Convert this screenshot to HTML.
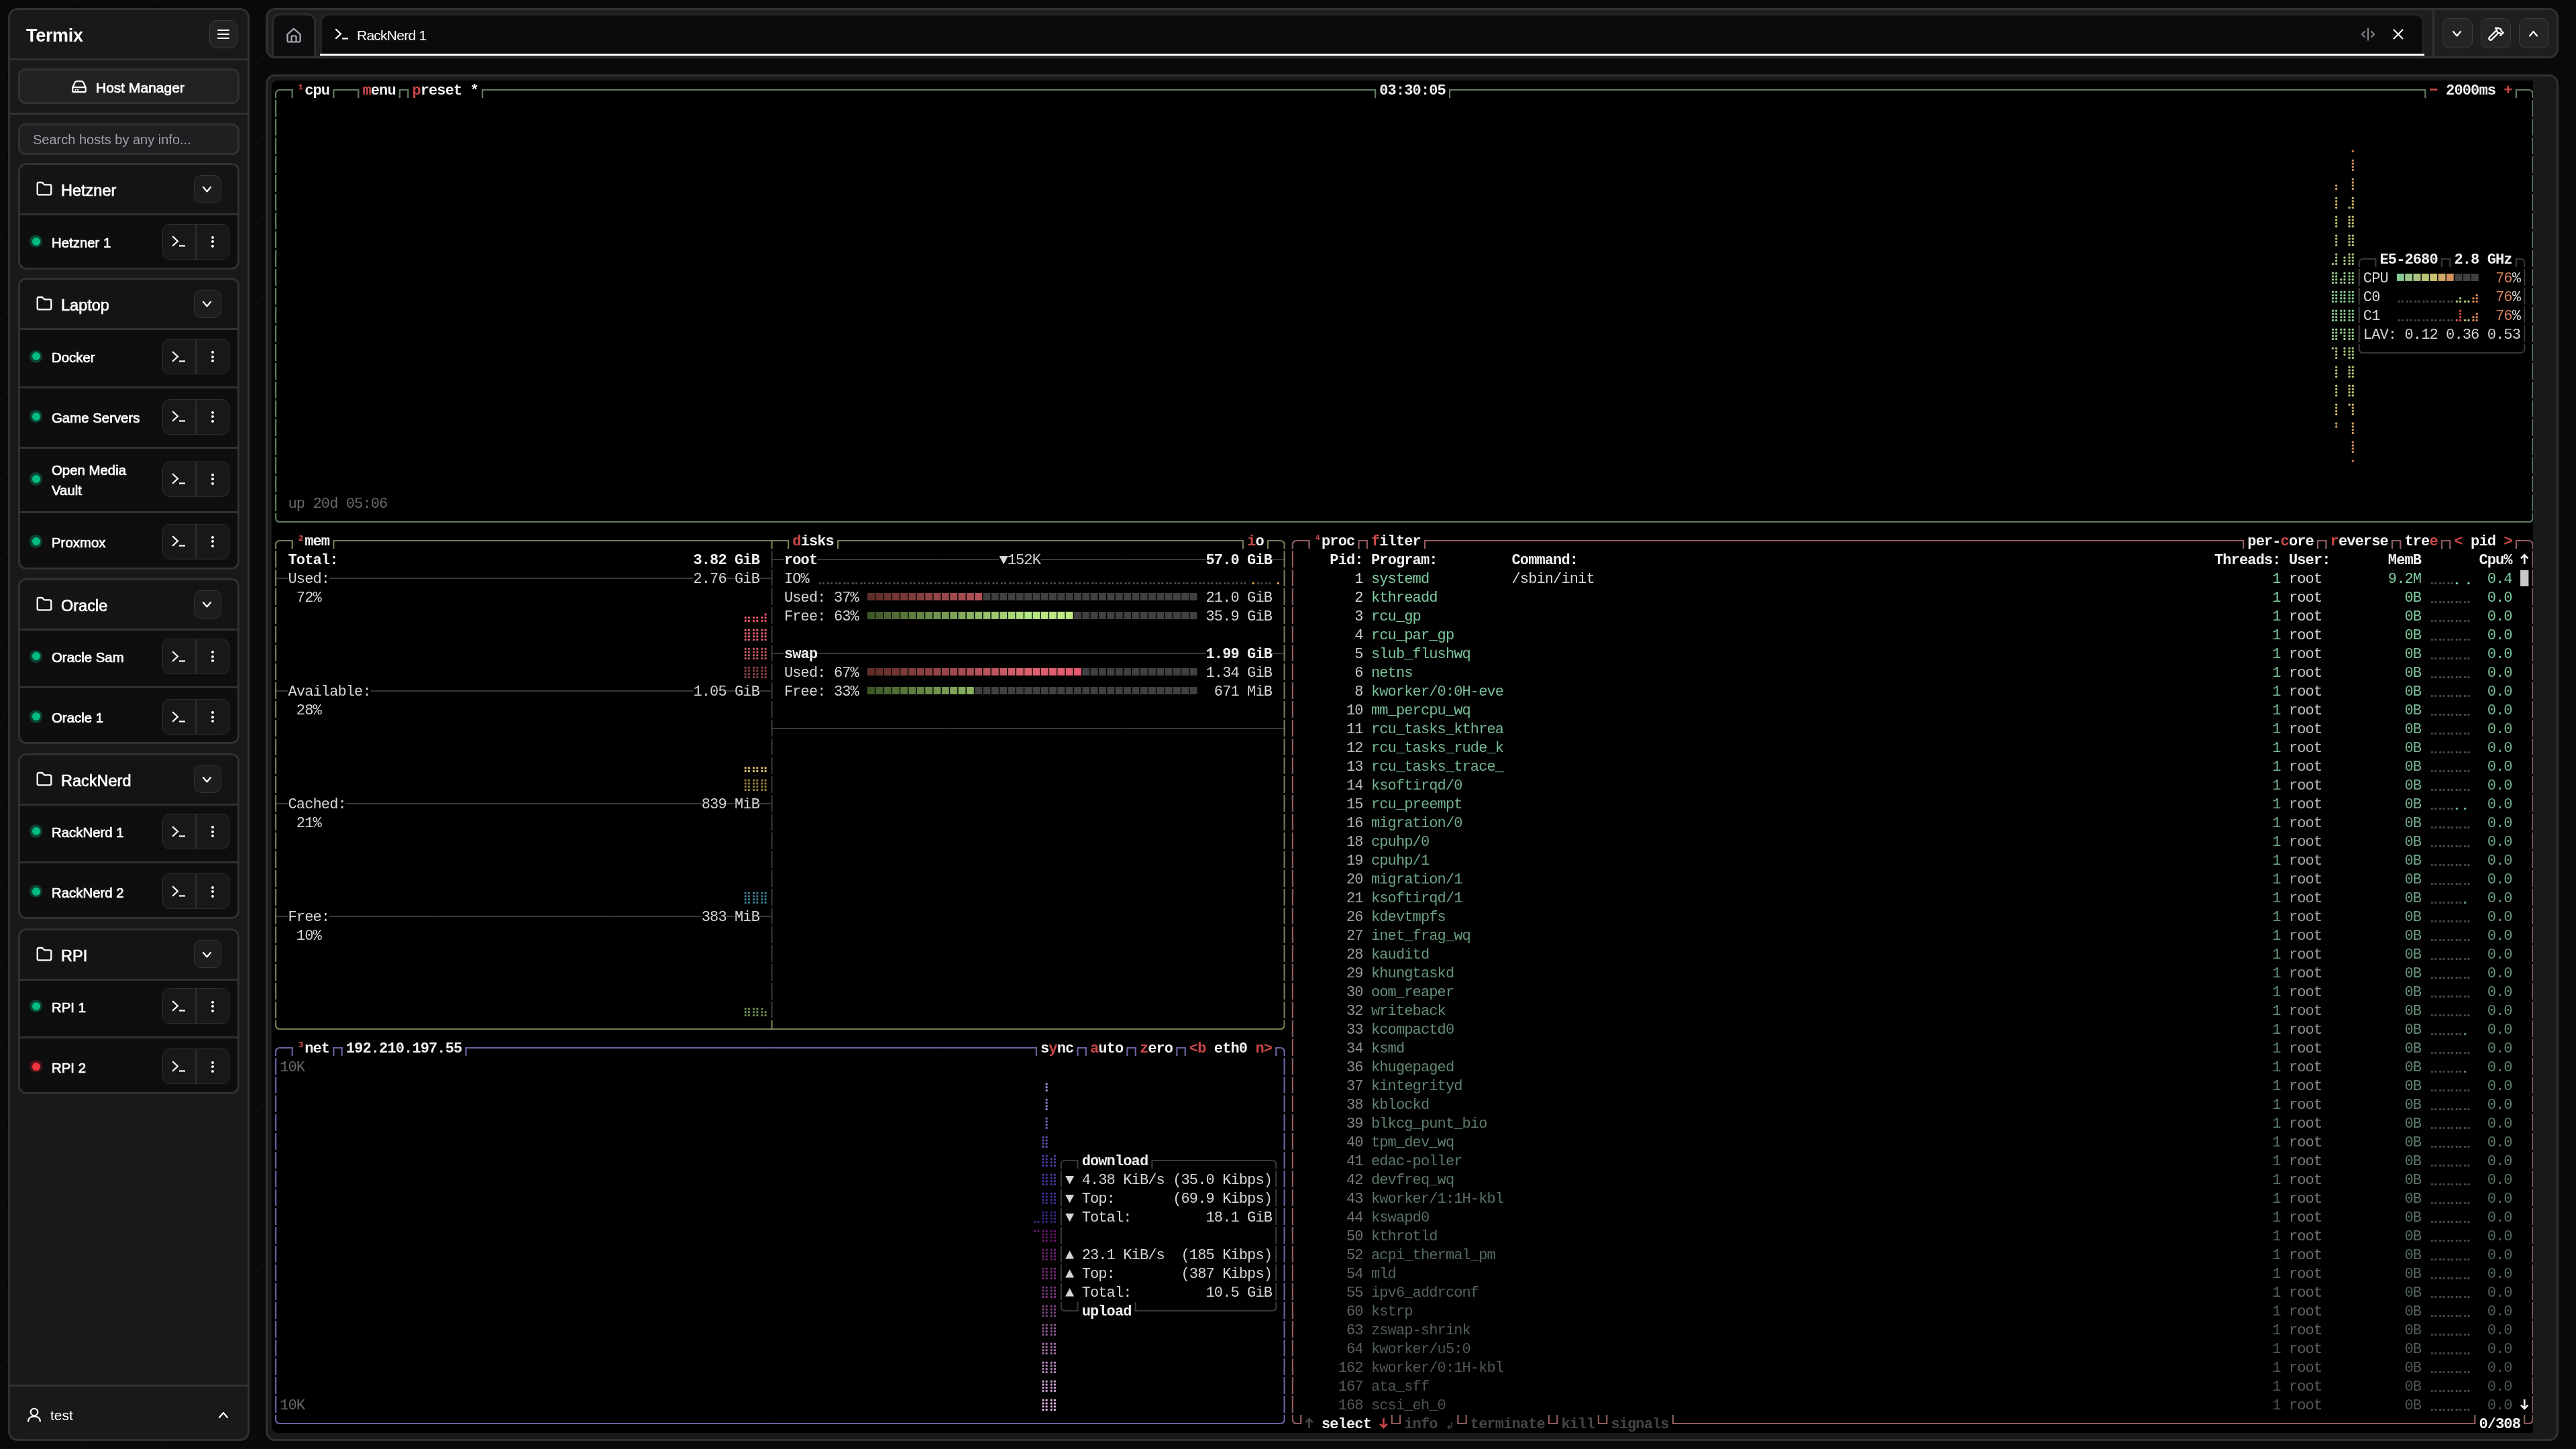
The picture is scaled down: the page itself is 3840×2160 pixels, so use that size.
<!DOCTYPE html><html><head><meta charset="utf-8"><style>
*{margin:0;padding:0}
html,body{width:3840px;height:2160px;overflow:hidden;background:#09090b}
body{position:relative}
#pat{position:absolute;left:0;top:0;width:477.5px;height:2160px;clip-path:inset(0 81.5px 0 0);background:repeating-linear-gradient(-45deg, rgba(0,0,0,0) 0px, rgba(0,0,0,0) 83px, #0e0e11 83px, #0e0e11 85px)}
.abs{position:absolute}
.ui{font-family:"Liberation Sans",sans-serif;white-space:nowrap}
.b{font-weight:bold}
.sb{-webkit-text-stroke:0.7px #fff}
.ui{will-change:transform}
.tg{position:absolute;left:0;top:0}
#term{position:absolute;left:0;top:0;width:3840px;height:2160px;overflow:hidden;clip-path:inset(120.3px 64px 24.1px 405.2px round 9px 0 0 9px);will-change:transform}
#term i{position:absolute;font-style:normal;font-family:"Liberation Mono",monospace;font-size:22px;line-height:28px;letter-spacing:-0.878px;white-space:pre;margin-top:1.3px}
#term i.b{font-weight:bold}
#term i.sup{font-size:19px;font-weight:bold;margin-top:-0.2px;margin-left:0.8px;letter-spacing:0}
.sb{-webkit-text-stroke:0.7px #fff}
.ui{will-change:transform}
</style></head><body>
<div id="pat"></div>
<div class="abs" style="left:12.0px;top:12.0px;width:360.3px;height:2136.0px;background:#19191b;border:3px solid #313134;border-radius:14px;box-sizing:border-box"></div>
<div class="abs ui b" style="left:39px;top:33px;font-size:27px;line-height:40px;color:#fff;letter-spacing:-0.3px">Termix</div>
<div class="abs" style="left:312.0px;top:30.4px;width:42.0px;height:41.4px;border:1.5px solid #3c3c40;border-radius:11px;box-sizing:border-box;background:#222225"></div>
<div class="abs" style="left:324.0px;top:43.7px;width:18.3px;height:2.2px;background:#fff;border-radius:1px"></div>
<div class="abs" style="left:324.0px;top:49.8px;width:18.3px;height:2.2px;background:#fff;border-radius:1px"></div>
<div class="abs" style="left:324.0px;top:55.9px;width:18.3px;height:2.2px;background:#fff;border-radius:1px"></div>
<div class="abs" style="left:15.0px;top:87.0px;width:354.3px;height:3.0px;background:#313134"></div>
<div class="abs" style="left:27.3px;top:102.2px;width:329.5px;height:53.1px;border:3px solid #313134;border-radius:11px;box-sizing:border-box;background:#212124"></div>
<svg class="abs" style="left:103.5px;top:117px" width="28" height="24" viewBox="0 0 28 24"><path d="M4.3 13.2 L8 5.3 Q8.8 4.2 10.3 4.2 H17.7 Q19.2 4.2 20 5.3 L23.7 13.2 M4.3 13.2 V18.4 Q4.3 20.2 6.1 20.2 H21.9 Q23.7 20.2 23.7 18.4 V13.2 Z" fill="none" stroke="#fff" stroke-width="2.2" stroke-linejoin="round"/><circle cx="8.8" cy="16.9" r="1.2" fill="#fff"/><circle cx="12.3" cy="16.9" r="1.2" fill="#fff"/></svg>
<div class="abs ui sb" style="left:143px;top:115.7px;font-size:21px;line-height:30px;color:#fff">Host Manager</div>
<div class="abs" style="left:15.0px;top:167.7px;width:354.3px;height:3.1px;background:#313134"></div>
<div class="abs" style="left:27.3px;top:183.5px;width:329.5px;height:47.5px;border:3px solid #313134;border-radius:11px;box-sizing:border-box;background:#1f1f22"></div>
<div class="abs ui" style="left:48.5px;top:193px;font-size:20px;line-height:30px;color:#a0a0a8">Search hosts by any info...</div>
<div class="abs" style="left:27.0px;top:243.0px;width:330.0px;height:159.0px;background:#0e0e10;border:3px solid #313134;border-radius:12px;box-sizing:border-box;overflow:hidden"></div>
<div class="abs" style="left:30.0px;top:246.0px;width:324.0px;height:72.0px;background:#141416;border-radius:9px 9px 0 0"></div>
<div class="abs" style="left:30.0px;top:318.0px;width:324.0px;height:3.0px;background:#313134"></div>
<svg class="abs" style="left:52.5px;top:270.0px" width="26" height="23" viewBox="0 0 26 23"><path d="M2.7 4 Q2.7 2 4.7 2 H10 L13 5.3 H21.3 Q23.3 5.3 23.3 7.3 V18.3 Q23.3 20.3 21.3 20.3 H4.7 Q2.7 20.3 2.7 18.3 Z" fill="none" stroke="#fff" stroke-width="2.3" stroke-linejoin="round"/></svg>
<div class="abs ui sb" style="left:90.5px;top:269.2px;font-size:23.5px;line-height:30px;color:#fff;-webkit-text-stroke:0.65px #fff">Hetzner</div>
<div class="abs" style="left:288.5px;top:260.9px;width:41.5px;height:41.9px;border:1.5px solid #353538;border-radius:11px;box-sizing:border-box;background:#1d1d20"></div>
<svg class="abs" style="left:301.0px;top:277.0px" width="15" height="10" viewBox="0 0 15 10"><path d="M2 2 L7.5 8.5 L13.0 2" fill="none" stroke="#fff" stroke-width="2.2" stroke-linecap="round" stroke-linejoin="round"/></svg>
<div class="abs" style="left:44.1px;top:350.1px;width:19.4px;height:19.4px;border-radius:50%;background:#0b4430"></div>
<div class="abs" style="left:47.6px;top:353.6px;width:12.4px;height:12.4px;border-radius:50%;background:#03bb83"></div>
<div class="abs ui sb" style="left:77px;top:346.7px;font-size:20.4px;line-height:30px;color:#fff">Hetzner 1</div>
<div class="abs" style="left:242.4px;top:333.5px;width:99.4px;height:53.0px;border:1.5px solid #2e2e31;border-radius:11px;box-sizing:border-box;background:#18181b"></div>
<div class="abs" style="left:291.0px;top:333.5px;width:1.5px;height:53.0px;background:#2e2e31"></div>
<svg class="abs" style="left:256.0px;top:351.3px" width="22" height="18" viewBox="0 0 22 18"><path d="M2 2 L9 8.5 L2 15" fill="none" stroke="#fff" stroke-width="2.2" stroke-linecap="square"/><path d="M11 15.5 H20" stroke="#fff" stroke-width="2.2"/></svg>
<div class="abs" style="left:315.0px;top:351.8px;width:4px;height:4px;border-radius:50%;background:#fff"></div>
<div class="abs" style="left:315.0px;top:358.3px;width:4px;height:4px;border-radius:50%;background:#fff"></div>
<div class="abs" style="left:315.0px;top:364.8px;width:4px;height:4px;border-radius:50%;background:#fff"></div>
<div class="abs" style="left:27.0px;top:414.0px;width:330.0px;height:435.0px;background:#0e0e10;border:3px solid #313134;border-radius:12px;box-sizing:border-box;overflow:hidden"></div>
<div class="abs" style="left:30.0px;top:417.0px;width:324.0px;height:72.0px;background:#141416;border-radius:9px 9px 0 0"></div>
<div class="abs" style="left:30.0px;top:489.0px;width:324.0px;height:3.0px;background:#313134"></div>
<div class="abs" style="left:30.0px;top:576.0px;width:324.0px;height:3.0px;background:#313134"></div>
<div class="abs" style="left:30.0px;top:666.0px;width:324.0px;height:3.0px;background:#313134"></div>
<div class="abs" style="left:30.0px;top:762.0px;width:324.0px;height:3.0px;background:#313134"></div>
<svg class="abs" style="left:52.5px;top:441.0px" width="26" height="23" viewBox="0 0 26 23"><path d="M2.7 4 Q2.7 2 4.7 2 H10 L13 5.3 H21.3 Q23.3 5.3 23.3 7.3 V18.3 Q23.3 20.3 21.3 20.3 H4.7 Q2.7 20.3 2.7 18.3 Z" fill="none" stroke="#fff" stroke-width="2.3" stroke-linejoin="round"/></svg>
<div class="abs ui sb" style="left:90.5px;top:440.2px;font-size:23.5px;line-height:30px;color:#fff;-webkit-text-stroke:0.65px #fff">Laptop</div>
<div class="abs" style="left:288.5px;top:431.9px;width:41.5px;height:41.9px;border:1.5px solid #353538;border-radius:11px;box-sizing:border-box;background:#1d1d20"></div>
<svg class="abs" style="left:301.0px;top:448.0px" width="15" height="10" viewBox="0 0 15 10"><path d="M2 2 L7.5 8.5 L13.0 2" fill="none" stroke="#fff" stroke-width="2.2" stroke-linecap="round" stroke-linejoin="round"/></svg>
<div class="abs" style="left:44.1px;top:521.5px;width:19.4px;height:19.4px;border-radius:50%;background:#0b4430"></div>
<div class="abs" style="left:47.6px;top:525.0px;width:12.4px;height:12.4px;border-radius:50%;background:#03bb83"></div>
<div class="abs ui sb" style="left:77px;top:518.1px;font-size:20.4px;line-height:30px;color:#fff">Docker</div>
<div class="abs" style="left:242.4px;top:504.9px;width:99.4px;height:53.0px;border:1.5px solid #2e2e31;border-radius:11px;box-sizing:border-box;background:#18181b"></div>
<div class="abs" style="left:291.0px;top:504.9px;width:1.5px;height:53.0px;background:#2e2e31"></div>
<svg class="abs" style="left:256.0px;top:522.7px" width="22" height="18" viewBox="0 0 22 18"><path d="M2 2 L9 8.5 L2 15" fill="none" stroke="#fff" stroke-width="2.2" stroke-linecap="square"/><path d="M11 15.5 H20" stroke="#fff" stroke-width="2.2"/></svg>
<div class="abs" style="left:315.0px;top:523.2px;width:4px;height:4px;border-radius:50%;background:#fff"></div>
<div class="abs" style="left:315.0px;top:529.7px;width:4px;height:4px;border-radius:50%;background:#fff"></div>
<div class="abs" style="left:315.0px;top:536.2px;width:4px;height:4px;border-radius:50%;background:#fff"></div>
<div class="abs" style="left:44.1px;top:611.1px;width:19.4px;height:19.4px;border-radius:50%;background:#0b4430"></div>
<div class="abs" style="left:47.6px;top:614.6px;width:12.4px;height:12.4px;border-radius:50%;background:#03bb83"></div>
<div class="abs ui sb" style="left:77px;top:607.7px;font-size:20.4px;line-height:30px;color:#fff">Game Servers</div>
<div class="abs" style="left:242.4px;top:594.5px;width:99.4px;height:53.0px;border:1.5px solid #2e2e31;border-radius:11px;box-sizing:border-box;background:#18181b"></div>
<div class="abs" style="left:291.0px;top:594.5px;width:1.5px;height:53.0px;background:#2e2e31"></div>
<svg class="abs" style="left:256.0px;top:612.3px" width="22" height="18" viewBox="0 0 22 18"><path d="M2 2 L9 8.5 L2 15" fill="none" stroke="#fff" stroke-width="2.2" stroke-linecap="square"/><path d="M11 15.5 H20" stroke="#fff" stroke-width="2.2"/></svg>
<div class="abs" style="left:315.0px;top:612.8px;width:4px;height:4px;border-radius:50%;background:#fff"></div>
<div class="abs" style="left:315.0px;top:619.3px;width:4px;height:4px;border-radius:50%;background:#fff"></div>
<div class="abs" style="left:315.0px;top:625.8px;width:4px;height:4px;border-radius:50%;background:#fff"></div>
<div class="abs" style="left:44.1px;top:704.2px;width:19.4px;height:19.4px;border-radius:50%;background:#0b4430"></div>
<div class="abs" style="left:47.6px;top:707.7px;width:12.4px;height:12.4px;border-radius:50%;background:#03bb83"></div>
<div class="abs ui sb" style="left:77px;top:686.8px;font-size:20.4px;line-height:29.5px;color:#fff">Open Media<br>Vault</div>
<div class="abs" style="left:242.4px;top:687.6px;width:99.4px;height:53.0px;border:1.5px solid #2e2e31;border-radius:11px;box-sizing:border-box;background:#18181b"></div>
<div class="abs" style="left:291.0px;top:687.6px;width:1.5px;height:53.0px;background:#2e2e31"></div>
<svg class="abs" style="left:256.0px;top:705.4px" width="22" height="18" viewBox="0 0 22 18"><path d="M2 2 L9 8.5 L2 15" fill="none" stroke="#fff" stroke-width="2.2" stroke-linecap="square"/><path d="M11 15.5 H20" stroke="#fff" stroke-width="2.2"/></svg>
<div class="abs" style="left:315.0px;top:705.9px;width:4px;height:4px;border-radius:50%;background:#fff"></div>
<div class="abs" style="left:315.0px;top:712.4px;width:4px;height:4px;border-radius:50%;background:#fff"></div>
<div class="abs" style="left:315.0px;top:718.9px;width:4px;height:4px;border-radius:50%;background:#fff"></div>
<div class="abs" style="left:44.1px;top:797.2px;width:19.4px;height:19.4px;border-radius:50%;background:#0b4430"></div>
<div class="abs" style="left:47.6px;top:800.7px;width:12.4px;height:12.4px;border-radius:50%;background:#03bb83"></div>
<div class="abs ui sb" style="left:77px;top:793.8px;font-size:20.4px;line-height:30px;color:#fff">Proxmox</div>
<div class="abs" style="left:242.4px;top:780.6px;width:99.4px;height:53.0px;border:1.5px solid #2e2e31;border-radius:11px;box-sizing:border-box;background:#18181b"></div>
<div class="abs" style="left:291.0px;top:780.6px;width:1.5px;height:53.0px;background:#2e2e31"></div>
<svg class="abs" style="left:256.0px;top:798.4px" width="22" height="18" viewBox="0 0 22 18"><path d="M2 2 L9 8.5 L2 15" fill="none" stroke="#fff" stroke-width="2.2" stroke-linecap="square"/><path d="M11 15.5 H20" stroke="#fff" stroke-width="2.2"/></svg>
<div class="abs" style="left:315.0px;top:798.9px;width:4px;height:4px;border-radius:50%;background:#fff"></div>
<div class="abs" style="left:315.0px;top:805.4px;width:4px;height:4px;border-radius:50%;background:#fff"></div>
<div class="abs" style="left:315.0px;top:811.9px;width:4px;height:4px;border-radius:50%;background:#fff"></div>
<div class="abs" style="left:27.0px;top:862.0px;width:330.0px;height:247.0px;background:#0e0e10;border:3px solid #313134;border-radius:12px;box-sizing:border-box;overflow:hidden"></div>
<div class="abs" style="left:30.0px;top:865.0px;width:324.0px;height:72.0px;background:#141416;border-radius:9px 9px 0 0"></div>
<div class="abs" style="left:30.0px;top:937.0px;width:324.0px;height:3.0px;background:#313134"></div>
<div class="abs" style="left:30.0px;top:1023.0px;width:324.0px;height:3.0px;background:#313134"></div>
<svg class="abs" style="left:52.5px;top:889.0px" width="26" height="23" viewBox="0 0 26 23"><path d="M2.7 4 Q2.7 2 4.7 2 H10 L13 5.3 H21.3 Q23.3 5.3 23.3 7.3 V18.3 Q23.3 20.3 21.3 20.3 H4.7 Q2.7 20.3 2.7 18.3 Z" fill="none" stroke="#fff" stroke-width="2.3" stroke-linejoin="round"/></svg>
<div class="abs ui sb" style="left:90.5px;top:888.2px;font-size:23.5px;line-height:30px;color:#fff;-webkit-text-stroke:0.65px #fff">Oracle</div>
<div class="abs" style="left:288.5px;top:879.9px;width:41.5px;height:41.9px;border:1.5px solid #353538;border-radius:11px;box-sizing:border-box;background:#1d1d20"></div>
<svg class="abs" style="left:301.0px;top:896.0px" width="15" height="10" viewBox="0 0 15 10"><path d="M2 2 L7.5 8.5 L13.0 2" fill="none" stroke="#fff" stroke-width="2.2" stroke-linecap="round" stroke-linejoin="round"/></svg>
<div class="abs" style="left:44.1px;top:968.6px;width:19.4px;height:19.4px;border-radius:50%;background:#0b4430"></div>
<div class="abs" style="left:47.6px;top:972.1px;width:12.4px;height:12.4px;border-radius:50%;background:#03bb83"></div>
<div class="abs ui sb" style="left:77px;top:965.2px;font-size:20.4px;line-height:30px;color:#fff">Oracle Sam</div>
<div class="abs" style="left:242.4px;top:952.0px;width:99.4px;height:53.0px;border:1.5px solid #2e2e31;border-radius:11px;box-sizing:border-box;background:#18181b"></div>
<div class="abs" style="left:291.0px;top:952.0px;width:1.5px;height:53.0px;background:#2e2e31"></div>
<svg class="abs" style="left:256.0px;top:969.8px" width="22" height="18" viewBox="0 0 22 18"><path d="M2 2 L9 8.5 L2 15" fill="none" stroke="#fff" stroke-width="2.2" stroke-linecap="square"/><path d="M11 15.5 H20" stroke="#fff" stroke-width="2.2"/></svg>
<div class="abs" style="left:315.0px;top:970.3px;width:4px;height:4px;border-radius:50%;background:#fff"></div>
<div class="abs" style="left:315.0px;top:976.8px;width:4px;height:4px;border-radius:50%;background:#fff"></div>
<div class="abs" style="left:315.0px;top:983.3px;width:4px;height:4px;border-radius:50%;background:#fff"></div>
<div class="abs" style="left:44.1px;top:1058.3px;width:19.4px;height:19.4px;border-radius:50%;background:#0b4430"></div>
<div class="abs" style="left:47.6px;top:1061.8px;width:12.4px;height:12.4px;border-radius:50%;background:#03bb83"></div>
<div class="abs ui sb" style="left:77px;top:1054.9px;font-size:20.4px;line-height:30px;color:#fff">Oracle 1</div>
<div class="abs" style="left:242.4px;top:1041.7px;width:99.4px;height:53.0px;border:1.5px solid #2e2e31;border-radius:11px;box-sizing:border-box;background:#18181b"></div>
<div class="abs" style="left:291.0px;top:1041.7px;width:1.5px;height:53.0px;background:#2e2e31"></div>
<svg class="abs" style="left:256.0px;top:1059.5px" width="22" height="18" viewBox="0 0 22 18"><path d="M2 2 L9 8.5 L2 15" fill="none" stroke="#fff" stroke-width="2.2" stroke-linecap="square"/><path d="M11 15.5 H20" stroke="#fff" stroke-width="2.2"/></svg>
<div class="abs" style="left:315.0px;top:1060.0px;width:4px;height:4px;border-radius:50%;background:#fff"></div>
<div class="abs" style="left:315.0px;top:1066.5px;width:4px;height:4px;border-radius:50%;background:#fff"></div>
<div class="abs" style="left:315.0px;top:1073.0px;width:4px;height:4px;border-radius:50%;background:#fff"></div>
<div class="abs" style="left:27.0px;top:1122.5px;width:330.0px;height:247.8px;background:#0e0e10;border:3px solid #313134;border-radius:12px;box-sizing:border-box;overflow:hidden"></div>
<div class="abs" style="left:30.0px;top:1125.5px;width:324.0px;height:72.0px;background:#141416;border-radius:9px 9px 0 0"></div>
<div class="abs" style="left:30.0px;top:1197.5px;width:324.0px;height:3.0px;background:#313134"></div>
<div class="abs" style="left:30.0px;top:1283.8px;width:324.0px;height:3.0px;background:#313134"></div>
<svg class="abs" style="left:52.5px;top:1149.5px" width="26" height="23" viewBox="0 0 26 23"><path d="M2.7 4 Q2.7 2 4.7 2 H10 L13 5.3 H21.3 Q23.3 5.3 23.3 7.3 V18.3 Q23.3 20.3 21.3 20.3 H4.7 Q2.7 20.3 2.7 18.3 Z" fill="none" stroke="#fff" stroke-width="2.3" stroke-linejoin="round"/></svg>
<div class="abs ui sb" style="left:90.5px;top:1148.7px;font-size:23.5px;line-height:30px;color:#fff;-webkit-text-stroke:0.65px #fff">RackNerd</div>
<div class="abs" style="left:288.5px;top:1140.4px;width:41.5px;height:41.9px;border:1.5px solid #353538;border-radius:11px;box-sizing:border-box;background:#1d1d20"></div>
<svg class="abs" style="left:301.0px;top:1156.5px" width="15" height="10" viewBox="0 0 15 10"><path d="M2 2 L7.5 8.5 L13.0 2" fill="none" stroke="#fff" stroke-width="2.2" stroke-linecap="round" stroke-linejoin="round"/></svg>
<div class="abs" style="left:44.1px;top:1229.3px;width:19.4px;height:19.4px;border-radius:50%;background:#0b4430"></div>
<div class="abs" style="left:47.6px;top:1232.8px;width:12.4px;height:12.4px;border-radius:50%;background:#03bb83"></div>
<div class="abs ui sb" style="left:77px;top:1225.9px;font-size:20.4px;line-height:30px;color:#fff">RackNerd 1</div>
<div class="abs" style="left:242.4px;top:1212.7px;width:99.4px;height:53.0px;border:1.5px solid #2e2e31;border-radius:11px;box-sizing:border-box;background:#18181b"></div>
<div class="abs" style="left:291.0px;top:1212.7px;width:1.5px;height:53.0px;background:#2e2e31"></div>
<svg class="abs" style="left:256.0px;top:1230.5px" width="22" height="18" viewBox="0 0 22 18"><path d="M2 2 L9 8.5 L2 15" fill="none" stroke="#fff" stroke-width="2.2" stroke-linecap="square"/><path d="M11 15.5 H20" stroke="#fff" stroke-width="2.2"/></svg>
<div class="abs" style="left:315.0px;top:1231.0px;width:4px;height:4px;border-radius:50%;background:#fff"></div>
<div class="abs" style="left:315.0px;top:1237.5px;width:4px;height:4px;border-radius:50%;background:#fff"></div>
<div class="abs" style="left:315.0px;top:1244.0px;width:4px;height:4px;border-radius:50%;background:#fff"></div>
<div class="abs" style="left:44.1px;top:1319.0px;width:19.4px;height:19.4px;border-radius:50%;background:#0b4430"></div>
<div class="abs" style="left:47.6px;top:1322.5px;width:12.4px;height:12.4px;border-radius:50%;background:#03bb83"></div>
<div class="abs ui sb" style="left:77px;top:1315.6px;font-size:20.4px;line-height:30px;color:#fff">RackNerd 2</div>
<div class="abs" style="left:242.4px;top:1302.4px;width:99.4px;height:53.0px;border:1.5px solid #2e2e31;border-radius:11px;box-sizing:border-box;background:#18181b"></div>
<div class="abs" style="left:291.0px;top:1302.4px;width:1.5px;height:53.0px;background:#2e2e31"></div>
<svg class="abs" style="left:256.0px;top:1320.2px" width="22" height="18" viewBox="0 0 22 18"><path d="M2 2 L9 8.5 L2 15" fill="none" stroke="#fff" stroke-width="2.2" stroke-linecap="square"/><path d="M11 15.5 H20" stroke="#fff" stroke-width="2.2"/></svg>
<div class="abs" style="left:315.0px;top:1320.7px;width:4px;height:4px;border-radius:50%;background:#fff"></div>
<div class="abs" style="left:315.0px;top:1327.2px;width:4px;height:4px;border-radius:50%;background:#fff"></div>
<div class="abs" style="left:315.0px;top:1333.7px;width:4px;height:4px;border-radius:50%;background:#fff"></div>
<div class="abs" style="left:27.0px;top:1383.5px;width:330.0px;height:247.5px;background:#0e0e10;border:3px solid #313134;border-radius:12px;box-sizing:border-box;overflow:hidden"></div>
<div class="abs" style="left:30.0px;top:1386.5px;width:324.0px;height:72.0px;background:#141416;border-radius:9px 9px 0 0"></div>
<div class="abs" style="left:30.0px;top:1458.5px;width:324.0px;height:3.0px;background:#313134"></div>
<div class="abs" style="left:30.0px;top:1544.8px;width:324.0px;height:3.0px;background:#313134"></div>
<svg class="abs" style="left:52.5px;top:1410.5px" width="26" height="23" viewBox="0 0 26 23"><path d="M2.7 4 Q2.7 2 4.7 2 H10 L13 5.3 H21.3 Q23.3 5.3 23.3 7.3 V18.3 Q23.3 20.3 21.3 20.3 H4.7 Q2.7 20.3 2.7 18.3 Z" fill="none" stroke="#fff" stroke-width="2.3" stroke-linejoin="round"/></svg>
<div class="abs ui sb" style="left:90.5px;top:1409.7px;font-size:23.5px;line-height:30px;color:#fff;-webkit-text-stroke:0.65px #fff">RPI</div>
<div class="abs" style="left:288.5px;top:1401.4px;width:41.5px;height:41.9px;border:1.5px solid #353538;border-radius:11px;box-sizing:border-box;background:#1d1d20"></div>
<svg class="abs" style="left:301.0px;top:1417.5px" width="15" height="10" viewBox="0 0 15 10"><path d="M2 2 L7.5 8.5 L13.0 2" fill="none" stroke="#fff" stroke-width="2.2" stroke-linecap="round" stroke-linejoin="round"/></svg>
<div class="abs" style="left:44.1px;top:1490.0px;width:19.4px;height:19.4px;border-radius:50%;background:#0b4430"></div>
<div class="abs" style="left:47.6px;top:1493.5px;width:12.4px;height:12.4px;border-radius:50%;background:#03bb83"></div>
<div class="abs ui sb" style="left:77px;top:1486.6px;font-size:20.4px;line-height:30px;color:#fff">RPI 1</div>
<div class="abs" style="left:242.4px;top:1473.4px;width:99.4px;height:53.0px;border:1.5px solid #2e2e31;border-radius:11px;box-sizing:border-box;background:#18181b"></div>
<div class="abs" style="left:291.0px;top:1473.4px;width:1.5px;height:53.0px;background:#2e2e31"></div>
<svg class="abs" style="left:256.0px;top:1491.2px" width="22" height="18" viewBox="0 0 22 18"><path d="M2 2 L9 8.5 L2 15" fill="none" stroke="#fff" stroke-width="2.2" stroke-linecap="square"/><path d="M11 15.5 H20" stroke="#fff" stroke-width="2.2"/></svg>
<div class="abs" style="left:315.0px;top:1491.7px;width:4px;height:4px;border-radius:50%;background:#fff"></div>
<div class="abs" style="left:315.0px;top:1498.2px;width:4px;height:4px;border-radius:50%;background:#fff"></div>
<div class="abs" style="left:315.0px;top:1504.7px;width:4px;height:4px;border-radius:50%;background:#fff"></div>
<div class="abs" style="left:44.1px;top:1580.0px;width:19.4px;height:19.4px;border-radius:50%;background:#4a1419"></div>
<div class="abs" style="left:47.6px;top:1583.5px;width:12.4px;height:12.4px;border-radius:50%;background:#f5333f"></div>
<div class="abs ui sb" style="left:77px;top:1576.6px;font-size:20.4px;line-height:30px;color:#fff">RPI 2</div>
<div class="abs" style="left:242.4px;top:1563.4px;width:99.4px;height:53.0px;border:1.5px solid #2e2e31;border-radius:11px;box-sizing:border-box;background:#18181b"></div>
<div class="abs" style="left:291.0px;top:1563.4px;width:1.5px;height:53.0px;background:#2e2e31"></div>
<svg class="abs" style="left:256.0px;top:1581.2px" width="22" height="18" viewBox="0 0 22 18"><path d="M2 2 L9 8.5 L2 15" fill="none" stroke="#fff" stroke-width="2.2" stroke-linecap="square"/><path d="M11 15.5 H20" stroke="#fff" stroke-width="2.2"/></svg>
<div class="abs" style="left:315.0px;top:1581.7px;width:4px;height:4px;border-radius:50%;background:#fff"></div>
<div class="abs" style="left:315.0px;top:1588.2px;width:4px;height:4px;border-radius:50%;background:#fff"></div>
<div class="abs" style="left:315.0px;top:1594.7px;width:4px;height:4px;border-radius:50%;background:#fff"></div>
<div class="abs" style="left:15.0px;top:2063.6px;width:354.3px;height:3.2px;background:#313134"></div>
<svg class="abs" style="left:40px;top:2097px" width="22" height="24" viewBox="0 0 22 24"><circle cx="11" cy="8" r="5.3" fill="none" stroke="#fff" stroke-width="2.1"/><path d="M2 22.5 Q2 14.5 11 14.5 Q20 14.5 20 22.5" fill="none" stroke="#fff" stroke-width="2.1"/></svg>
<div class="abs ui" style="left:75px;top:2095.4px;font-size:21px;line-height:30px;color:#fff">test</div>
<svg class="abs" style="left:325.0px;top:2104.0px" width="16" height="11" viewBox="0 0 16 11"><path d="M2 9.0 L8.0 2 L14.0 9.0" fill="none" stroke="#fff" stroke-width="2.2" stroke-linecap="round" stroke-linejoin="round"/></svg>
<div class="abs" style="left:396.0px;top:12.0px;width:3418.2px;height:74.7px;background:#1e1e21;border:3px solid #313134;border-radius:14px;box-sizing:border-box"></div>
<div class="abs" style="left:405.0px;top:20.0px;width:65.5px;height:63.7px;background:#0d0d0f;border:3px solid #2a2a2d;border-bottom:none;border-radius:12px 12px 0 0;box-sizing:border-box"></div>
<svg class="abs" style="left:425px;top:40px" width="26" height="26" viewBox="0 0 26 26"><path d="M3.5 11 L13 2.8 L22.5 11 V20.5 Q22.5 22.5 20.5 22.5 H5.5 Q3.5 22.5 3.5 20.5 Z" fill="none" stroke="#aeaeb6" stroke-width="2.2" stroke-linejoin="round"/><path d="M9.5 22.5 V15 Q9.5 13.5 11 13.5 H15 Q16.5 13.5 16.5 15 V22.5" fill="none" stroke="#aeaeb6" stroke-width="2.2"/></svg>
<div class="abs" style="left:477.3px;top:20.0px;width:3136.7px;height:63.7px;background:#0b0b0d;border:3px solid #242427;border-bottom:none;border-radius:14px 14px 0 0;box-sizing:border-box"></div>
<div class="abs" style="left:477.3px;top:79.6px;width:3136.7px;height:3.7px;background:#fff"></div>
<svg class="abs" style="left:499.0px;top:42.0px" width="22" height="18" viewBox="0 0 22 18"><path d="M2 2 L9 8.5 L2 15" fill="none" stroke="#fff" stroke-width="2.2" stroke-linecap="square"/><path d="M11 15.5 H20" stroke="#fff" stroke-width="2.2"/></svg>
<div class="abs ui" style="left:532px;top:37.7px;font-size:21px;line-height:30px;color:#fff;letter-spacing:-0.75px">RackNerd 1</div>
<svg class="abs" style="left:3519px;top:40px" width="22" height="22" viewBox="0 0 22 22"><path d="M11 1.5 V20.5" stroke="#8a8a8e" stroke-width="2"/><path d="M6 7 L2 11 L6 15 M16 7 L20 11 L16 15" fill="none" stroke="#8a8a8e" stroke-width="2" stroke-linecap="round" stroke-linejoin="round"/></svg>
<svg class="abs" style="left:3567px;top:43.3px" width="16" height="16" viewBox="0 0 16 16"><path d="M1.5 1.5 L14.5 14.5 M14.5 1.5 L1.5 14.5" stroke="#fff" stroke-width="2" stroke-linecap="round"/></svg>
<div class="abs" style="left:3626.3px;top:14.8px;width:2.6px;height:69.2px;background:#313134"></div>
<div class="abs" style="left:3641.0px;top:27.2px;width:44.6px;height:44.5px;border:1.5px solid #3c3c40;border-radius:11px;box-sizing:border-box;background:#252528"></div>
<div class="abs" style="left:3698.0px;top:27.2px;width:44.6px;height:44.5px;border:1.5px solid #3c3c40;border-radius:11px;box-sizing:border-box;background:#252528"></div>
<div class="abs" style="left:3755.2px;top:27.2px;width:44.6px;height:44.5px;border:1.5px solid #3c3c40;border-radius:11px;box-sizing:border-box;background:#252528"></div>
<svg class="abs" style="left:3655.0px;top:45.0px" width="15" height="10" viewBox="0 0 15 10"><path d="M2 2 L7.5 8.5 L13.0 2" fill="none" stroke="#fff" stroke-width="2.2" stroke-linecap="round" stroke-linejoin="round"/></svg>
<svg class="abs" style="left:3769.0px;top:45.0px" width="15" height="10" viewBox="0 0 15 10"><path d="M2 8.5 L7.5 2 L13.0 8.5" fill="none" stroke="#fff" stroke-width="2.2" stroke-linecap="round" stroke-linejoin="round"/></svg>
<svg class="abs" style="left:3707px;top:36px" width="27" height="27" viewBox="0 0 24 24"><g fill="none" stroke="#fff" stroke-width="2" stroke-linecap="round" stroke-linejoin="round"><path d="m15 12-8.373 8.373a1 1 0 1 1-3-3L12 9"/><path d="m18 15 4-4"/><path d="m21.5 11.5-1.914-1.914A2 2 0 0 1 19 8.172V7l-2.26-1.13a6 6 0 0 0-2.476-.63H11.5l.5.5c.888.888 1.5 2.5 1.5 3.5v.5l2 2h1.172a2 2 0 0 1 1.414.586L19.5 13.5"/></g></svg>
<div class="abs" style="left:396.0px;top:110.9px;width:3418.2px;height:2037.1px;background:#19191b;border:3px solid #313134;border-radius:14px;box-sizing:border-box"></div>
<div class="abs" style="left:405.2px;top:120.3px;width:3370.8px;height:2015.6px;background:#000;border-radius:9px 0 0 9px"></div>
<div id="term">
<svg class="tg" width="3840" height="2160" viewBox="0 0 3840 2160">
<path fill="none" stroke="#617c62" stroke-width="2.2" d="M417.21 134H416.55A5.5 5.5 0 0 0 411.05 139.5V145.9M3769.34 134H3770A5.5 5.5 0 0 1 3775.5 139.5V145.9M411.05 765.1V772.5A5.5 5.5 0 0 0 416.55 778H417.21M3775.5 765.1V772.5A5.5 5.5 0 0 1 3770 778H3769.34M417.21 134H429.54M429.54 134H436.8M435.7 134V145.9M496.22 134H503.48M497.32 134V145.9M503.48 134H515.81M515.81 134H528.13M528.13 134H535.39M534.29 134V145.9M594.81 134H602.07M595.91 134V145.9M602.07 134H609.34M608.24 134V145.9M718.05 134H725.31M719.15 134V145.9M725.31 134H737.64M737.64 134H749.96M749.96 134H762.29M762.29 134H774.61M774.61 134H786.93M786.93 134H799.26M799.26 134H811.58M811.58 134H823.91M823.91 134H836.23M836.23 134H848.55M848.55 134H860.88M860.88 134H873.2M873.2 134H885.53M885.53 134H897.85M897.85 134H910.17M910.17 134H922.5M922.5 134H934.82M934.82 134H947.15M947.15 134H959.47M959.47 134H971.79M971.79 134H984.12M984.12 134H996.44M996.44 134H1008.77M1008.77 134H1021.09M1021.09 134H1033.41M1033.41 134H1045.74M1045.74 134H1058.06M1058.06 134H1070.39M1070.39 134H1082.71M1082.71 134H1095.03M1095.03 134H1107.36M1107.36 134H1119.68M1119.68 134H1132.01M1132.01 134H1144.33M1144.33 134H1156.65M1156.65 134H1168.98M1168.98 134H1181.3M1181.3 134H1193.63M1193.63 134H1205.95M1205.95 134H1218.27M1218.27 134H1230.6M1230.6 134H1242.92M1242.92 134H1255.25M1255.25 134H1267.57M1267.57 134H1279.89M1279.89 134H1292.22M1292.22 134H1304.54M1304.54 134H1316.87M1316.87 134H1329.19M1329.19 134H1341.51M1341.51 134H1353.84M1353.84 134H1366.16M1366.16 134H1378.49M1378.49 134H1390.81M1390.81 134H1403.13M1403.13 134H1415.46M1415.46 134H1427.78M1427.78 134H1440.11M1440.11 134H1452.43M1452.43 134H1464.75M1464.75 134H1477.08M1477.08 134H1489.4M1489.4 134H1501.73M1501.73 134H1514.05M1514.05 134H1526.37M1526.37 134H1538.7M1538.7 134H1551.02M1551.02 134H1563.35M1563.35 134H1575.67M1575.67 134H1587.99M1587.99 134H1600.32M1600.32 134H1612.64M1612.64 134H1624.97M1624.97 134H1637.29M1637.29 134H1649.61M1649.61 134H1661.94M1661.94 134H1674.26M1674.26 134H1686.59M1686.59 134H1698.91M1698.91 134H1711.23M1711.23 134H1723.56M1723.56 134H1735.88M1735.88 134H1748.21M1748.21 134H1760.53M1760.53 134H1772.85M1772.85 134H1785.18M1785.18 134H1797.5M1797.5 134H1809.83M1809.83 134H1822.15M1822.15 134H1834.47M1834.47 134H1846.8M1846.8 134H1859.12M1859.12 134H1871.45M1871.45 134H1883.77M1883.77 134H1896.09M1896.09 134H1908.42M1908.42 134H1920.74M1920.74 134H1933.07M1933.07 134H1945.39M1945.39 134H1957.71M1957.71 134H1970.04M1970.04 134H1982.36M1982.36 134H1994.69M1994.69 134H2007.01M2007.01 134H2019.33M2019.33 134H2031.66M2031.66 134H2043.98M2043.98 134H2051.24M2050.14 134V145.9M2159.96 134H2167.22M2161.06 134V145.9M2167.22 134H2179.55M2179.55 134H2191.87M2191.87 134H2204.19M2204.19 134H2216.52M2216.52 134H2228.84M2228.84 134H2241.17M2241.17 134H2253.49M2253.49 134H2265.81M2265.81 134H2278.14M2278.14 134H2290.46M2290.46 134H2302.79M2302.79 134H2315.11M2315.11 134H2327.43M2327.43 134H2339.76M2339.76 134H2352.08M2352.08 134H2364.41M2364.41 134H2376.73M2376.73 134H2389.05M2389.05 134H2401.38M2401.38 134H2413.7M2413.7 134H2426.03M2426.03 134H2438.35M2438.35 134H2450.67M2450.67 134H2463M2463 134H2475.32M2475.32 134H2487.65M2487.65 134H2499.97M2499.97 134H2512.29M2512.29 134H2524.62M2524.62 134H2536.94M2536.94 134H2549.27M2549.27 134H2561.59M2561.59 134H2573.91M2573.91 134H2586.24M2586.24 134H2598.56M2598.56 134H2610.89M2610.89 134H2623.21M2623.21 134H2635.53M2635.53 134H2647.86M2647.86 134H2660.18M2660.18 134H2672.51M2672.51 134H2684.83M2684.83 134H2697.15M2697.15 134H2709.48M2709.48 134H2721.8M2721.8 134H2734.13M2734.13 134H2746.45M2746.45 134H2758.77M2758.77 134H2771.1M2771.1 134H2783.42M2783.42 134H2795.75M2795.75 134H2808.07M2808.07 134H2820.39M2820.39 134H2832.72M2832.72 134H2845.04M2845.04 134H2857.37M2857.37 134H2869.69M2869.69 134H2882.01M2882.01 134H2894.34M2894.34 134H2906.66M2906.66 134H2918.99M2918.99 134H2931.31M2931.31 134H2943.63M2943.63 134H2955.96M2955.96 134H2968.28M2968.28 134H2980.61M2980.61 134H2992.93M2992.93 134H3005.25M3005.25 134H3017.58M3017.58 134H3029.9M3029.9 134H3042.23M3042.23 134H3054.55M3054.55 134H3066.87M3066.87 134H3079.2M3079.2 134H3091.52M3091.52 134H3103.85M3103.85 134H3116.17M3116.17 134H3128.49M3128.49 134H3140.82M3140.82 134H3153.14M3153.14 134H3165.47M3165.47 134H3177.79M3177.79 134H3190.11M3190.11 134H3202.44M3202.44 134H3214.76M3214.76 134H3227.09M3227.09 134H3239.41M3239.41 134H3251.73M3251.73 134H3264.06M3264.06 134H3276.38M3276.38 134H3288.71M3288.71 134H3301.03M3301.03 134H3313.35M3313.35 134H3325.68M3325.68 134H3338M3338 134H3350.33M3350.33 134H3362.65M3362.65 134H3374.97M3374.97 134H3387.3M3387.3 134H3399.62M3399.62 134H3411.95M3411.95 134H3424.27M3424.27 134H3436.59M3436.59 134H3448.92M3448.92 134H3461.24M3461.24 134H3473.57M3473.57 134H3485.89M3485.89 134H3498.21M3498.21 134H3510.54M3510.54 134H3522.86M3522.86 134H3535.19M3535.19 134H3547.51M3547.51 134H3559.83M3559.83 134H3572.16M3572.16 134H3584.48M3584.48 134H3596.81M3596.81 134H3609.13M3609.13 134H3616.39M3615.29 134V145.9M3749.76 134H3757.02M3750.86 134V145.9M3757.02 134H3769.34M417.21 778H429.54M429.54 778H441.86M441.86 778H454.19M454.19 778H466.51M466.51 778H478.83M478.83 778H491.16M491.16 778H503.48M503.48 778H515.81M515.81 778H528.13M528.13 778H540.45M540.45 778H552.78M552.78 778H565.1M565.1 778H577.43M577.43 778H589.75M589.75 778H602.07M602.07 778H614.4M614.4 778H626.72M626.72 778H639.05M639.05 778H651.37M651.37 778H663.69M663.69 778H676.02M676.02 778H688.34M688.34 778H700.67M700.67 778H712.99M712.99 778H725.31M725.31 778H737.64M737.64 778H749.96M749.96 778H762.29M762.29 778H774.61M774.61 778H786.93M786.93 778H799.26M799.26 778H811.58M811.58 778H823.91M823.91 778H836.23M836.23 778H848.55M848.55 778H860.88M860.88 778H873.2M873.2 778H885.53M885.53 778H897.85M897.85 778H910.17M910.17 778H922.5M922.5 778H934.82M934.82 778H947.15M947.15 778H959.47M959.47 778H971.79M971.79 778H984.12M984.12 778H996.44M996.44 778H1008.77M1008.77 778H1021.09M1021.09 778H1033.41M1033.41 778H1045.74M1045.74 778H1058.06M1058.06 778H1070.39M1070.39 778H1082.71M1082.71 778H1095.03M1095.03 778H1107.36M1107.36 778H1119.68M1119.68 778H1132.01M1132.01 778H1144.33M1144.33 778H1156.65M1156.65 778H1168.98M1168.98 778H1181.3M1181.3 778H1193.63M1193.63 778H1205.95M1205.95 778H1218.27M1218.27 778H1230.6M1230.6 778H1242.92M1242.92 778H1255.25M1255.25 778H1267.57M1267.57 778H1279.89M1279.89 778H1292.22M1292.22 778H1304.54M1304.54 778H1316.87M1316.87 778H1329.19M1329.19 778H1341.51M1341.51 778H1353.84M1353.84 778H1366.16M1366.16 778H1378.49M1378.49 778H1390.81M1390.81 778H1403.13M1403.13 778H1415.46M1415.46 778H1427.78M1427.78 778H1440.11M1440.11 778H1452.43M1452.43 778H1464.75M1464.75 778H1477.08M1477.08 778H1489.4M1489.4 778H1501.73M1501.73 778H1514.05M1514.05 778H1526.37M1526.37 778H1538.7M1538.7 778H1551.02M1551.02 778H1563.35M1563.35 778H1575.67M1575.67 778H1587.99M1587.99 778H1600.32M1600.32 778H1612.64M1612.64 778H1624.97M1624.97 778H1637.29M1637.29 778H1649.61M1649.61 778H1661.94M1661.94 778H1674.26M1674.26 778H1686.59M1686.59 778H1698.91M1698.91 778H1711.23M1711.23 778H1723.56M1723.56 778H1735.88M1735.88 778H1748.21M1748.21 778H1760.53M1760.53 778H1772.85M1772.85 778H1785.18M1785.18 778H1797.5M1797.5 778H1809.83M1809.83 778H1822.15M1822.15 778H1834.47M1834.47 778H1846.8M1846.8 778H1859.12M1859.12 778H1871.45M1871.45 778H1883.77M1883.77 778H1896.09M1896.09 778H1908.42M1908.42 778H1920.74M1920.74 778H1933.07M1933.07 778H1945.39M1945.39 778H1957.71M1957.71 778H1970.04M1970.04 778H1982.36M1982.36 778H1994.69M1994.69 778H2007.01M2007.01 778H2019.33M2019.33 778H2031.66M2031.66 778H2043.98M2043.98 778H2056.31M2056.31 778H2068.63M2068.63 778H2080.95M2080.95 778H2093.28M2093.28 778H2105.6M2105.6 778H2117.93M2117.93 778H2130.25M2130.25 778H2142.57M2142.57 778H2154.9M2154.9 778H2167.22M2167.22 778H2179.55M2179.55 778H2191.87M2191.87 778H2204.19M2204.19 778H2216.52M2216.52 778H2228.84M2228.84 778H2241.17M2241.17 778H2253.49M2253.49 778H2265.81M2265.81 778H2278.14M2278.14 778H2290.46M2290.46 778H2302.79M2302.79 778H2315.11M2315.11 778H2327.43M2327.43 778H2339.76M2339.76 778H2352.08M2352.08 778H2364.41M2364.41 778H2376.73M2376.73 778H2389.05M2389.05 778H2401.38M2401.38 778H2413.7M2413.7 778H2426.03M2426.03 778H2438.35M2438.35 778H2450.67M2450.67 778H2463M2463 778H2475.32M2475.32 778H2487.65M2487.65 778H2499.97M2499.97 778H2512.29M2512.29 778H2524.62M2524.62 778H2536.94M2536.94 778H2549.27M2549.27 778H2561.59M2561.59 778H2573.91M2573.91 778H2586.24M2586.24 778H2598.56M2598.56 778H2610.89M2610.89 778H2623.21M2623.21 778H2635.53M2635.53 778H2647.86M2647.86 778H2660.18M2660.18 778H2672.51M2672.51 778H2684.83M2684.83 778H2697.15M2697.15 778H2709.48M2709.48 778H2721.8M2721.8 778H2734.13M2734.13 778H2746.45M2746.45 778H2758.77M2758.77 778H2771.1M2771.1 778H2783.42M2783.42 778H2795.75M2795.75 778H2808.07M2808.07 778H2820.39M2820.39 778H2832.72M2832.72 778H2845.04M2845.04 778H2857.37M2857.37 778H2869.69M2869.69 778H2882.01M2882.01 778H2894.34M2894.34 778H2906.66M2906.66 778H2918.99M2918.99 778H2931.31M2931.31 778H2943.63M2943.63 778H2955.96M2955.96 778H2968.28M2968.28 778H2980.61M2980.61 778H2992.93M2992.93 778H3005.25M3005.25 778H3017.58M3017.58 778H3029.9M3029.9 778H3042.23M3042.23 778H3054.55M3054.55 778H3066.87M3066.87 778H3079.2M3079.2 778H3091.52M3091.52 778H3103.85M3103.85 778H3116.17M3116.17 778H3128.49M3128.49 778H3140.82M3140.82 778H3153.14M3153.14 778H3165.47M3165.47 778H3177.79M3177.79 778H3190.11M3190.11 778H3202.44M3202.44 778H3214.76M3214.76 778H3227.09M3227.09 778H3239.41M3239.41 778H3251.73M3251.73 778H3264.06M3264.06 778H3276.38M3276.38 778H3288.71M3288.71 778H3301.03M3301.03 778H3313.35M3313.35 778H3325.68M3325.68 778H3338M3338 778H3350.33M3350.33 778H3362.65M3362.65 778H3374.97M3374.97 778H3387.3M3387.3 778H3399.62M3399.62 778H3411.95M3411.95 778H3424.27M3424.27 778H3436.59M3436.59 778H3448.92M3448.92 778H3461.24M3461.24 778H3473.57M3473.57 778H3485.89M3485.89 778H3498.21M3498.21 778H3510.54M3510.54 778H3522.86M3522.86 778H3535.19M3535.19 778H3547.51M3547.51 778H3559.83M3559.83 778H3572.16M3572.16 778H3584.48M3584.48 778H3596.81M3596.81 778H3609.13M3609.13 778H3621.45M3621.45 778H3633.78M3633.78 778H3646.1M3646.1 778H3658.43M3658.43 778H3670.75M3670.75 778H3683.07M3683.07 778H3695.4M3695.4 778H3707.72M3707.72 778H3720.05M3720.05 778H3732.37M3732.37 778H3744.69M3744.69 778H3757.02M3757.02 778H3769.34M411.05 149.1V173.9M411.05 177.1V201.9M411.05 205.1V229.9M411.05 233.1V257.9M411.05 261.1V285.9M411.05 289.1V313.9M411.05 317.1V341.9M411.05 345.1V369.9M411.05 373.1V397.9M411.05 401.1V425.9M411.05 429.1V453.9M411.05 457.1V481.9M411.05 485.1V509.9M411.05 513.1V537.9M411.05 541.1V565.9M411.05 569.1V593.9M411.05 597.1V621.9M411.05 625.1V649.9M411.05 653.1V677.9M411.05 681.1V705.9M411.05 709.1V733.9M411.05 737.1V761.9M3775.5 149.1V173.9M3775.5 177.1V201.9M3775.5 205.1V229.9M3775.5 233.1V257.9M3775.5 261.1V285.9M3775.5 289.1V313.9M3775.5 317.1V341.9M3775.5 345.1V369.9M3775.5 373.1V397.9M3775.5 401.1V425.9M3775.5 429.1V453.9M3775.5 457.1V481.9M3775.5 485.1V509.9M3775.5 513.1V537.9M3775.5 541.1V565.9M3775.5 569.1V593.9M3775.5 597.1V621.9M3775.5 625.1V649.9M3775.5 653.1V677.9M3775.5 681.1V705.9M3775.5 709.1V733.9M3775.5 737.1V761.9"/>
<path fill="none" stroke="#373737" stroke-width="2.2" d="M3522.86 386H3522.2A5.5 5.5 0 0 0 3516.7 391.5V397.9M3757.02 386H3757.68A5.5 5.5 0 0 1 3763.18 391.5V397.9M3516.7 513.1V520.5A5.5 5.5 0 0 0 3522.2 526H3522.86M3763.18 513.1V520.5A5.5 5.5 0 0 1 3757.68 526H3757.02M3522.86 386H3535.19M3535.19 386H3542.45M3541.35 386V397.9M3638.84 386H3646.1M3639.94 386V397.9M3646.1 386H3653.36M3652.26 386V397.9M3749.76 386H3757.02M3750.86 386V397.9M3522.86 526H3535.19M3535.19 526H3547.51M3547.51 526H3559.83M3559.83 526H3572.16M3572.16 526H3584.48M3584.48 526H3596.81M3596.81 526H3609.13M3609.13 526H3621.45M3621.45 526H3633.78M3633.78 526H3646.1M3646.1 526H3658.43M3658.43 526H3670.75M3670.75 526H3683.07M3683.07 526H3695.4M3695.4 526H3707.72M3707.72 526H3720.05M3720.05 526H3732.37M3732.37 526H3744.69M3744.69 526H3757.02M3516.7 401.1V425.9M3516.7 429.1V453.9M3516.7 457.1V481.9M3516.7 485.1V509.9M3763.18 401.1V425.9M3763.18 429.1V453.9M3763.18 457.1V481.9M3763.18 485.1V509.9M1150.49 821.1V845.9M1150.49 834H1156.65M1150.49 849.1V873.9M1144.33 862H1150.49M1150.49 877.1V901.9M1150.49 905.1V929.9M1150.49 933.1V957.9M1150.49 961.1V985.9M1150.49 974H1156.65M1150.49 989.1V1013.9M1150.49 1017.1V1041.9M1144.33 1030H1150.49M1150.49 1045.1V1069.9M1150.49 1073.1V1097.9M1150.49 1086H1156.65M1150.49 1101.1V1125.9M1150.49 1129.1V1153.9M1150.49 1157.1V1181.9M1150.49 1185.1V1209.9M1144.33 1198H1150.49M1150.49 1213.1V1237.9M1150.49 1241.1V1265.9M1150.49 1269.1V1293.9M1150.49 1297.1V1321.9M1150.49 1325.1V1349.9M1150.49 1353.1V1377.9M1144.33 1366H1150.49M1150.49 1381.1V1405.9M1150.49 1409.1V1433.9M1150.49 1437.1V1461.9M1150.49 1465.1V1489.9M1150.49 1493.1V1517.9M417.21 862H429.54M491.16 862H503.48M503.48 862H515.81M515.81 862H528.13M528.13 862H540.45M540.45 862H552.78M552.78 862H565.1M565.1 862H577.43M577.43 862H589.75M589.75 862H602.07M602.07 862H614.4M614.4 862H626.72M626.72 862H639.05M639.05 862H651.37M651.37 862H663.69M663.69 862H676.02M676.02 862H688.34M688.34 862H700.67M700.67 862H712.99M712.99 862H725.31M725.31 862H737.64M737.64 862H749.96M749.96 862H762.29M762.29 862H774.61M774.61 862H786.93M786.93 862H799.26M799.26 862H811.58M811.58 862H823.91M823.91 862H836.23M836.23 862H848.55M848.55 862H860.88M860.88 862H873.2M873.2 862H885.53M885.53 862H897.85M897.85 862H910.17M910.17 862H922.5M922.5 862H934.82M934.82 862H947.15M947.15 862H959.47M959.47 862H971.79M971.79 862H984.12M984.12 862H996.44M996.44 862H1008.77M1008.77 862H1021.09M1021.09 862H1033.41M1082.71 862H1095.03M1132.01 862H1144.33M417.21 1030H429.54M552.78 1030H565.1M565.1 1030H577.43M577.43 1030H589.75M589.75 1030H602.07M602.07 1030H614.4M614.4 1030H626.72M626.72 1030H639.05M639.05 1030H651.37M651.37 1030H663.69M663.69 1030H676.02M676.02 1030H688.34M688.34 1030H700.67M700.67 1030H712.99M712.99 1030H725.31M725.31 1030H737.64M737.64 1030H749.96M749.96 1030H762.29M762.29 1030H774.61M774.61 1030H786.93M786.93 1030H799.26M799.26 1030H811.58M811.58 1030H823.91M823.91 1030H836.23M836.23 1030H848.55M848.55 1030H860.88M860.88 1030H873.2M873.2 1030H885.53M885.53 1030H897.85M897.85 1030H910.17M910.17 1030H922.5M922.5 1030H934.82M934.82 1030H947.15M947.15 1030H959.47M959.47 1030H971.79M971.79 1030H984.12M984.12 1030H996.44M996.44 1030H1008.77M1008.77 1030H1021.09M1021.09 1030H1033.41M1082.71 1030H1095.03M1132.01 1030H1144.33M417.21 1198H429.54M515.81 1198H528.13M528.13 1198H540.45M540.45 1198H552.78M552.78 1198H565.1M565.1 1198H577.43M577.43 1198H589.75M589.75 1198H602.07M602.07 1198H614.4M614.4 1198H626.72M626.72 1198H639.05M639.05 1198H651.37M651.37 1198H663.69M663.69 1198H676.02M676.02 1198H688.34M688.34 1198H700.67M700.67 1198H712.99M712.99 1198H725.31M725.31 1198H737.64M737.64 1198H749.96M749.96 1198H762.29M762.29 1198H774.61M774.61 1198H786.93M786.93 1198H799.26M799.26 1198H811.58M811.58 1198H823.91M823.91 1198H836.23M836.23 1198H848.55M848.55 1198H860.88M860.88 1198H873.2M873.2 1198H885.53M885.53 1198H897.85M897.85 1198H910.17M910.17 1198H922.5M922.5 1198H934.82M934.82 1198H947.15M947.15 1198H959.47M959.47 1198H971.79M971.79 1198H984.12M984.12 1198H996.44M996.44 1198H1008.77M1008.77 1198H1021.09M1021.09 1198H1033.41M1033.41 1198H1045.74M1082.71 1198H1095.03M1132.01 1198H1144.33M417.21 1366H429.54M491.16 1366H503.48M503.48 1366H515.81M515.81 1366H528.13M528.13 1366H540.45M540.45 1366H552.78M552.78 1366H565.1M565.1 1366H577.43M577.43 1366H589.75M589.75 1366H602.07M602.07 1366H614.4M614.4 1366H626.72M626.72 1366H639.05M639.05 1366H651.37M651.37 1366H663.69M663.69 1366H676.02M676.02 1366H688.34M688.34 1366H700.67M700.67 1366H712.99M712.99 1366H725.31M725.31 1366H737.64M737.64 1366H749.96M749.96 1366H762.29M762.29 1366H774.61M774.61 1366H786.93M786.93 1366H799.26M799.26 1366H811.58M811.58 1366H823.91M823.91 1366H836.23M836.23 1366H848.55M848.55 1366H860.88M860.88 1366H873.2M873.2 1366H885.53M885.53 1366H897.85M897.85 1366H910.17M910.17 1366H922.5M922.5 1366H934.82M934.82 1366H947.15M947.15 1366H959.47M959.47 1366H971.79M971.79 1366H984.12M984.12 1366H996.44M996.44 1366H1008.77M1008.77 1366H1021.09M1021.09 1366H1033.41M1033.41 1366H1045.74M1082.71 1366H1095.03M1132.01 1366H1144.33M1156.65 834H1168.98M1218.27 834H1230.6M1230.6 834H1242.92M1242.92 834H1255.25M1255.25 834H1267.57M1267.57 834H1279.89M1279.89 834H1292.22M1292.22 834H1304.54M1304.54 834H1316.87M1316.87 834H1329.19M1329.19 834H1341.51M1341.51 834H1353.84M1353.84 834H1366.16M1366.16 834H1378.49M1378.49 834H1390.81M1390.81 834H1403.13M1403.13 834H1415.46M1415.46 834H1427.78M1427.78 834H1440.11M1440.11 834H1452.43M1452.43 834H1464.75M1464.75 834H1477.08M1477.08 834H1489.4M1551.02 834H1563.35M1563.35 834H1575.67M1575.67 834H1587.99M1587.99 834H1600.32M1600.32 834H1612.64M1612.64 834H1624.97M1624.97 834H1637.29M1637.29 834H1649.61M1649.61 834H1661.94M1661.94 834H1674.26M1674.26 834H1686.59M1686.59 834H1698.91M1698.91 834H1711.23M1711.23 834H1723.56M1723.56 834H1735.88M1735.88 834H1748.21M1748.21 834H1760.53M1760.53 834H1772.85M1772.85 834H1785.18M1785.18 834H1797.5M1896.09 834H1908.42M1156.65 974H1168.98M1218.27 974H1230.6M1230.6 974H1242.92M1242.92 974H1255.25M1255.25 974H1267.57M1267.57 974H1279.89M1279.89 974H1292.22M1292.22 974H1304.54M1304.54 974H1316.87M1316.87 974H1329.19M1329.19 974H1341.51M1341.51 974H1353.84M1353.84 974H1366.16M1366.16 974H1378.49M1378.49 974H1390.81M1390.81 974H1403.13M1403.13 974H1415.46M1415.46 974H1427.78M1427.78 974H1440.11M1440.11 974H1452.43M1452.43 974H1464.75M1464.75 974H1477.08M1477.08 974H1489.4M1489.4 974H1501.73M1501.73 974H1514.05M1514.05 974H1526.37M1526.37 974H1538.7M1538.7 974H1551.02M1551.02 974H1563.35M1563.35 974H1575.67M1575.67 974H1587.99M1587.99 974H1600.32M1600.32 974H1612.64M1612.64 974H1624.97M1624.97 974H1637.29M1637.29 974H1649.61M1649.61 974H1661.94M1661.94 974H1674.26M1674.26 974H1686.59M1686.59 974H1698.91M1698.91 974H1711.23M1711.23 974H1723.56M1723.56 974H1735.88M1735.88 974H1748.21M1748.21 974H1760.53M1760.53 974H1772.85M1772.85 974H1785.18M1785.18 974H1797.5M1896.09 974H1908.42M1156.65 1086H1168.98M1168.98 1086H1181.3M1181.3 1086H1193.63M1193.63 1086H1205.95M1205.95 1086H1218.27M1218.27 1086H1230.6M1230.6 1086H1242.92M1242.92 1086H1255.25M1255.25 1086H1267.57M1267.57 1086H1279.89M1279.89 1086H1292.22M1292.22 1086H1304.54M1304.54 1086H1316.87M1316.87 1086H1329.19M1329.19 1086H1341.51M1341.51 1086H1353.84M1353.84 1086H1366.16M1366.16 1086H1378.49M1378.49 1086H1390.81M1390.81 1086H1403.13M1403.13 1086H1415.46M1415.46 1086H1427.78M1427.78 1086H1440.11M1440.11 1086H1452.43M1452.43 1086H1464.75M1464.75 1086H1477.08M1477.08 1086H1489.4M1489.4 1086H1501.73M1501.73 1086H1514.05M1514.05 1086H1526.37M1526.37 1086H1538.7M1538.7 1086H1551.02M1551.02 1086H1563.35M1563.35 1086H1575.67M1575.67 1086H1587.99M1587.99 1086H1600.32M1600.32 1086H1612.64M1612.64 1086H1624.97M1624.97 1086H1637.29M1637.29 1086H1649.61M1649.61 1086H1661.94M1661.94 1086H1674.26M1674.26 1086H1686.59M1686.59 1086H1698.91M1698.91 1086H1711.23M1711.23 1086H1723.56M1723.56 1086H1735.88M1735.88 1086H1748.21M1748.21 1086H1760.53M1760.53 1086H1772.85M1772.85 1086H1785.18M1785.18 1086H1797.5M1797.5 1086H1809.83M1809.83 1086H1822.15M1822.15 1086H1834.47M1834.47 1086H1846.8M1846.8 1086H1859.12M1859.12 1086H1871.45M1871.45 1086H1883.77M1883.77 1086H1896.09M1896.09 1086H1908.42M1587.99 1730H1587.33A5.5 5.5 0 0 0 1581.83 1735.5V1741.9M1896.09 1730H1896.76A5.5 5.5 0 0 1 1902.26 1735.5V1741.9M1581.83 1941.1V1948.5A5.5 5.5 0 0 0 1587.33 1954H1587.99M1902.26 1941.1V1948.5A5.5 5.5 0 0 1 1896.76 1954H1896.09M1587.99 1730H1600.32M1600.32 1730H1607.58M1606.48 1730V1741.9M1716.3 1730H1723.56M1717.4 1730V1741.9M1723.56 1730H1735.88M1735.88 1730H1748.21M1748.21 1730H1760.53M1760.53 1730H1772.85M1772.85 1730H1785.18M1785.18 1730H1797.5M1797.5 1730H1809.83M1809.83 1730H1822.15M1822.15 1730H1834.47M1834.47 1730H1846.8M1846.8 1730H1859.12M1859.12 1730H1871.45M1871.45 1730H1883.77M1883.77 1730H1896.09M1587.99 1954H1600.32M1606.48 1941.1V1954M1600.32 1954H1607.58M1692.75 1941.1V1954M1691.65 1954H1698.91M1698.91 1954H1711.23M1711.23 1954H1723.56M1723.56 1954H1735.88M1735.88 1954H1748.21M1748.21 1954H1760.53M1760.53 1954H1772.85M1772.85 1954H1785.18M1785.18 1954H1797.5M1797.5 1954H1809.83M1809.83 1954H1822.15M1822.15 1954H1834.47M1834.47 1954H1846.8M1846.8 1954H1859.12M1859.12 1954H1871.45M1871.45 1954H1883.77M1883.77 1954H1896.09M1581.83 1745.1V1769.9M1581.83 1773.1V1797.9M1581.83 1801.1V1825.9M1581.83 1829.1V1853.9M1581.83 1857.1V1881.9M1581.83 1885.1V1909.9M1581.83 1913.1V1937.9M1902.26 1745.1V1769.9M1902.26 1773.1V1797.9M1902.26 1801.1V1825.9M1902.26 1829.1V1853.9M1902.26 1857.1V1881.9M1902.26 1885.1V1909.9M1902.26 1913.1V1937.9M411.05 862H417.21M411.05 1030H417.21M411.05 1198H417.21M411.05 1366H417.21M1908.42 834H1914.58M1908.42 974H1914.58M1908.42 1086H1914.58"/>
<path fill="none" stroke="#7a7a55" stroke-width="2.2" d="M417.21 806H416.55A5.5 5.5 0 0 0 411.05 811.5V817.9M1908.42 806H1909.08A5.5 5.5 0 0 1 1914.58 811.5V817.9M411.05 1521.1V1528.5A5.5 5.5 0 0 0 416.55 1534H417.21M1914.58 1521.1V1528.5A5.5 5.5 0 0 1 1909.08 1534H1908.42M417.21 806H429.54M429.54 806H436.8M435.7 806V817.9M496.22 806H503.48M497.32 806V817.9M503.48 806H515.81M515.81 806H528.13M528.13 806H540.45M540.45 806H552.78M552.78 806H565.1M565.1 806H577.43M577.43 806H589.75M589.75 806H602.07M602.07 806H614.4M614.4 806H626.72M626.72 806H639.05M639.05 806H651.37M651.37 806H663.69M663.69 806H676.02M676.02 806H688.34M688.34 806H700.67M700.67 806H712.99M712.99 806H725.31M725.31 806H737.64M737.64 806H749.96M749.96 806H762.29M762.29 806H774.61M774.61 806H786.93M786.93 806H799.26M799.26 806H811.58M811.58 806H823.91M823.91 806H836.23M836.23 806H848.55M848.55 806H860.88M860.88 806H873.2M873.2 806H885.53M885.53 806H897.85M897.85 806H910.17M910.17 806H922.5M922.5 806H934.82M934.82 806H947.15M947.15 806H959.47M959.47 806H971.79M971.79 806H984.12M984.12 806H996.44M996.44 806H1008.77M1008.77 806H1021.09M1021.09 806H1033.41M1033.41 806H1045.74M1045.74 806H1058.06M1058.06 806H1070.39M1070.39 806H1082.71M1082.71 806H1095.03M1095.03 806H1107.36M1107.36 806H1119.68M1119.68 806H1132.01M1132.01 806H1144.33M1144.33 806H1156.65M1150.49 806V817.9M1156.65 806H1168.98M1168.98 806H1176.24M1175.14 806V817.9M1247.98 806H1255.25M1249.08 806V817.9M1255.25 806H1267.57M1267.57 806H1279.89M1279.89 806H1292.22M1292.22 806H1304.54M1304.54 806H1316.87M1316.87 806H1329.19M1329.19 806H1341.51M1341.51 806H1353.84M1353.84 806H1366.16M1366.16 806H1378.49M1378.49 806H1390.81M1390.81 806H1403.13M1403.13 806H1415.46M1415.46 806H1427.78M1427.78 806H1440.11M1440.11 806H1452.43M1452.43 806H1464.75M1464.75 806H1477.08M1477.08 806H1489.4M1489.4 806H1501.73M1501.73 806H1514.05M1514.05 806H1526.37M1526.37 806H1538.7M1538.7 806H1551.02M1551.02 806H1563.35M1563.35 806H1575.67M1575.67 806H1587.99M1587.99 806H1600.32M1600.32 806H1612.64M1612.64 806H1624.97M1624.97 806H1637.29M1637.29 806H1649.61M1649.61 806H1661.94M1661.94 806H1674.26M1674.26 806H1686.59M1686.59 806H1698.91M1698.91 806H1711.23M1711.23 806H1723.56M1723.56 806H1735.88M1735.88 806H1748.21M1748.21 806H1760.53M1760.53 806H1772.85M1772.85 806H1785.18M1785.18 806H1797.5M1797.5 806H1809.83M1809.83 806H1822.15M1822.15 806H1834.47M1834.47 806H1846.8M1846.8 806H1854.06M1852.96 806V817.9M1888.83 806H1896.09M1889.93 806V817.9M1896.09 806H1908.42M417.21 1534H429.54M429.54 1534H441.86M441.86 1534H454.19M454.19 1534H466.51M466.51 1534H478.83M478.83 1534H491.16M491.16 1534H503.48M503.48 1534H515.81M515.81 1534H528.13M528.13 1534H540.45M540.45 1534H552.78M552.78 1534H565.1M565.1 1534H577.43M577.43 1534H589.75M589.75 1534H602.07M602.07 1534H614.4M614.4 1534H626.72M626.72 1534H639.05M639.05 1534H651.37M651.37 1534H663.69M663.69 1534H676.02M676.02 1534H688.34M688.34 1534H700.67M700.67 1534H712.99M712.99 1534H725.31M725.31 1534H737.64M737.64 1534H749.96M749.96 1534H762.29M762.29 1534H774.61M774.61 1534H786.93M786.93 1534H799.26M799.26 1534H811.58M811.58 1534H823.91M823.91 1534H836.23M836.23 1534H848.55M848.55 1534H860.88M860.88 1534H873.2M873.2 1534H885.53M885.53 1534H897.85M897.85 1534H910.17M910.17 1534H922.5M922.5 1534H934.82M934.82 1534H947.15M947.15 1534H959.47M959.47 1534H971.79M971.79 1534H984.12M984.12 1534H996.44M996.44 1534H1008.77M1008.77 1534H1021.09M1021.09 1534H1033.41M1033.41 1534H1045.74M1045.74 1534H1058.06M1058.06 1534H1070.39M1070.39 1534H1082.71M1082.71 1534H1095.03M1095.03 1534H1107.36M1107.36 1534H1119.68M1119.68 1534H1132.01M1132.01 1534H1144.33M1144.33 1534H1156.65M1150.49 1521.1V1534M1156.65 1534H1168.98M1168.98 1534H1181.3M1181.3 1534H1193.63M1193.63 1534H1205.95M1205.95 1534H1218.27M1218.27 1534H1230.6M1230.6 1534H1242.92M1242.92 1534H1255.25M1255.25 1534H1267.57M1267.57 1534H1279.89M1279.89 1534H1292.22M1292.22 1534H1304.54M1304.54 1534H1316.87M1316.87 1534H1329.19M1329.19 1534H1341.51M1341.51 1534H1353.84M1353.84 1534H1366.16M1366.16 1534H1378.49M1378.49 1534H1390.81M1390.81 1534H1403.13M1403.13 1534H1415.46M1415.46 1534H1427.78M1427.78 1534H1440.11M1440.11 1534H1452.43M1452.43 1534H1464.75M1464.75 1534H1477.08M1477.08 1534H1489.4M1489.4 1534H1501.73M1501.73 1534H1514.05M1514.05 1534H1526.37M1526.37 1534H1538.7M1538.7 1534H1551.02M1551.02 1534H1563.35M1563.35 1534H1575.67M1575.67 1534H1587.99M1587.99 1534H1600.32M1600.32 1534H1612.64M1612.64 1534H1624.97M1624.97 1534H1637.29M1637.29 1534H1649.61M1649.61 1534H1661.94M1661.94 1534H1674.26M1674.26 1534H1686.59M1686.59 1534H1698.91M1698.91 1534H1711.23M1711.23 1534H1723.56M1723.56 1534H1735.88M1735.88 1534H1748.21M1748.21 1534H1760.53M1760.53 1534H1772.85M1772.85 1534H1785.18M1785.18 1534H1797.5M1797.5 1534H1809.83M1809.83 1534H1822.15M1822.15 1534H1834.47M1834.47 1534H1846.8M1846.8 1534H1859.12M1859.12 1534H1871.45M1871.45 1534H1883.77M1883.77 1534H1896.09M1896.09 1534H1908.42M411.05 821.1V845.9M411.05 849.1V873.9M411.05 877.1V901.9M411.05 905.1V929.9M411.05 933.1V957.9M411.05 961.1V985.9M411.05 989.1V1013.9M411.05 1017.1V1041.9M411.05 1045.1V1069.9M411.05 1073.1V1097.9M411.05 1101.1V1125.9M411.05 1129.1V1153.9M411.05 1157.1V1181.9M411.05 1185.1V1209.9M411.05 1213.1V1237.9M411.05 1241.1V1265.9M411.05 1269.1V1293.9M411.05 1297.1V1321.9M411.05 1325.1V1349.9M411.05 1353.1V1377.9M411.05 1381.1V1405.9M411.05 1409.1V1433.9M411.05 1437.1V1461.9M411.05 1465.1V1489.9M411.05 1493.1V1517.9M1914.58 821.1V845.9M1914.58 849.1V873.9M1914.58 877.1V901.9M1914.58 905.1V929.9M1914.58 933.1V957.9M1914.58 961.1V985.9M1914.58 989.1V1013.9M1914.58 1017.1V1041.9M1914.58 1045.1V1069.9M1914.58 1073.1V1097.9M1914.58 1101.1V1125.9M1914.58 1129.1V1153.9M1914.58 1157.1V1181.9M1914.58 1185.1V1209.9M1914.58 1213.1V1237.9M1914.58 1241.1V1265.9M1914.58 1269.1V1293.9M1914.58 1297.1V1321.9M1914.58 1325.1V1349.9M1914.58 1353.1V1377.9M1914.58 1381.1V1405.9M1914.58 1409.1V1433.9M1914.58 1437.1V1461.9M1914.58 1465.1V1489.9M1914.58 1493.1V1517.9"/>
<path fill="none" stroke="#68639f" stroke-width="2.2" d="M417.21 1562H416.55A5.5 5.5 0 0 0 411.05 1567.5V1573.9M1908.42 1562H1909.08A5.5 5.5 0 0 1 1914.58 1567.5V1573.9M411.05 2109.1V2116.5A5.5 5.5 0 0 0 416.55 2122H417.21M1914.58 2109.1V2116.5A5.5 5.5 0 0 1 1909.08 2122H1908.42M417.21 1562H429.54M429.54 1562H436.8M435.7 1562V1573.9M496.22 1562H503.48M497.32 1562V1573.9M503.48 1562H510.74M509.64 1562V1573.9M693.4 1562H700.67M694.5 1562V1573.9M700.67 1562H712.99M712.99 1562H725.31M725.31 1562H737.64M737.64 1562H749.96M749.96 1562H762.29M762.29 1562H774.61M774.61 1562H786.93M786.93 1562H799.26M799.26 1562H811.58M811.58 1562H823.91M823.91 1562H836.23M836.23 1562H848.55M848.55 1562H860.88M860.88 1562H873.2M873.2 1562H885.53M885.53 1562H897.85M897.85 1562H910.17M910.17 1562H922.5M922.5 1562H934.82M934.82 1562H947.15M947.15 1562H959.47M959.47 1562H971.79M971.79 1562H984.12M984.12 1562H996.44M996.44 1562H1008.77M1008.77 1562H1021.09M1021.09 1562H1033.41M1033.41 1562H1045.74M1045.74 1562H1058.06M1058.06 1562H1070.39M1070.39 1562H1082.71M1082.71 1562H1095.03M1095.03 1562H1107.36M1107.36 1562H1119.68M1119.68 1562H1132.01M1132.01 1562H1144.33M1144.33 1562H1156.65M1156.65 1562H1168.98M1168.98 1562H1181.3M1181.3 1562H1193.63M1193.63 1562H1205.95M1205.95 1562H1218.27M1218.27 1562H1230.6M1230.6 1562H1242.92M1242.92 1562H1255.25M1255.25 1562H1267.57M1267.57 1562H1279.89M1279.89 1562H1292.22M1292.22 1562H1304.54M1304.54 1562H1316.87M1316.87 1562H1329.19M1329.19 1562H1341.51M1341.51 1562H1353.84M1353.84 1562H1366.16M1366.16 1562H1378.49M1378.49 1562H1390.81M1390.81 1562H1403.13M1403.13 1562H1415.46M1415.46 1562H1427.78M1427.78 1562H1440.11M1440.11 1562H1452.43M1452.43 1562H1464.75M1464.75 1562H1477.08M1477.08 1562H1489.4M1489.4 1562H1501.73M1501.73 1562H1514.05M1514.05 1562H1526.37M1526.37 1562H1538.7M1538.7 1562H1545.96M1544.86 1562V1573.9M1605.38 1562H1612.64M1606.48 1562V1573.9M1612.64 1562H1619.9M1618.8 1562V1573.9M1679.32 1562H1686.59M1680.42 1562V1573.9M1686.59 1562H1693.85M1692.75 1562V1573.9M1753.27 1562H1760.53M1754.37 1562V1573.9M1760.53 1562H1767.79M1766.69 1562V1573.9M1901.16 1562H1908.42M1902.26 1562V1573.9M417.21 2122H429.54M429.54 2122H441.86M441.86 2122H454.19M454.19 2122H466.51M466.51 2122H478.83M478.83 2122H491.16M491.16 2122H503.48M503.48 2122H515.81M515.81 2122H528.13M528.13 2122H540.45M540.45 2122H552.78M552.78 2122H565.1M565.1 2122H577.43M577.43 2122H589.75M589.75 2122H602.07M602.07 2122H614.4M614.4 2122H626.72M626.72 2122H639.05M639.05 2122H651.37M651.37 2122H663.69M663.69 2122H676.02M676.02 2122H688.34M688.34 2122H700.67M700.67 2122H712.99M712.99 2122H725.31M725.31 2122H737.64M737.64 2122H749.96M749.96 2122H762.29M762.29 2122H774.61M774.61 2122H786.93M786.93 2122H799.26M799.26 2122H811.58M811.58 2122H823.91M823.91 2122H836.23M836.23 2122H848.55M848.55 2122H860.88M860.88 2122H873.2M873.2 2122H885.53M885.53 2122H897.85M897.85 2122H910.17M910.17 2122H922.5M922.5 2122H934.82M934.82 2122H947.15M947.15 2122H959.47M959.47 2122H971.79M971.79 2122H984.12M984.12 2122H996.44M996.44 2122H1008.77M1008.77 2122H1021.09M1021.09 2122H1033.41M1033.41 2122H1045.74M1045.74 2122H1058.06M1058.06 2122H1070.39M1070.39 2122H1082.71M1082.71 2122H1095.03M1095.03 2122H1107.36M1107.36 2122H1119.68M1119.68 2122H1132.01M1132.01 2122H1144.33M1144.33 2122H1156.65M1156.65 2122H1168.98M1168.98 2122H1181.3M1181.3 2122H1193.63M1193.63 2122H1205.95M1205.95 2122H1218.27M1218.27 2122H1230.6M1230.6 2122H1242.92M1242.92 2122H1255.25M1255.25 2122H1267.57M1267.57 2122H1279.89M1279.89 2122H1292.22M1292.22 2122H1304.54M1304.54 2122H1316.87M1316.87 2122H1329.19M1329.19 2122H1341.51M1341.51 2122H1353.84M1353.84 2122H1366.16M1366.16 2122H1378.49M1378.49 2122H1390.81M1390.81 2122H1403.13M1403.13 2122H1415.46M1415.46 2122H1427.78M1427.78 2122H1440.11M1440.11 2122H1452.43M1452.43 2122H1464.75M1464.75 2122H1477.08M1477.08 2122H1489.4M1489.4 2122H1501.73M1501.73 2122H1514.05M1514.05 2122H1526.37M1526.37 2122H1538.7M1538.7 2122H1551.02M1551.02 2122H1563.35M1563.35 2122H1575.67M1575.67 2122H1587.99M1587.99 2122H1600.32M1600.32 2122H1612.64M1612.64 2122H1624.97M1624.97 2122H1637.29M1637.29 2122H1649.61M1649.61 2122H1661.94M1661.94 2122H1674.26M1674.26 2122H1686.59M1686.59 2122H1698.91M1698.91 2122H1711.23M1711.23 2122H1723.56M1723.56 2122H1735.88M1735.88 2122H1748.21M1748.21 2122H1760.53M1760.53 2122H1772.85M1772.85 2122H1785.18M1785.18 2122H1797.5M1797.5 2122H1809.83M1809.83 2122H1822.15M1822.15 2122H1834.47M1834.47 2122H1846.8M1846.8 2122H1859.12M1859.12 2122H1871.45M1871.45 2122H1883.77M1883.77 2122H1896.09M1896.09 2122H1908.42M411.05 1577.1V1601.9M411.05 1605.1V1629.9M411.05 1633.1V1657.9M411.05 1661.1V1685.9M411.05 1689.1V1713.9M411.05 1717.1V1741.9M411.05 1745.1V1769.9M411.05 1773.1V1797.9M411.05 1801.1V1825.9M411.05 1829.1V1853.9M411.05 1857.1V1881.9M411.05 1885.1V1909.9M411.05 1913.1V1937.9M411.05 1941.1V1965.9M411.05 1969.1V1993.9M411.05 1997.1V2021.9M411.05 2025.1V2049.9M411.05 2053.1V2077.9M411.05 2081.1V2105.9M1914.58 1577.1V1601.9M1914.58 1605.1V1629.9M1914.58 1633.1V1657.9M1914.58 1661.1V1685.9M1914.58 1689.1V1713.9M1914.58 1717.1V1741.9M1914.58 1745.1V1769.9M1914.58 1773.1V1797.9M1914.58 1801.1V1825.9M1914.58 1829.1V1853.9M1914.58 1857.1V1881.9M1914.58 1885.1V1909.9M1914.58 1913.1V1937.9M1914.58 1941.1V1965.9M1914.58 1969.1V1993.9M1914.58 1997.1V2021.9M1914.58 2025.1V2049.9M1914.58 2053.1V2077.9M1914.58 2081.1V2105.9"/>
<path fill="none" stroke="#915d5d" stroke-width="2.2" d="M1933.07 806H1932.4A5.5 5.5 0 0 0 1926.9 811.5V817.9M3769.34 806H3770A5.5 5.5 0 0 1 3775.5 811.5V817.9M1926.9 2109.1V2116.5A5.5 5.5 0 0 0 1932.4 2122H1933.07M3775.5 2109.1V2116.5A5.5 5.5 0 0 1 3770 2122H3769.34M1933.07 806H1945.39M1945.39 806H1952.65M1951.55 806V817.9M2024.4 806H2031.66M2025.5 806V817.9M2031.66 806H2038.92M2037.82 806V817.9M2122.99 806H2130.25M2124.09 806V817.9M2130.25 806H2142.57M2142.57 806H2154.9M2154.9 806H2167.22M2167.22 806H2179.55M2179.55 806H2191.87M2191.87 806H2204.19M2204.19 806H2216.52M2216.52 806H2228.84M2228.84 806H2241.17M2241.17 806H2253.49M2253.49 806H2265.81M2265.81 806H2278.14M2278.14 806H2290.46M2290.46 806H2302.79M2302.79 806H2315.11M2315.11 806H2327.43M2327.43 806H2339.76M2339.76 806H2352.08M2352.08 806H2364.41M2364.41 806H2376.73M2376.73 806H2389.05M2389.05 806H2401.38M2401.38 806H2413.7M2413.7 806H2426.03M2426.03 806H2438.35M2438.35 806H2450.67M2450.67 806H2463M2463 806H2475.32M2475.32 806H2487.65M2487.65 806H2499.97M2499.97 806H2512.29M2512.29 806H2524.62M2524.62 806H2536.94M2536.94 806H2549.27M2549.27 806H2561.59M2561.59 806H2573.91M2573.91 806H2586.24M2586.24 806H2598.56M2598.56 806H2610.89M2610.89 806H2623.21M2623.21 806H2635.53M2635.53 806H2647.86M2647.86 806H2660.18M2660.18 806H2672.51M2672.51 806H2684.83M2684.83 806H2697.15M2697.15 806H2709.48M2709.48 806H2721.8M2721.8 806H2734.13M2734.13 806H2746.45M2746.45 806H2758.77M2758.77 806H2771.1M2771.1 806H2783.42M2783.42 806H2795.75M2795.75 806H2808.07M2808.07 806H2820.39M2820.39 806H2832.72M2832.72 806H2845.04M2845.04 806H2857.37M2857.37 806H2869.69M2869.69 806H2882.01M2882.01 806H2894.34M2894.34 806H2906.66M2906.66 806H2918.99M2918.99 806H2931.31M2931.31 806H2943.63M2943.63 806H2955.96M2955.96 806H2968.28M2968.28 806H2980.61M2980.61 806H2992.93M2992.93 806H3005.25M3005.25 806H3017.58M3017.58 806H3029.9M3029.9 806H3042.23M3042.23 806H3054.55M3054.55 806H3066.87M3066.87 806H3079.2M3079.2 806H3091.52M3091.52 806H3103.85M3103.85 806H3116.17M3116.17 806H3128.49M3128.49 806H3140.82M3140.82 806H3153.14M3153.14 806H3165.47M3165.47 806H3177.79M3177.79 806H3190.11M3190.11 806H3202.44M3202.44 806H3214.76M3214.76 806H3227.09M3227.09 806H3239.41M3239.41 806H3251.73M3251.73 806H3264.06M3264.06 806H3276.38M3276.38 806H3288.71M3288.71 806H3301.03M3301.03 806H3313.35M3313.35 806H3325.68M3325.68 806H3338M3338 806H3345.26M3344.16 806V817.9M3453.98 806H3461.24M3455.08 806V817.9M3461.24 806H3468.5M3467.4 806V817.9M3564.9 806H3572.16M3566 806V817.9M3572.16 806H3579.42M3578.32 806V817.9M3638.84 806H3646.1M3639.94 806V817.9M3646.1 806H3653.36M3652.26 806V817.9M3749.76 806H3757.02M3750.86 806V817.9M3757.02 806H3769.34M1939.23 2109.1V2122M1933.07 2122H1940.33M2074.79 2109.1V2122M2073.69 2122H2080.95M2087.12 2109.1V2122M2080.95 2122H2088.22M2173.38 2109.1V2122M2172.28 2122H2179.55M2185.71 2109.1V2122M2179.55 2122H2186.81M2308.95 2109.1V2122M2307.85 2122H2315.11M2321.27 2109.1V2122M2315.11 2122H2322.37M2382.89 2109.1V2122M2381.79 2122H2389.05M2395.22 2109.1V2122M2389.05 2122H2396.32M2493.81 2109.1V2122M2492.71 2122H2499.97M2499.97 2122H2512.29M2512.29 2122H2524.62M2524.62 2122H2536.94M2536.94 2122H2549.27M2549.27 2122H2561.59M2561.59 2122H2573.91M2573.91 2122H2586.24M2586.24 2122H2598.56M2598.56 2122H2610.89M2610.89 2122H2623.21M2623.21 2122H2635.53M2635.53 2122H2647.86M2647.86 2122H2660.18M2660.18 2122H2672.51M2672.51 2122H2684.83M2684.83 2122H2697.15M2697.15 2122H2709.48M2709.48 2122H2721.8M2721.8 2122H2734.13M2734.13 2122H2746.45M2746.45 2122H2758.77M2758.77 2122H2771.1M2771.1 2122H2783.42M2783.42 2122H2795.75M2795.75 2122H2808.07M2808.07 2122H2820.39M2820.39 2122H2832.72M2832.72 2122H2845.04M2845.04 2122H2857.37M2857.37 2122H2869.69M2869.69 2122H2882.01M2882.01 2122H2894.34M2894.34 2122H2906.66M2906.66 2122H2918.99M2918.99 2122H2931.31M2931.31 2122H2943.63M2943.63 2122H2955.96M2955.96 2122H2968.28M2968.28 2122H2980.61M2980.61 2122H2992.93M2992.93 2122H3005.25M3005.25 2122H3017.58M3017.58 2122H3029.9M3029.9 2122H3042.23M3042.23 2122H3054.55M3054.55 2122H3066.87M3066.87 2122H3079.2M3079.2 2122H3091.52M3091.52 2122H3103.85M3103.85 2122H3116.17M3116.17 2122H3128.49M3128.49 2122H3140.82M3140.82 2122H3153.14M3153.14 2122H3165.47M3165.47 2122H3177.79M3177.79 2122H3190.11M3190.11 2122H3202.44M3202.44 2122H3214.76M3214.76 2122H3227.09M3227.09 2122H3239.41M3239.41 2122H3251.73M3251.73 2122H3264.06M3264.06 2122H3276.38M3276.38 2122H3288.71M3288.71 2122H3301.03M3301.03 2122H3313.35M3313.35 2122H3325.68M3325.68 2122H3338M3338 2122H3350.33M3350.33 2122H3362.65M3362.65 2122H3374.97M3374.97 2122H3387.3M3387.3 2122H3399.62M3399.62 2122H3411.95M3411.95 2122H3424.27M3424.27 2122H3436.59M3436.59 2122H3448.92M3448.92 2122H3461.24M3461.24 2122H3473.57M3473.57 2122H3485.89M3485.89 2122H3498.21M3498.21 2122H3510.54M3510.54 2122H3522.86M3522.86 2122H3535.19M3535.19 2122H3547.51M3547.51 2122H3559.83M3559.83 2122H3572.16M3572.16 2122H3584.48M3584.48 2122H3596.81M3596.81 2122H3609.13M3609.13 2122H3621.45M3621.45 2122H3633.78M3633.78 2122H3646.1M3646.1 2122H3658.43M3658.43 2122H3670.75M3670.75 2122H3683.07M3689.24 2109.1V2122M3683.07 2122H3690.34M3763.18 2109.1V2122M3762.08 2122H3769.34M1926.9 821.1V845.9M1926.9 849.1V873.9M1926.9 877.1V901.9M1926.9 905.1V929.9M1926.9 933.1V957.9M1926.9 961.1V985.9M1926.9 989.1V1013.9M1926.9 1017.1V1041.9M1926.9 1045.1V1069.9M1926.9 1073.1V1097.9M1926.9 1101.1V1125.9M1926.9 1129.1V1153.9M1926.9 1157.1V1181.9M1926.9 1185.1V1209.9M1926.9 1213.1V1237.9M1926.9 1241.1V1265.9M1926.9 1269.1V1293.9M1926.9 1297.1V1321.9M1926.9 1325.1V1349.9M1926.9 1353.1V1377.9M1926.9 1381.1V1405.9M1926.9 1409.1V1433.9M1926.9 1437.1V1461.9M1926.9 1465.1V1489.9M1926.9 1493.1V1517.9M1926.9 1521.1V1545.9M1926.9 1549.1V1573.9M1926.9 1577.1V1601.9M1926.9 1605.1V1629.9M1926.9 1633.1V1657.9M1926.9 1661.1V1685.9M1926.9 1689.1V1713.9M1926.9 1717.1V1741.9M1926.9 1745.1V1769.9M1926.9 1773.1V1797.9M1926.9 1801.1V1825.9M1926.9 1829.1V1853.9M1926.9 1857.1V1881.9M1926.9 1885.1V1909.9M1926.9 1913.1V1937.9M1926.9 1941.1V1965.9M1926.9 1969.1V1993.9M1926.9 1997.1V2021.9M1926.9 2025.1V2049.9M1926.9 2053.1V2077.9M1926.9 2081.1V2105.9M3775.5 821.1V845.9M3775.5 849.1V873.9M3775.5 877.1V901.9M3775.5 905.1V929.9M3775.5 933.1V957.9M3775.5 961.1V985.9M3775.5 989.1V1013.9M3775.5 1017.1V1041.9M3775.5 1045.1V1069.9M3775.5 1073.1V1097.9M3775.5 1101.1V1125.9M3775.5 1129.1V1153.9M3775.5 1157.1V1181.9M3775.5 1185.1V1209.9M3775.5 1213.1V1237.9M3775.5 1241.1V1265.9M3775.5 1269.1V1293.9M3775.5 1297.1V1321.9M3775.5 1325.1V1349.9M3775.5 1353.1V1377.9M3775.5 1381.1V1405.9M3775.5 1409.1V1433.9M3775.5 1437.1V1461.9M3775.5 1465.1V1489.9M3775.5 1493.1V1517.9M3775.5 1521.1V1545.9M3775.5 1549.1V1573.9M3775.5 1577.1V1601.9M3775.5 1605.1V1629.9M3775.5 1633.1V1657.9M3775.5 1661.1V1685.9M3775.5 1689.1V1713.9M3775.5 1717.1V1741.9M3775.5 1745.1V1769.9M3775.5 1773.1V1797.9M3775.5 1801.1V1825.9M3775.5 1829.1V1853.9M3775.5 1857.1V1881.9M3775.5 1885.1V1909.9M3775.5 1913.1V1937.9M3775.5 1941.1V1965.9M3775.5 1969.1V1993.9M3775.5 1997.1V2021.9M3775.5 2025.1V2049.9M3775.5 2053.1V2077.9M3775.5 2081.1V2105.9"/>
<path fill="none" stroke="#464646" stroke-width="1.6" d="M2163.9 2120.3V2127.3H2157.9 M2157.9 2127.3l3 -3 M2157.9 2127.3l3 3"/>
<path fill="none" stroke="#f0f0f0" stroke-width="2.7" stroke-linejoin="miter" d="M3763.18 841.1V827.4 M3757.98 832.4L3763.18 827.2L3768.38 832.4"/>
<path fill="none" stroke="#f0f0f0" stroke-width="2.7" stroke-linejoin="miter" d="M3763.18 2085.9V2099.6 M3757.98 2094.6L3763.18 2099.8L3768.38 2094.6"/>
<path fill="none" stroke="#464646" stroke-width="2.7" stroke-linejoin="miter" d="M1951.55 2129.1V2115.4 M1946.35 2120.4L1951.55 2115.2L1956.75 2120.4"/>
<path fill="none" stroke="#cb4848" stroke-width="2.7" stroke-linejoin="miter" d="M2062.47 2113.9V2127.6 M2057.27 2122.6L2062.47 2127.8L2067.67 2122.6"/>
<path fill="#cb4848" d="M3622.15 132.1h11.2v2.8h-11.2z"/>
<path fill="#88c892" d="M3572.91 407.9h10.9v11h-10.9z"/>
<path fill="#99c688" d="M3585.23 407.9h10.9v11h-10.9z"/>
<path fill="#a9c47f" d="M3597.56 407.9h10.9v11h-10.9z"/>
<path fill="#bac275" d="M3609.88 407.9h10.9v11h-10.9z"/>
<path fill="#cbc06c" d="M3622.2 407.9h10.9v11h-10.9z"/>
<path fill="#cea966" d="M3634.53 407.9h10.9v11h-10.9z"/>
<path fill="#d2925f" d="M3646.85 407.9h10.9v11h-10.9z"/>
<path fill="#404040" d="M3659.18 407.9h10.9v11h-10.9zM3671.5 407.9h10.9v11h-10.9zM3683.82 407.9h10.9v11h-10.9zM1465.5 883.9h10.9v11h-10.9zM1477.83 883.9h10.9v11h-10.9zM1490.15 883.9h10.9v11h-10.9zM1502.48 883.9h10.9v11h-10.9zM1514.8 883.9h10.9v11h-10.9zM1527.12 883.9h10.9v11h-10.9zM1539.45 883.9h10.9v11h-10.9zM1551.77 883.9h10.9v11h-10.9zM1564.1 883.9h10.9v11h-10.9zM1576.42 883.9h10.9v11h-10.9zM1588.74 883.9h10.9v11h-10.9zM1601.07 883.9h10.9v11h-10.9zM1613.39 883.9h10.9v11h-10.9zM1625.72 883.9h10.9v11h-10.9zM1638.04 883.9h10.9v11h-10.9zM1650.36 883.9h10.9v11h-10.9zM1662.69 883.9h10.9v11h-10.9zM1675.01 883.9h10.9v11h-10.9zM1687.34 883.9h10.9v11h-10.9zM1699.66 883.9h10.9v11h-10.9zM1711.98 883.9h10.9v11h-10.9zM1724.31 883.9h10.9v11h-10.9zM1736.63 883.9h10.9v11h-10.9zM1748.96 883.9h10.9v11h-10.9zM1761.28 883.9h10.9v11h-10.9zM1773.6 883.9h10.9v11h-10.9zM1601.07 911.9h10.9v11h-10.9zM1613.39 911.9h10.9v11h-10.9zM1625.72 911.9h10.9v11h-10.9zM1638.04 911.9h10.9v11h-10.9zM1650.36 911.9h10.9v11h-10.9zM1662.69 911.9h10.9v11h-10.9zM1675.01 911.9h10.9v11h-10.9zM1687.34 911.9h10.9v11h-10.9zM1699.66 911.9h10.9v11h-10.9zM1711.98 911.9h10.9v11h-10.9zM1724.31 911.9h10.9v11h-10.9zM1736.63 911.9h10.9v11h-10.9zM1748.96 911.9h10.9v11h-10.9zM1761.28 911.9h10.9v11h-10.9zM1773.6 911.9h10.9v11h-10.9zM1613.39 995.9h10.9v11h-10.9zM1625.72 995.9h10.9v11h-10.9zM1638.04 995.9h10.9v11h-10.9zM1650.36 995.9h10.9v11h-10.9zM1662.69 995.9h10.9v11h-10.9zM1675.01 995.9h10.9v11h-10.9zM1687.34 995.9h10.9v11h-10.9zM1699.66 995.9h10.9v11h-10.9zM1711.98 995.9h10.9v11h-10.9zM1724.31 995.9h10.9v11h-10.9zM1736.63 995.9h10.9v11h-10.9zM1748.96 995.9h10.9v11h-10.9zM1761.28 995.9h10.9v11h-10.9zM1773.6 995.9h10.9v11h-10.9zM1453.18 1023.9h10.9v11h-10.9zM1465.5 1023.9h10.9v11h-10.9zM1477.83 1023.9h10.9v11h-10.9zM1490.15 1023.9h10.9v11h-10.9zM1502.48 1023.9h10.9v11h-10.9zM1514.8 1023.9h10.9v11h-10.9zM1527.12 1023.9h10.9v11h-10.9zM1539.45 1023.9h10.9v11h-10.9zM1551.77 1023.9h10.9v11h-10.9zM1564.1 1023.9h10.9v11h-10.9zM1576.42 1023.9h10.9v11h-10.9zM1588.74 1023.9h10.9v11h-10.9zM1601.07 1023.9h10.9v11h-10.9zM1613.39 1023.9h10.9v11h-10.9zM1625.72 1023.9h10.9v11h-10.9zM1638.04 1023.9h10.9v11h-10.9zM1650.36 1023.9h10.9v11h-10.9zM1662.69 1023.9h10.9v11h-10.9zM1675.01 1023.9h10.9v11h-10.9zM1687.34 1023.9h10.9v11h-10.9zM1699.66 1023.9h10.9v11h-10.9zM1711.98 1023.9h10.9v11h-10.9zM1724.31 1023.9h10.9v11h-10.9zM1736.63 1023.9h10.9v11h-10.9zM1748.96 1023.9h10.9v11h-10.9zM1761.28 1023.9h10.9v11h-10.9zM1773.6 1023.9h10.9v11h-10.9z"/>
<path fill="#5f2e2a" d="M1292.97 883.9h10.9v11h-10.9zM1292.97 995.9h10.9v11h-10.9z"/>
<path fill="#66302d" d="M1305.29 883.9h10.9v11h-10.9zM1305.29 995.9h10.9v11h-10.9z"/>
<path fill="#6c3331" d="M1317.62 883.9h10.9v11h-10.9zM1317.62 995.9h10.9v11h-10.9z"/>
<path fill="#733634" d="M1329.94 883.9h10.9v11h-10.9zM1329.94 995.9h10.9v11h-10.9z"/>
<path fill="#793938" d="M1342.26 883.9h10.9v11h-10.9zM1342.26 995.9h10.9v11h-10.9z"/>
<path fill="#7f3c3b" d="M1354.59 883.9h10.9v11h-10.9zM1354.59 995.9h10.9v11h-10.9z"/>
<path fill="#863e3f" d="M1366.91 883.9h10.9v11h-10.9zM1366.91 995.9h10.9v11h-10.9z"/>
<path fill="#8c4142" d="M1379.24 883.9h10.9v11h-10.9zM1379.24 995.9h10.9v11h-10.9z"/>
<path fill="#934446" d="M1391.56 883.9h10.9v11h-10.9zM1391.56 995.9h10.9v11h-10.9z"/>
<path fill="#99464a" d="M1403.88 883.9h10.9v11h-10.9zM1403.88 995.9h10.9v11h-10.9z"/>
<path fill="#9f494d" d="M1416.21 883.9h10.9v11h-10.9zM1416.21 995.9h10.9v11h-10.9z"/>
<path fill="#a64c51" d="M1428.53 883.9h10.9v11h-10.9zM1428.53 995.9h10.9v11h-10.9z"/>
<path fill="#ac4f54" d="M1440.86 883.9h10.9v11h-10.9zM1440.86 995.9h10.9v11h-10.9z"/>
<path fill="#b35258" d="M1453.18 883.9h10.9v11h-10.9zM1453.18 995.9h10.9v11h-10.9z"/>
<path fill="#3e5726" d="M1292.97 911.9h10.9v11h-10.9zM1292.97 1023.9h10.9v11h-10.9z"/>
<path fill="#445e2b" d="M1305.29 911.9h10.9v11h-10.9zM1305.29 1023.9h10.9v11h-10.9z"/>
<path fill="#4b6630" d="M1317.62 911.9h10.9v11h-10.9zM1317.62 1023.9h10.9v11h-10.9z"/>
<path fill="#516d35" d="M1329.94 911.9h10.9v11h-10.9zM1329.94 1023.9h10.9v11h-10.9z"/>
<path fill="#57753a" d="M1342.26 911.9h10.9v11h-10.9zM1342.26 1023.9h10.9v11h-10.9z"/>
<path fill="#5e7c3f" d="M1354.59 911.9h10.9v11h-10.9zM1354.59 1023.9h10.9v11h-10.9z"/>
<path fill="#648444" d="M1366.91 911.9h10.9v11h-10.9zM1366.91 1023.9h10.9v11h-10.9z"/>
<path fill="#6a8b49" d="M1379.24 911.9h10.9v11h-10.9zM1379.24 1023.9h10.9v11h-10.9z"/>
<path fill="#70934e" d="M1391.56 911.9h10.9v11h-10.9zM1391.56 1023.9h10.9v11h-10.9z"/>
<path fill="#769a53" d="M1403.88 911.9h10.9v11h-10.9zM1403.88 1023.9h10.9v11h-10.9z"/>
<path fill="#7da258" d="M1416.21 911.9h10.9v11h-10.9zM1416.21 1023.9h10.9v11h-10.9z"/>
<path fill="#83aa5d" d="M1428.53 911.9h10.9v11h-10.9zM1428.53 1023.9h10.9v11h-10.9z"/>
<path fill="#89b162" d="M1440.86 911.9h10.9v11h-10.9zM1440.86 1023.9h10.9v11h-10.9z"/>
<path fill="#90b967" d="M1453.18 911.9h10.9v11h-10.9z"/>
<path fill="#96c06c" d="M1465.5 911.9h10.9v11h-10.9z"/>
<path fill="#9cc871" d="M1477.83 911.9h10.9v11h-10.9z"/>
<path fill="#a2cf76" d="M1490.15 911.9h10.9v11h-10.9z"/>
<path fill="#a8d77b" d="M1502.48 911.9h10.9v11h-10.9z"/>
<path fill="#afde80" d="M1514.8 911.9h10.9v11h-10.9z"/>
<path fill="#b5e685" d="M1527.12 911.9h10.9v11h-10.9z"/>
<path fill="#b7e785" d="M1539.45 911.9h10.9v11h-10.9z"/>
<path fill="#b9e885" d="M1551.77 911.9h10.9v11h-10.9z"/>
<path fill="#bbea85" d="M1564.1 911.9h10.9v11h-10.9z"/>
<path fill="#bdeb85" d="M1576.42 911.9h10.9v11h-10.9z"/>
<path fill="#bfec85" d="M1588.74 911.9h10.9v11h-10.9z"/>
<path fill="#b9545b" d="M1465.5 995.9h10.9v11h-10.9z"/>
<path fill="#bf575f" d="M1477.83 995.9h10.9v11h-10.9z"/>
<path fill="#c65a62" d="M1490.15 995.9h10.9v11h-10.9z"/>
<path fill="#cc5c66" d="M1502.48 995.9h10.9v11h-10.9z"/>
<path fill="#d35f69" d="M1514.8 995.9h10.9v11h-10.9z"/>
<path fill="#d9626d" d="M1527.12 995.9h10.9v11h-10.9z"/>
<path fill="#db616d" d="M1539.45 995.9h10.9v11h-10.9z"/>
<path fill="#dd5f6d" d="M1551.77 995.9h10.9v11h-10.9z"/>
<path fill="#df5e6c" d="M1564.1 995.9h10.9v11h-10.9z"/>
<path fill="#e15d6c" d="M1576.42 995.9h10.9v11h-10.9z"/>
<path fill="#e25b6c" d="M1588.74 995.9h10.9v11h-10.9z"/>
<path fill="#e45a6c" d="M1601.07 995.9h10.9v11h-10.9z"/>
<path fill="#c8c8c8" d="M3757.02 850h12.32v24h-12.32z"/>
<path fill="#86c892" d="M3475.72 435.2a1.75 1.75 0 1 0 3.5 0a1.75 1.75 0 1 0 -3.5 0zM3475.72 439.9a1.75 1.75 0 1 0 3.5 0a1.75 1.75 0 1 0 -3.5 0zM3475.72 444.7a1.75 1.75 0 1 0 3.5 0a1.75 1.75 0 1 0 -3.5 0zM3475.72 449.4a1.75 1.75 0 1 0 3.5 0a1.75 1.75 0 1 0 -3.5 0zM3480.92 435.2a1.75 1.75 0 1 0 3.5 0a1.75 1.75 0 1 0 -3.5 0zM3480.92 439.9a1.75 1.75 0 1 0 3.5 0a1.75 1.75 0 1 0 -3.5 0zM3480.92 444.7a1.75 1.75 0 1 0 3.5 0a1.75 1.75 0 1 0 -3.5 0zM3480.92 449.4a1.75 1.75 0 1 0 3.5 0a1.75 1.75 0 1 0 -3.5 0zM3488.04 435.2a1.75 1.75 0 1 0 3.5 0a1.75 1.75 0 1 0 -3.5 0zM3488.04 439.9a1.75 1.75 0 1 0 3.5 0a1.75 1.75 0 1 0 -3.5 0zM3488.04 444.7a1.75 1.75 0 1 0 3.5 0a1.75 1.75 0 1 0 -3.5 0zM3488.04 449.4a1.75 1.75 0 1 0 3.5 0a1.75 1.75 0 1 0 -3.5 0zM3493.24 435.2a1.75 1.75 0 1 0 3.5 0a1.75 1.75 0 1 0 -3.5 0zM3493.24 439.9a1.75 1.75 0 1 0 3.5 0a1.75 1.75 0 1 0 -3.5 0zM3493.24 444.7a1.75 1.75 0 1 0 3.5 0a1.75 1.75 0 1 0 -3.5 0zM3493.24 449.4a1.75 1.75 0 1 0 3.5 0a1.75 1.75 0 1 0 -3.5 0zM3500.36 435.2a1.75 1.75 0 1 0 3.5 0a1.75 1.75 0 1 0 -3.5 0zM3500.36 439.9a1.75 1.75 0 1 0 3.5 0a1.75 1.75 0 1 0 -3.5 0zM3500.36 444.7a1.75 1.75 0 1 0 3.5 0a1.75 1.75 0 1 0 -3.5 0zM3500.36 449.4a1.75 1.75 0 1 0 3.5 0a1.75 1.75 0 1 0 -3.5 0zM3505.56 435.2a1.75 1.75 0 1 0 3.5 0a1.75 1.75 0 1 0 -3.5 0zM3505.56 439.9a1.75 1.75 0 1 0 3.5 0a1.75 1.75 0 1 0 -3.5 0zM3505.56 444.7a1.75 1.75 0 1 0 3.5 0a1.75 1.75 0 1 0 -3.5 0zM3505.56 449.4a1.75 1.75 0 1 0 3.5 0a1.75 1.75 0 1 0 -3.5 0zM3475.72 463.2a1.75 1.75 0 1 0 3.5 0a1.75 1.75 0 1 0 -3.5 0zM3475.72 467.9a1.75 1.75 0 1 0 3.5 0a1.75 1.75 0 1 0 -3.5 0zM3475.72 472.7a1.75 1.75 0 1 0 3.5 0a1.75 1.75 0 1 0 -3.5 0zM3475.72 477.4a1.75 1.75 0 1 0 3.5 0a1.75 1.75 0 1 0 -3.5 0zM3480.92 463.2a1.75 1.75 0 1 0 3.5 0a1.75 1.75 0 1 0 -3.5 0zM3480.92 467.9a1.75 1.75 0 1 0 3.5 0a1.75 1.75 0 1 0 -3.5 0zM3480.92 472.7a1.75 1.75 0 1 0 3.5 0a1.75 1.75 0 1 0 -3.5 0zM3480.92 477.4a1.75 1.75 0 1 0 3.5 0a1.75 1.75 0 1 0 -3.5 0zM3488.04 463.2a1.75 1.75 0 1 0 3.5 0a1.75 1.75 0 1 0 -3.5 0zM3488.04 467.9a1.75 1.75 0 1 0 3.5 0a1.75 1.75 0 1 0 -3.5 0zM3488.04 472.7a1.75 1.75 0 1 0 3.5 0a1.75 1.75 0 1 0 -3.5 0zM3488.04 477.4a1.75 1.75 0 1 0 3.5 0a1.75 1.75 0 1 0 -3.5 0zM3493.24 463.2a1.75 1.75 0 1 0 3.5 0a1.75 1.75 0 1 0 -3.5 0zM3493.24 467.9a1.75 1.75 0 1 0 3.5 0a1.75 1.75 0 1 0 -3.5 0zM3493.24 472.7a1.75 1.75 0 1 0 3.5 0a1.75 1.75 0 1 0 -3.5 0zM3493.24 477.4a1.75 1.75 0 1 0 3.5 0a1.75 1.75 0 1 0 -3.5 0zM3500.36 463.2a1.75 1.75 0 1 0 3.5 0a1.75 1.75 0 1 0 -3.5 0zM3500.36 467.9a1.75 1.75 0 1 0 3.5 0a1.75 1.75 0 1 0 -3.5 0zM3500.36 472.7a1.75 1.75 0 1 0 3.5 0a1.75 1.75 0 1 0 -3.5 0zM3500.36 477.4a1.75 1.75 0 1 0 3.5 0a1.75 1.75 0 1 0 -3.5 0zM3505.56 463.2a1.75 1.75 0 1 0 3.5 0a1.75 1.75 0 1 0 -3.5 0zM3505.56 467.9a1.75 1.75 0 1 0 3.5 0a1.75 1.75 0 1 0 -3.5 0zM3505.56 472.7a1.75 1.75 0 1 0 3.5 0a1.75 1.75 0 1 0 -3.5 0zM3505.56 477.4a1.75 1.75 0 1 0 3.5 0a1.75 1.75 0 1 0 -3.5 0z"/>
<path fill="#96c68a" d="M3475.72 407.2a1.75 1.75 0 1 0 3.5 0a1.75 1.75 0 1 0 -3.5 0zM3475.72 411.9a1.75 1.75 0 1 0 3.5 0a1.75 1.75 0 1 0 -3.5 0zM3475.72 416.7a1.75 1.75 0 1 0 3.5 0a1.75 1.75 0 1 0 -3.5 0zM3475.72 421.4a1.75 1.75 0 1 0 3.5 0a1.75 1.75 0 1 0 -3.5 0zM3480.92 407.2a1.75 1.75 0 1 0 3.5 0a1.75 1.75 0 1 0 -3.5 0zM3480.92 411.9a1.75 1.75 0 1 0 3.5 0a1.75 1.75 0 1 0 -3.5 0zM3480.92 416.7a1.75 1.75 0 1 0 3.5 0a1.75 1.75 0 1 0 -3.5 0zM3480.92 421.4a1.75 1.75 0 1 0 3.5 0a1.75 1.75 0 1 0 -3.5 0zM3488.04 416.7a1.75 1.75 0 1 0 3.5 0a1.75 1.75 0 1 0 -3.5 0zM3488.04 421.4a1.75 1.75 0 1 0 3.5 0a1.75 1.75 0 1 0 -3.5 0zM3493.24 407.2a1.75 1.75 0 1 0 3.5 0a1.75 1.75 0 1 0 -3.5 0zM3493.24 411.9a1.75 1.75 0 1 0 3.5 0a1.75 1.75 0 1 0 -3.5 0zM3493.24 416.7a1.75 1.75 0 1 0 3.5 0a1.75 1.75 0 1 0 -3.5 0zM3493.24 421.4a1.75 1.75 0 1 0 3.5 0a1.75 1.75 0 1 0 -3.5 0zM3500.36 407.2a1.75 1.75 0 1 0 3.5 0a1.75 1.75 0 1 0 -3.5 0zM3500.36 411.9a1.75 1.75 0 1 0 3.5 0a1.75 1.75 0 1 0 -3.5 0zM3500.36 416.7a1.75 1.75 0 1 0 3.5 0a1.75 1.75 0 1 0 -3.5 0zM3500.36 421.4a1.75 1.75 0 1 0 3.5 0a1.75 1.75 0 1 0 -3.5 0zM3505.56 407.2a1.75 1.75 0 1 0 3.5 0a1.75 1.75 0 1 0 -3.5 0zM3505.56 411.9a1.75 1.75 0 1 0 3.5 0a1.75 1.75 0 1 0 -3.5 0zM3505.56 416.7a1.75 1.75 0 1 0 3.5 0a1.75 1.75 0 1 0 -3.5 0zM3505.56 421.4a1.75 1.75 0 1 0 3.5 0a1.75 1.75 0 1 0 -3.5 0zM3475.72 491.2a1.75 1.75 0 1 0 3.5 0a1.75 1.75 0 1 0 -3.5 0zM3475.72 495.9a1.75 1.75 0 1 0 3.5 0a1.75 1.75 0 1 0 -3.5 0zM3475.72 500.7a1.75 1.75 0 1 0 3.5 0a1.75 1.75 0 1 0 -3.5 0zM3475.72 505.4a1.75 1.75 0 1 0 3.5 0a1.75 1.75 0 1 0 -3.5 0zM3480.92 491.2a1.75 1.75 0 1 0 3.5 0a1.75 1.75 0 1 0 -3.5 0zM3480.92 495.9a1.75 1.75 0 1 0 3.5 0a1.75 1.75 0 1 0 -3.5 0zM3480.92 500.7a1.75 1.75 0 1 0 3.5 0a1.75 1.75 0 1 0 -3.5 0zM3480.92 505.4a1.75 1.75 0 1 0 3.5 0a1.75 1.75 0 1 0 -3.5 0zM3488.04 491.2a1.75 1.75 0 1 0 3.5 0a1.75 1.75 0 1 0 -3.5 0zM3488.04 495.9a1.75 1.75 0 1 0 3.5 0a1.75 1.75 0 1 0 -3.5 0zM3493.24 491.2a1.75 1.75 0 1 0 3.5 0a1.75 1.75 0 1 0 -3.5 0zM3493.24 495.9a1.75 1.75 0 1 0 3.5 0a1.75 1.75 0 1 0 -3.5 0zM3493.24 500.7a1.75 1.75 0 1 0 3.5 0a1.75 1.75 0 1 0 -3.5 0zM3493.24 505.4a1.75 1.75 0 1 0 3.5 0a1.75 1.75 0 1 0 -3.5 0zM3500.36 491.2a1.75 1.75 0 1 0 3.5 0a1.75 1.75 0 1 0 -3.5 0zM3500.36 495.9a1.75 1.75 0 1 0 3.5 0a1.75 1.75 0 1 0 -3.5 0zM3500.36 500.7a1.75 1.75 0 1 0 3.5 0a1.75 1.75 0 1 0 -3.5 0zM3500.36 505.4a1.75 1.75 0 1 0 3.5 0a1.75 1.75 0 1 0 -3.5 0zM3505.56 491.2a1.75 1.75 0 1 0 3.5 0a1.75 1.75 0 1 0 -3.5 0zM3505.56 495.9a1.75 1.75 0 1 0 3.5 0a1.75 1.75 0 1 0 -3.5 0zM3505.56 500.7a1.75 1.75 0 1 0 3.5 0a1.75 1.75 0 1 0 -3.5 0zM3505.56 505.4a1.75 1.75 0 1 0 3.5 0a1.75 1.75 0 1 0 -3.5 0z"/>
<path fill="#a5c581" d="M3475.72 393.4a1.75 1.75 0 1 0 3.5 0a1.75 1.75 0 1 0 -3.5 0zM3480.92 379.2a1.75 1.75 0 1 0 3.5 0a1.75 1.75 0 1 0 -3.5 0zM3480.92 383.9a1.75 1.75 0 1 0 3.5 0a1.75 1.75 0 1 0 -3.5 0zM3480.92 388.7a1.75 1.75 0 1 0 3.5 0a1.75 1.75 0 1 0 -3.5 0zM3480.92 393.4a1.75 1.75 0 1 0 3.5 0a1.75 1.75 0 1 0 -3.5 0zM3493.24 383.9a1.75 1.75 0 1 0 3.5 0a1.75 1.75 0 1 0 -3.5 0zM3493.24 388.7a1.75 1.75 0 1 0 3.5 0a1.75 1.75 0 1 0 -3.5 0zM3493.24 393.4a1.75 1.75 0 1 0 3.5 0a1.75 1.75 0 1 0 -3.5 0zM3500.36 379.2a1.75 1.75 0 1 0 3.5 0a1.75 1.75 0 1 0 -3.5 0zM3500.36 383.9a1.75 1.75 0 1 0 3.5 0a1.75 1.75 0 1 0 -3.5 0zM3500.36 388.7a1.75 1.75 0 1 0 3.5 0a1.75 1.75 0 1 0 -3.5 0zM3500.36 393.4a1.75 1.75 0 1 0 3.5 0a1.75 1.75 0 1 0 -3.5 0zM3505.56 379.2a1.75 1.75 0 1 0 3.5 0a1.75 1.75 0 1 0 -3.5 0zM3505.56 383.9a1.75 1.75 0 1 0 3.5 0a1.75 1.75 0 1 0 -3.5 0zM3505.56 388.7a1.75 1.75 0 1 0 3.5 0a1.75 1.75 0 1 0 -3.5 0zM3505.56 393.4a1.75 1.75 0 1 0 3.5 0a1.75 1.75 0 1 0 -3.5 0zM3475.72 519.2a1.75 1.75 0 1 0 3.5 0a1.75 1.75 0 1 0 -3.5 0zM3480.92 519.2a1.75 1.75 0 1 0 3.5 0a1.75 1.75 0 1 0 -3.5 0zM3480.92 523.9a1.75 1.75 0 1 0 3.5 0a1.75 1.75 0 1 0 -3.5 0zM3480.92 528.7a1.75 1.75 0 1 0 3.5 0a1.75 1.75 0 1 0 -3.5 0zM3480.92 533.4a1.75 1.75 0 1 0 3.5 0a1.75 1.75 0 1 0 -3.5 0zM3493.24 519.2a1.75 1.75 0 1 0 3.5 0a1.75 1.75 0 1 0 -3.5 0zM3493.24 523.9a1.75 1.75 0 1 0 3.5 0a1.75 1.75 0 1 0 -3.5 0zM3493.24 528.7a1.75 1.75 0 1 0 3.5 0a1.75 1.75 0 1 0 -3.5 0zM3500.36 519.2a1.75 1.75 0 1 0 3.5 0a1.75 1.75 0 1 0 -3.5 0zM3500.36 523.9a1.75 1.75 0 1 0 3.5 0a1.75 1.75 0 1 0 -3.5 0zM3500.36 528.7a1.75 1.75 0 1 0 3.5 0a1.75 1.75 0 1 0 -3.5 0zM3500.36 533.4a1.75 1.75 0 1 0 3.5 0a1.75 1.75 0 1 0 -3.5 0zM3505.56 519.2a1.75 1.75 0 1 0 3.5 0a1.75 1.75 0 1 0 -3.5 0zM3505.56 523.9a1.75 1.75 0 1 0 3.5 0a1.75 1.75 0 1 0 -3.5 0zM3505.56 528.7a1.75 1.75 0 1 0 3.5 0a1.75 1.75 0 1 0 -3.5 0zM3505.56 533.4a1.75 1.75 0 1 0 3.5 0a1.75 1.75 0 1 0 -3.5 0z"/>
<path fill="#b4c379" d="M3480.92 351.2a1.75 1.75 0 1 0 3.5 0a1.75 1.75 0 1 0 -3.5 0zM3480.92 355.9a1.75 1.75 0 1 0 3.5 0a1.75 1.75 0 1 0 -3.5 0zM3480.92 360.7a1.75 1.75 0 1 0 3.5 0a1.75 1.75 0 1 0 -3.5 0zM3480.92 365.4a1.75 1.75 0 1 0 3.5 0a1.75 1.75 0 1 0 -3.5 0zM3500.36 351.2a1.75 1.75 0 1 0 3.5 0a1.75 1.75 0 1 0 -3.5 0zM3500.36 355.9a1.75 1.75 0 1 0 3.5 0a1.75 1.75 0 1 0 -3.5 0zM3500.36 360.7a1.75 1.75 0 1 0 3.5 0a1.75 1.75 0 1 0 -3.5 0zM3500.36 365.4a1.75 1.75 0 1 0 3.5 0a1.75 1.75 0 1 0 -3.5 0zM3505.56 351.2a1.75 1.75 0 1 0 3.5 0a1.75 1.75 0 1 0 -3.5 0zM3505.56 355.9a1.75 1.75 0 1 0 3.5 0a1.75 1.75 0 1 0 -3.5 0zM3505.56 360.7a1.75 1.75 0 1 0 3.5 0a1.75 1.75 0 1 0 -3.5 0zM3505.56 365.4a1.75 1.75 0 1 0 3.5 0a1.75 1.75 0 1 0 -3.5 0zM3480.92 547.2a1.75 1.75 0 1 0 3.5 0a1.75 1.75 0 1 0 -3.5 0zM3480.92 551.9a1.75 1.75 0 1 0 3.5 0a1.75 1.75 0 1 0 -3.5 0zM3480.92 556.7a1.75 1.75 0 1 0 3.5 0a1.75 1.75 0 1 0 -3.5 0zM3480.92 561.4a1.75 1.75 0 1 0 3.5 0a1.75 1.75 0 1 0 -3.5 0zM3500.36 547.2a1.75 1.75 0 1 0 3.5 0a1.75 1.75 0 1 0 -3.5 0zM3500.36 551.9a1.75 1.75 0 1 0 3.5 0a1.75 1.75 0 1 0 -3.5 0zM3500.36 556.7a1.75 1.75 0 1 0 3.5 0a1.75 1.75 0 1 0 -3.5 0zM3500.36 561.4a1.75 1.75 0 1 0 3.5 0a1.75 1.75 0 1 0 -3.5 0zM3505.56 547.2a1.75 1.75 0 1 0 3.5 0a1.75 1.75 0 1 0 -3.5 0zM3505.56 551.9a1.75 1.75 0 1 0 3.5 0a1.75 1.75 0 1 0 -3.5 0zM3505.56 556.7a1.75 1.75 0 1 0 3.5 0a1.75 1.75 0 1 0 -3.5 0zM3505.56 561.4a1.75 1.75 0 1 0 3.5 0a1.75 1.75 0 1 0 -3.5 0z"/>
<path fill="#c3c170" d="M3480.92 323.2a1.75 1.75 0 1 0 3.5 0a1.75 1.75 0 1 0 -3.5 0zM3480.92 327.9a1.75 1.75 0 1 0 3.5 0a1.75 1.75 0 1 0 -3.5 0zM3480.92 332.7a1.75 1.75 0 1 0 3.5 0a1.75 1.75 0 1 0 -3.5 0zM3480.92 337.4a1.75 1.75 0 1 0 3.5 0a1.75 1.75 0 1 0 -3.5 0zM3500.36 323.2a1.75 1.75 0 1 0 3.5 0a1.75 1.75 0 1 0 -3.5 0zM3500.36 327.9a1.75 1.75 0 1 0 3.5 0a1.75 1.75 0 1 0 -3.5 0zM3500.36 332.7a1.75 1.75 0 1 0 3.5 0a1.75 1.75 0 1 0 -3.5 0zM3500.36 337.4a1.75 1.75 0 1 0 3.5 0a1.75 1.75 0 1 0 -3.5 0zM3505.56 323.2a1.75 1.75 0 1 0 3.5 0a1.75 1.75 0 1 0 -3.5 0zM3505.56 327.9a1.75 1.75 0 1 0 3.5 0a1.75 1.75 0 1 0 -3.5 0zM3505.56 332.7a1.75 1.75 0 1 0 3.5 0a1.75 1.75 0 1 0 -3.5 0zM3505.56 337.4a1.75 1.75 0 1 0 3.5 0a1.75 1.75 0 1 0 -3.5 0zM3480.92 575.2a1.75 1.75 0 1 0 3.5 0a1.75 1.75 0 1 0 -3.5 0zM3480.92 579.9a1.75 1.75 0 1 0 3.5 0a1.75 1.75 0 1 0 -3.5 0zM3480.92 584.7a1.75 1.75 0 1 0 3.5 0a1.75 1.75 0 1 0 -3.5 0zM3480.92 589.4a1.75 1.75 0 1 0 3.5 0a1.75 1.75 0 1 0 -3.5 0zM3500.36 575.2a1.75 1.75 0 1 0 3.5 0a1.75 1.75 0 1 0 -3.5 0zM3500.36 579.9a1.75 1.75 0 1 0 3.5 0a1.75 1.75 0 1 0 -3.5 0zM3500.36 584.7a1.75 1.75 0 1 0 3.5 0a1.75 1.75 0 1 0 -3.5 0zM3500.36 589.4a1.75 1.75 0 1 0 3.5 0a1.75 1.75 0 1 0 -3.5 0zM3505.56 575.2a1.75 1.75 0 1 0 3.5 0a1.75 1.75 0 1 0 -3.5 0zM3505.56 579.9a1.75 1.75 0 1 0 3.5 0a1.75 1.75 0 1 0 -3.5 0zM3505.56 584.7a1.75 1.75 0 1 0 3.5 0a1.75 1.75 0 1 0 -3.5 0zM3505.56 589.4a1.75 1.75 0 1 0 3.5 0a1.75 1.75 0 1 0 -3.5 0z"/>
<path fill="#cdb569" d="M3480.92 295.2a1.75 1.75 0 1 0 3.5 0a1.75 1.75 0 1 0 -3.5 0zM3480.92 299.9a1.75 1.75 0 1 0 3.5 0a1.75 1.75 0 1 0 -3.5 0zM3480.92 304.7a1.75 1.75 0 1 0 3.5 0a1.75 1.75 0 1 0 -3.5 0zM3480.92 309.4a1.75 1.75 0 1 0 3.5 0a1.75 1.75 0 1 0 -3.5 0zM3500.36 309.4a1.75 1.75 0 1 0 3.5 0a1.75 1.75 0 1 0 -3.5 0zM3505.56 295.2a1.75 1.75 0 1 0 3.5 0a1.75 1.75 0 1 0 -3.5 0zM3505.56 299.9a1.75 1.75 0 1 0 3.5 0a1.75 1.75 0 1 0 -3.5 0zM3505.56 304.7a1.75 1.75 0 1 0 3.5 0a1.75 1.75 0 1 0 -3.5 0zM3505.56 309.4a1.75 1.75 0 1 0 3.5 0a1.75 1.75 0 1 0 -3.5 0zM3480.92 603.2a1.75 1.75 0 1 0 3.5 0a1.75 1.75 0 1 0 -3.5 0zM3480.92 607.9a1.75 1.75 0 1 0 3.5 0a1.75 1.75 0 1 0 -3.5 0zM3480.92 612.7a1.75 1.75 0 1 0 3.5 0a1.75 1.75 0 1 0 -3.5 0zM3480.92 617.4a1.75 1.75 0 1 0 3.5 0a1.75 1.75 0 1 0 -3.5 0zM3500.36 603.2a1.75 1.75 0 1 0 3.5 0a1.75 1.75 0 1 0 -3.5 0zM3505.56 603.2a1.75 1.75 0 1 0 3.5 0a1.75 1.75 0 1 0 -3.5 0zM3505.56 607.9a1.75 1.75 0 1 0 3.5 0a1.75 1.75 0 1 0 -3.5 0zM3505.56 612.7a1.75 1.75 0 1 0 3.5 0a1.75 1.75 0 1 0 -3.5 0zM3505.56 617.4a1.75 1.75 0 1 0 3.5 0a1.75 1.75 0 1 0 -3.5 0z"/>
<path fill="#d0a063" d="M3480.92 276.7a1.75 1.75 0 1 0 3.5 0a1.75 1.75 0 1 0 -3.5 0zM3480.92 281.4a1.75 1.75 0 1 0 3.5 0a1.75 1.75 0 1 0 -3.5 0zM3505.56 267.2a1.75 1.75 0 1 0 3.5 0a1.75 1.75 0 1 0 -3.5 0zM3505.56 271.9a1.75 1.75 0 1 0 3.5 0a1.75 1.75 0 1 0 -3.5 0zM3505.56 276.7a1.75 1.75 0 1 0 3.5 0a1.75 1.75 0 1 0 -3.5 0zM3505.56 281.4a1.75 1.75 0 1 0 3.5 0a1.75 1.75 0 1 0 -3.5 0zM3480.92 631.2a1.75 1.75 0 1 0 3.5 0a1.75 1.75 0 1 0 -3.5 0zM3480.92 635.9a1.75 1.75 0 1 0 3.5 0a1.75 1.75 0 1 0 -3.5 0zM3505.56 631.2a1.75 1.75 0 1 0 3.5 0a1.75 1.75 0 1 0 -3.5 0zM3505.56 635.9a1.75 1.75 0 1 0 3.5 0a1.75 1.75 0 1 0 -3.5 0zM3505.56 640.7a1.75 1.75 0 1 0 3.5 0a1.75 1.75 0 1 0 -3.5 0zM3505.56 645.4a1.75 1.75 0 1 0 3.5 0a1.75 1.75 0 1 0 -3.5 0z"/>
<path fill="#d38b5d" d="M3505.56 239.2a1.75 1.75 0 1 0 3.5 0a1.75 1.75 0 1 0 -3.5 0zM3505.56 243.9a1.75 1.75 0 1 0 3.5 0a1.75 1.75 0 1 0 -3.5 0zM3505.56 248.7a1.75 1.75 0 1 0 3.5 0a1.75 1.75 0 1 0 -3.5 0zM3505.56 253.4a1.75 1.75 0 1 0 3.5 0a1.75 1.75 0 1 0 -3.5 0zM3505.56 659.2a1.75 1.75 0 1 0 3.5 0a1.75 1.75 0 1 0 -3.5 0zM3505.56 663.9a1.75 1.75 0 1 0 3.5 0a1.75 1.75 0 1 0 -3.5 0zM3505.56 668.7a1.75 1.75 0 1 0 3.5 0a1.75 1.75 0 1 0 -3.5 0zM3505.56 673.4a1.75 1.75 0 1 0 3.5 0a1.75 1.75 0 1 0 -3.5 0z"/>
<path fill="#d67658" d="M3505.56 225.4a1.75 1.75 0 1 0 3.5 0a1.75 1.75 0 1 0 -3.5 0zM3505.56 687.2a1.75 1.75 0 1 0 3.5 0a1.75 1.75 0 1 0 -3.5 0z"/>
<path fill="#484848" d="M3574.31 449.4a1.75 1.75 0 1 0 3.5 0a1.75 1.75 0 1 0 -3.5 0zM3579.51 449.4a1.75 1.75 0 1 0 3.5 0a1.75 1.75 0 1 0 -3.5 0zM3586.63 449.4a1.75 1.75 0 1 0 3.5 0a1.75 1.75 0 1 0 -3.5 0zM3591.83 449.4a1.75 1.75 0 1 0 3.5 0a1.75 1.75 0 1 0 -3.5 0zM3598.96 449.4a1.75 1.75 0 1 0 3.5 0a1.75 1.75 0 1 0 -3.5 0zM3604.16 449.4a1.75 1.75 0 1 0 3.5 0a1.75 1.75 0 1 0 -3.5 0zM3611.28 449.4a1.75 1.75 0 1 0 3.5 0a1.75 1.75 0 1 0 -3.5 0zM3616.48 449.4a1.75 1.75 0 1 0 3.5 0a1.75 1.75 0 1 0 -3.5 0zM3623.6 449.4a1.75 1.75 0 1 0 3.5 0a1.75 1.75 0 1 0 -3.5 0zM3628.8 449.4a1.75 1.75 0 1 0 3.5 0a1.75 1.75 0 1 0 -3.5 0zM3635.93 449.4a1.75 1.75 0 1 0 3.5 0a1.75 1.75 0 1 0 -3.5 0zM3641.13 449.4a1.75 1.75 0 1 0 3.5 0a1.75 1.75 0 1 0 -3.5 0zM3648.25 449.4a1.75 1.75 0 1 0 3.5 0a1.75 1.75 0 1 0 -3.5 0zM3653.45 449.4a1.75 1.75 0 1 0 3.5 0a1.75 1.75 0 1 0 -3.5 0zM3574.31 477.4a1.75 1.75 0 1 0 3.5 0a1.75 1.75 0 1 0 -3.5 0zM3579.51 477.4a1.75 1.75 0 1 0 3.5 0a1.75 1.75 0 1 0 -3.5 0zM3586.63 477.4a1.75 1.75 0 1 0 3.5 0a1.75 1.75 0 1 0 -3.5 0zM3591.83 477.4a1.75 1.75 0 1 0 3.5 0a1.75 1.75 0 1 0 -3.5 0zM3598.96 477.4a1.75 1.75 0 1 0 3.5 0a1.75 1.75 0 1 0 -3.5 0zM3604.16 477.4a1.75 1.75 0 1 0 3.5 0a1.75 1.75 0 1 0 -3.5 0zM3611.28 477.4a1.75 1.75 0 1 0 3.5 0a1.75 1.75 0 1 0 -3.5 0zM3616.48 477.4a1.75 1.75 0 1 0 3.5 0a1.75 1.75 0 1 0 -3.5 0zM3623.6 477.4a1.75 1.75 0 1 0 3.5 0a1.75 1.75 0 1 0 -3.5 0zM3628.8 477.4a1.75 1.75 0 1 0 3.5 0a1.75 1.75 0 1 0 -3.5 0zM3635.93 477.4a1.75 1.75 0 1 0 3.5 0a1.75 1.75 0 1 0 -3.5 0zM3641.13 477.4a1.75 1.75 0 1 0 3.5 0a1.75 1.75 0 1 0 -3.5 0zM3648.25 477.4a1.75 1.75 0 1 0 3.5 0a1.75 1.75 0 1 0 -3.5 0zM3653.45 477.4a1.75 1.75 0 1 0 3.5 0a1.75 1.75 0 1 0 -3.5 0zM1220.42 869.4a1.75 1.75 0 1 0 3.5 0a1.75 1.75 0 1 0 -3.5 0zM1225.62 869.4a1.75 1.75 0 1 0 3.5 0a1.75 1.75 0 1 0 -3.5 0zM1232.75 869.4a1.75 1.75 0 1 0 3.5 0a1.75 1.75 0 1 0 -3.5 0zM1237.95 869.4a1.75 1.75 0 1 0 3.5 0a1.75 1.75 0 1 0 -3.5 0zM1245.07 869.4a1.75 1.75 0 1 0 3.5 0a1.75 1.75 0 1 0 -3.5 0zM1250.27 869.4a1.75 1.75 0 1 0 3.5 0a1.75 1.75 0 1 0 -3.5 0zM1257.4 869.4a1.75 1.75 0 1 0 3.5 0a1.75 1.75 0 1 0 -3.5 0zM1262.6 869.4a1.75 1.75 0 1 0 3.5 0a1.75 1.75 0 1 0 -3.5 0zM1269.72 869.4a1.75 1.75 0 1 0 3.5 0a1.75 1.75 0 1 0 -3.5 0zM1274.92 869.4a1.75 1.75 0 1 0 3.5 0a1.75 1.75 0 1 0 -3.5 0zM1282.04 869.4a1.75 1.75 0 1 0 3.5 0a1.75 1.75 0 1 0 -3.5 0zM1287.24 869.4a1.75 1.75 0 1 0 3.5 0a1.75 1.75 0 1 0 -3.5 0zM1294.37 869.4a1.75 1.75 0 1 0 3.5 0a1.75 1.75 0 1 0 -3.5 0zM1299.57 869.4a1.75 1.75 0 1 0 3.5 0a1.75 1.75 0 1 0 -3.5 0zM1306.69 869.4a1.75 1.75 0 1 0 3.5 0a1.75 1.75 0 1 0 -3.5 0zM1311.89 869.4a1.75 1.75 0 1 0 3.5 0a1.75 1.75 0 1 0 -3.5 0zM1319.02 869.4a1.75 1.75 0 1 0 3.5 0a1.75 1.75 0 1 0 -3.5 0zM1324.22 869.4a1.75 1.75 0 1 0 3.5 0a1.75 1.75 0 1 0 -3.5 0zM1331.34 869.4a1.75 1.75 0 1 0 3.5 0a1.75 1.75 0 1 0 -3.5 0zM1336.54 869.4a1.75 1.75 0 1 0 3.5 0a1.75 1.75 0 1 0 -3.5 0zM1343.66 869.4a1.75 1.75 0 1 0 3.5 0a1.75 1.75 0 1 0 -3.5 0zM1348.86 869.4a1.75 1.75 0 1 0 3.5 0a1.75 1.75 0 1 0 -3.5 0zM1355.99 869.4a1.75 1.75 0 1 0 3.5 0a1.75 1.75 0 1 0 -3.5 0zM1361.19 869.4a1.75 1.75 0 1 0 3.5 0a1.75 1.75 0 1 0 -3.5 0zM1368.31 869.4a1.75 1.75 0 1 0 3.5 0a1.75 1.75 0 1 0 -3.5 0zM1373.51 869.4a1.75 1.75 0 1 0 3.5 0a1.75 1.75 0 1 0 -3.5 0zM1380.64 869.4a1.75 1.75 0 1 0 3.5 0a1.75 1.75 0 1 0 -3.5 0zM1385.84 869.4a1.75 1.75 0 1 0 3.5 0a1.75 1.75 0 1 0 -3.5 0zM1392.96 869.4a1.75 1.75 0 1 0 3.5 0a1.75 1.75 0 1 0 -3.5 0zM1398.16 869.4a1.75 1.75 0 1 0 3.5 0a1.75 1.75 0 1 0 -3.5 0zM1405.28 869.4a1.75 1.75 0 1 0 3.5 0a1.75 1.75 0 1 0 -3.5 0zM1410.48 869.4a1.75 1.75 0 1 0 3.5 0a1.75 1.75 0 1 0 -3.5 0zM1417.61 869.4a1.75 1.75 0 1 0 3.5 0a1.75 1.75 0 1 0 -3.5 0zM1422.81 869.4a1.75 1.75 0 1 0 3.5 0a1.75 1.75 0 1 0 -3.5 0zM1429.93 869.4a1.75 1.75 0 1 0 3.5 0a1.75 1.75 0 1 0 -3.5 0zM1435.13 869.4a1.75 1.75 0 1 0 3.5 0a1.75 1.75 0 1 0 -3.5 0zM1442.26 869.4a1.75 1.75 0 1 0 3.5 0a1.75 1.75 0 1 0 -3.5 0zM1447.46 869.4a1.75 1.75 0 1 0 3.5 0a1.75 1.75 0 1 0 -3.5 0zM1454.58 869.4a1.75 1.75 0 1 0 3.5 0a1.75 1.75 0 1 0 -3.5 0zM1459.78 869.4a1.75 1.75 0 1 0 3.5 0a1.75 1.75 0 1 0 -3.5 0zM1466.9 869.4a1.75 1.75 0 1 0 3.5 0a1.75 1.75 0 1 0 -3.5 0zM1472.1 869.4a1.75 1.75 0 1 0 3.5 0a1.75 1.75 0 1 0 -3.5 0zM1479.23 869.4a1.75 1.75 0 1 0 3.5 0a1.75 1.75 0 1 0 -3.5 0zM1484.43 869.4a1.75 1.75 0 1 0 3.5 0a1.75 1.75 0 1 0 -3.5 0zM1491.55 869.4a1.75 1.75 0 1 0 3.5 0a1.75 1.75 0 1 0 -3.5 0zM1496.75 869.4a1.75 1.75 0 1 0 3.5 0a1.75 1.75 0 1 0 -3.5 0zM1503.88 869.4a1.75 1.75 0 1 0 3.5 0a1.75 1.75 0 1 0 -3.5 0zM1509.08 869.4a1.75 1.75 0 1 0 3.5 0a1.75 1.75 0 1 0 -3.5 0zM1516.2 869.4a1.75 1.75 0 1 0 3.5 0a1.75 1.75 0 1 0 -3.5 0zM1521.4 869.4a1.75 1.75 0 1 0 3.5 0a1.75 1.75 0 1 0 -3.5 0zM1528.52 869.4a1.75 1.75 0 1 0 3.5 0a1.75 1.75 0 1 0 -3.5 0zM1533.72 869.4a1.75 1.75 0 1 0 3.5 0a1.75 1.75 0 1 0 -3.5 0zM1540.85 869.4a1.75 1.75 0 1 0 3.5 0a1.75 1.75 0 1 0 -3.5 0zM1546.05 869.4a1.75 1.75 0 1 0 3.5 0a1.75 1.75 0 1 0 -3.5 0zM1553.17 869.4a1.75 1.75 0 1 0 3.5 0a1.75 1.75 0 1 0 -3.5 0zM1558.37 869.4a1.75 1.75 0 1 0 3.5 0a1.75 1.75 0 1 0 -3.5 0zM1565.5 869.4a1.75 1.75 0 1 0 3.5 0a1.75 1.75 0 1 0 -3.5 0zM1570.7 869.4a1.75 1.75 0 1 0 3.5 0a1.75 1.75 0 1 0 -3.5 0zM1577.82 869.4a1.75 1.75 0 1 0 3.5 0a1.75 1.75 0 1 0 -3.5 0zM1583.02 869.4a1.75 1.75 0 1 0 3.5 0a1.75 1.75 0 1 0 -3.5 0zM1590.14 869.4a1.75 1.75 0 1 0 3.5 0a1.75 1.75 0 1 0 -3.5 0zM1595.34 869.4a1.75 1.75 0 1 0 3.5 0a1.75 1.75 0 1 0 -3.5 0zM1602.47 869.4a1.75 1.75 0 1 0 3.5 0a1.75 1.75 0 1 0 -3.5 0zM1607.67 869.4a1.75 1.75 0 1 0 3.5 0a1.75 1.75 0 1 0 -3.5 0zM1614.79 869.4a1.75 1.75 0 1 0 3.5 0a1.75 1.75 0 1 0 -3.5 0zM1619.99 869.4a1.75 1.75 0 1 0 3.5 0a1.75 1.75 0 1 0 -3.5 0zM1627.12 869.4a1.75 1.75 0 1 0 3.5 0a1.75 1.75 0 1 0 -3.5 0zM1632.32 869.4a1.75 1.75 0 1 0 3.5 0a1.75 1.75 0 1 0 -3.5 0zM1639.44 869.4a1.75 1.75 0 1 0 3.5 0a1.75 1.75 0 1 0 -3.5 0zM1644.64 869.4a1.75 1.75 0 1 0 3.5 0a1.75 1.75 0 1 0 -3.5 0zM1651.76 869.4a1.75 1.75 0 1 0 3.5 0a1.75 1.75 0 1 0 -3.5 0zM1656.96 869.4a1.75 1.75 0 1 0 3.5 0a1.75 1.75 0 1 0 -3.5 0zM1664.09 869.4a1.75 1.75 0 1 0 3.5 0a1.75 1.75 0 1 0 -3.5 0zM1669.29 869.4a1.75 1.75 0 1 0 3.5 0a1.75 1.75 0 1 0 -3.5 0zM1676.41 869.4a1.75 1.75 0 1 0 3.5 0a1.75 1.75 0 1 0 -3.5 0zM1681.61 869.4a1.75 1.75 0 1 0 3.5 0a1.75 1.75 0 1 0 -3.5 0zM1688.74 869.4a1.75 1.75 0 1 0 3.5 0a1.75 1.75 0 1 0 -3.5 0zM1693.94 869.4a1.75 1.75 0 1 0 3.5 0a1.75 1.75 0 1 0 -3.5 0zM1701.06 869.4a1.75 1.75 0 1 0 3.5 0a1.75 1.75 0 1 0 -3.5 0zM1706.26 869.4a1.75 1.75 0 1 0 3.5 0a1.75 1.75 0 1 0 -3.5 0zM1713.38 869.4a1.75 1.75 0 1 0 3.5 0a1.75 1.75 0 1 0 -3.5 0zM1718.58 869.4a1.75 1.75 0 1 0 3.5 0a1.75 1.75 0 1 0 -3.5 0zM1725.71 869.4a1.75 1.75 0 1 0 3.5 0a1.75 1.75 0 1 0 -3.5 0zM1730.91 869.4a1.75 1.75 0 1 0 3.5 0a1.75 1.75 0 1 0 -3.5 0zM1738.03 869.4a1.75 1.75 0 1 0 3.5 0a1.75 1.75 0 1 0 -3.5 0zM1743.23 869.4a1.75 1.75 0 1 0 3.5 0a1.75 1.75 0 1 0 -3.5 0zM1750.36 869.4a1.75 1.75 0 1 0 3.5 0a1.75 1.75 0 1 0 -3.5 0zM1755.56 869.4a1.75 1.75 0 1 0 3.5 0a1.75 1.75 0 1 0 -3.5 0zM1762.68 869.4a1.75 1.75 0 1 0 3.5 0a1.75 1.75 0 1 0 -3.5 0zM1767.88 869.4a1.75 1.75 0 1 0 3.5 0a1.75 1.75 0 1 0 -3.5 0zM1775 869.4a1.75 1.75 0 1 0 3.5 0a1.75 1.75 0 1 0 -3.5 0zM1780.2 869.4a1.75 1.75 0 1 0 3.5 0a1.75 1.75 0 1 0 -3.5 0zM1787.33 869.4a1.75 1.75 0 1 0 3.5 0a1.75 1.75 0 1 0 -3.5 0zM1792.53 869.4a1.75 1.75 0 1 0 3.5 0a1.75 1.75 0 1 0 -3.5 0zM1799.65 869.4a1.75 1.75 0 1 0 3.5 0a1.75 1.75 0 1 0 -3.5 0zM1804.85 869.4a1.75 1.75 0 1 0 3.5 0a1.75 1.75 0 1 0 -3.5 0zM1811.98 869.4a1.75 1.75 0 1 0 3.5 0a1.75 1.75 0 1 0 -3.5 0zM1817.18 869.4a1.75 1.75 0 1 0 3.5 0a1.75 1.75 0 1 0 -3.5 0zM1824.3 869.4a1.75 1.75 0 1 0 3.5 0a1.75 1.75 0 1 0 -3.5 0zM1829.5 869.4a1.75 1.75 0 1 0 3.5 0a1.75 1.75 0 1 0 -3.5 0zM1836.62 869.4a1.75 1.75 0 1 0 3.5 0a1.75 1.75 0 1 0 -3.5 0zM1841.82 869.4a1.75 1.75 0 1 0 3.5 0a1.75 1.75 0 1 0 -3.5 0zM1848.95 869.4a1.75 1.75 0 1 0 3.5 0a1.75 1.75 0 1 0 -3.5 0zM1854.15 869.4a1.75 1.75 0 1 0 3.5 0a1.75 1.75 0 1 0 -3.5 0zM1873.6 869.4a1.75 1.75 0 1 0 3.5 0a1.75 1.75 0 1 0 -3.5 0zM1878.8 869.4a1.75 1.75 0 1 0 3.5 0a1.75 1.75 0 1 0 -3.5 0zM1885.92 869.4a1.75 1.75 0 1 0 3.5 0a1.75 1.75 0 1 0 -3.5 0zM1891.12 869.4a1.75 1.75 0 1 0 3.5 0a1.75 1.75 0 1 0 -3.5 0zM3623.6 869.4a1.75 1.75 0 1 0 3.5 0a1.75 1.75 0 1 0 -3.5 0zM3628.8 869.4a1.75 1.75 0 1 0 3.5 0a1.75 1.75 0 1 0 -3.5 0zM3635.93 869.4a1.75 1.75 0 1 0 3.5 0a1.75 1.75 0 1 0 -3.5 0zM3641.13 869.4a1.75 1.75 0 1 0 3.5 0a1.75 1.75 0 1 0 -3.5 0zM3648.25 869.4a1.75 1.75 0 1 0 3.5 0a1.75 1.75 0 1 0 -3.5 0zM3653.45 869.4a1.75 1.75 0 1 0 3.5 0a1.75 1.75 0 1 0 -3.5 0zM3623.6 897.4a1.75 1.75 0 1 0 3.5 0a1.75 1.75 0 1 0 -3.5 0zM3628.8 897.4a1.75 1.75 0 1 0 3.5 0a1.75 1.75 0 1 0 -3.5 0zM3635.93 897.4a1.75 1.75 0 1 0 3.5 0a1.75 1.75 0 1 0 -3.5 0zM3641.13 897.4a1.75 1.75 0 1 0 3.5 0a1.75 1.75 0 1 0 -3.5 0zM3648.25 897.4a1.75 1.75 0 1 0 3.5 0a1.75 1.75 0 1 0 -3.5 0zM3653.45 897.4a1.75 1.75 0 1 0 3.5 0a1.75 1.75 0 1 0 -3.5 0zM3660.58 897.4a1.75 1.75 0 1 0 3.5 0a1.75 1.75 0 1 0 -3.5 0zM3665.78 897.4a1.75 1.75 0 1 0 3.5 0a1.75 1.75 0 1 0 -3.5 0zM3672.9 897.4a1.75 1.75 0 1 0 3.5 0a1.75 1.75 0 1 0 -3.5 0zM3678.1 897.4a1.75 1.75 0 1 0 3.5 0a1.75 1.75 0 1 0 -3.5 0zM3623.6 925.4a1.75 1.75 0 1 0 3.5 0a1.75 1.75 0 1 0 -3.5 0zM3628.8 925.4a1.75 1.75 0 1 0 3.5 0a1.75 1.75 0 1 0 -3.5 0zM3635.93 925.4a1.75 1.75 0 1 0 3.5 0a1.75 1.75 0 1 0 -3.5 0zM3641.13 925.4a1.75 1.75 0 1 0 3.5 0a1.75 1.75 0 1 0 -3.5 0zM3648.25 925.4a1.75 1.75 0 1 0 3.5 0a1.75 1.75 0 1 0 -3.5 0zM3653.45 925.4a1.75 1.75 0 1 0 3.5 0a1.75 1.75 0 1 0 -3.5 0zM3660.58 925.4a1.75 1.75 0 1 0 3.5 0a1.75 1.75 0 1 0 -3.5 0zM3665.78 925.4a1.75 1.75 0 1 0 3.5 0a1.75 1.75 0 1 0 -3.5 0zM3672.9 925.4a1.75 1.75 0 1 0 3.5 0a1.75 1.75 0 1 0 -3.5 0zM3678.1 925.4a1.75 1.75 0 1 0 3.5 0a1.75 1.75 0 1 0 -3.5 0zM3623.6 953.4a1.75 1.75 0 1 0 3.5 0a1.75 1.75 0 1 0 -3.5 0zM3628.8 953.4a1.75 1.75 0 1 0 3.5 0a1.75 1.75 0 1 0 -3.5 0zM3635.93 953.4a1.75 1.75 0 1 0 3.5 0a1.75 1.75 0 1 0 -3.5 0zM3641.13 953.4a1.75 1.75 0 1 0 3.5 0a1.75 1.75 0 1 0 -3.5 0zM3648.25 953.4a1.75 1.75 0 1 0 3.5 0a1.75 1.75 0 1 0 -3.5 0zM3653.45 953.4a1.75 1.75 0 1 0 3.5 0a1.75 1.75 0 1 0 -3.5 0zM3660.58 953.4a1.75 1.75 0 1 0 3.5 0a1.75 1.75 0 1 0 -3.5 0zM3665.78 953.4a1.75 1.75 0 1 0 3.5 0a1.75 1.75 0 1 0 -3.5 0zM3672.9 953.4a1.75 1.75 0 1 0 3.5 0a1.75 1.75 0 1 0 -3.5 0zM3678.1 953.4a1.75 1.75 0 1 0 3.5 0a1.75 1.75 0 1 0 -3.5 0zM3623.6 981.4a1.75 1.75 0 1 0 3.5 0a1.75 1.75 0 1 0 -3.5 0zM3628.8 981.4a1.75 1.75 0 1 0 3.5 0a1.75 1.75 0 1 0 -3.5 0zM3635.93 981.4a1.75 1.75 0 1 0 3.5 0a1.75 1.75 0 1 0 -3.5 0zM3641.13 981.4a1.75 1.75 0 1 0 3.5 0a1.75 1.75 0 1 0 -3.5 0zM3648.25 981.4a1.75 1.75 0 1 0 3.5 0a1.75 1.75 0 1 0 -3.5 0zM3653.45 981.4a1.75 1.75 0 1 0 3.5 0a1.75 1.75 0 1 0 -3.5 0zM3660.58 981.4a1.75 1.75 0 1 0 3.5 0a1.75 1.75 0 1 0 -3.5 0zM3665.78 981.4a1.75 1.75 0 1 0 3.5 0a1.75 1.75 0 1 0 -3.5 0zM3672.9 981.4a1.75 1.75 0 1 0 3.5 0a1.75 1.75 0 1 0 -3.5 0zM3678.1 981.4a1.75 1.75 0 1 0 3.5 0a1.75 1.75 0 1 0 -3.5 0zM3623.6 1009.4a1.75 1.75 0 1 0 3.5 0a1.75 1.75 0 1 0 -3.5 0zM3628.8 1009.4a1.75 1.75 0 1 0 3.5 0a1.75 1.75 0 1 0 -3.5 0zM3635.93 1009.4a1.75 1.75 0 1 0 3.5 0a1.75 1.75 0 1 0 -3.5 0zM3641.13 1009.4a1.75 1.75 0 1 0 3.5 0a1.75 1.75 0 1 0 -3.5 0zM3648.25 1009.4a1.75 1.75 0 1 0 3.5 0a1.75 1.75 0 1 0 -3.5 0zM3653.45 1009.4a1.75 1.75 0 1 0 3.5 0a1.75 1.75 0 1 0 -3.5 0zM3660.58 1009.4a1.75 1.75 0 1 0 3.5 0a1.75 1.75 0 1 0 -3.5 0zM3665.78 1009.4a1.75 1.75 0 1 0 3.5 0a1.75 1.75 0 1 0 -3.5 0zM3672.9 1009.4a1.75 1.75 0 1 0 3.5 0a1.75 1.75 0 1 0 -3.5 0zM3678.1 1009.4a1.75 1.75 0 1 0 3.5 0a1.75 1.75 0 1 0 -3.5 0zM3623.6 1037.4a1.75 1.75 0 1 0 3.5 0a1.75 1.75 0 1 0 -3.5 0zM3628.8 1037.4a1.75 1.75 0 1 0 3.5 0a1.75 1.75 0 1 0 -3.5 0zM3635.93 1037.4a1.75 1.75 0 1 0 3.5 0a1.75 1.75 0 1 0 -3.5 0zM3641.13 1037.4a1.75 1.75 0 1 0 3.5 0a1.75 1.75 0 1 0 -3.5 0zM3648.25 1037.4a1.75 1.75 0 1 0 3.5 0a1.75 1.75 0 1 0 -3.5 0zM3653.45 1037.4a1.75 1.75 0 1 0 3.5 0a1.75 1.75 0 1 0 -3.5 0zM3660.58 1037.4a1.75 1.75 0 1 0 3.5 0a1.75 1.75 0 1 0 -3.5 0zM3665.78 1037.4a1.75 1.75 0 1 0 3.5 0a1.75 1.75 0 1 0 -3.5 0zM3672.9 1037.4a1.75 1.75 0 1 0 3.5 0a1.75 1.75 0 1 0 -3.5 0zM3678.1 1037.4a1.75 1.75 0 1 0 3.5 0a1.75 1.75 0 1 0 -3.5 0zM3623.6 1065.4a1.75 1.75 0 1 0 3.5 0a1.75 1.75 0 1 0 -3.5 0zM3628.8 1065.4a1.75 1.75 0 1 0 3.5 0a1.75 1.75 0 1 0 -3.5 0zM3635.93 1065.4a1.75 1.75 0 1 0 3.5 0a1.75 1.75 0 1 0 -3.5 0zM3641.13 1065.4a1.75 1.75 0 1 0 3.5 0a1.75 1.75 0 1 0 -3.5 0zM3648.25 1065.4a1.75 1.75 0 1 0 3.5 0a1.75 1.75 0 1 0 -3.5 0zM3653.45 1065.4a1.75 1.75 0 1 0 3.5 0a1.75 1.75 0 1 0 -3.5 0zM3660.58 1065.4a1.75 1.75 0 1 0 3.5 0a1.75 1.75 0 1 0 -3.5 0zM3665.78 1065.4a1.75 1.75 0 1 0 3.5 0a1.75 1.75 0 1 0 -3.5 0zM3672.9 1065.4a1.75 1.75 0 1 0 3.5 0a1.75 1.75 0 1 0 -3.5 0zM3678.1 1065.4a1.75 1.75 0 1 0 3.5 0a1.75 1.75 0 1 0 -3.5 0zM3623.6 1093.4a1.75 1.75 0 1 0 3.5 0a1.75 1.75 0 1 0 -3.5 0zM3628.8 1093.4a1.75 1.75 0 1 0 3.5 0a1.75 1.75 0 1 0 -3.5 0zM3635.93 1093.4a1.75 1.75 0 1 0 3.5 0a1.75 1.75 0 1 0 -3.5 0zM3641.13 1093.4a1.75 1.75 0 1 0 3.5 0a1.75 1.75 0 1 0 -3.5 0zM3648.25 1093.4a1.75 1.75 0 1 0 3.5 0a1.75 1.75 0 1 0 -3.5 0zM3653.45 1093.4a1.75 1.75 0 1 0 3.5 0a1.75 1.75 0 1 0 -3.5 0zM3660.58 1093.4a1.75 1.75 0 1 0 3.5 0a1.75 1.75 0 1 0 -3.5 0zM3665.78 1093.4a1.75 1.75 0 1 0 3.5 0a1.75 1.75 0 1 0 -3.5 0zM3672.9 1093.4a1.75 1.75 0 1 0 3.5 0a1.75 1.75 0 1 0 -3.5 0zM3678.1 1093.4a1.75 1.75 0 1 0 3.5 0a1.75 1.75 0 1 0 -3.5 0zM3623.6 1121.4a1.75 1.75 0 1 0 3.5 0a1.75 1.75 0 1 0 -3.5 0zM3628.8 1121.4a1.75 1.75 0 1 0 3.5 0a1.75 1.75 0 1 0 -3.5 0zM3635.93 1121.4a1.75 1.75 0 1 0 3.5 0a1.75 1.75 0 1 0 -3.5 0zM3641.13 1121.4a1.75 1.75 0 1 0 3.5 0a1.75 1.75 0 1 0 -3.5 0zM3648.25 1121.4a1.75 1.75 0 1 0 3.5 0a1.75 1.75 0 1 0 -3.5 0zM3653.45 1121.4a1.75 1.75 0 1 0 3.5 0a1.75 1.75 0 1 0 -3.5 0zM3660.58 1121.4a1.75 1.75 0 1 0 3.5 0a1.75 1.75 0 1 0 -3.5 0zM3665.78 1121.4a1.75 1.75 0 1 0 3.5 0a1.75 1.75 0 1 0 -3.5 0zM3672.9 1121.4a1.75 1.75 0 1 0 3.5 0a1.75 1.75 0 1 0 -3.5 0zM3678.1 1121.4a1.75 1.75 0 1 0 3.5 0a1.75 1.75 0 1 0 -3.5 0zM3623.6 1149.4a1.75 1.75 0 1 0 3.5 0a1.75 1.75 0 1 0 -3.5 0zM3628.8 1149.4a1.75 1.75 0 1 0 3.5 0a1.75 1.75 0 1 0 -3.5 0zM3635.93 1149.4a1.75 1.75 0 1 0 3.5 0a1.75 1.75 0 1 0 -3.5 0zM3641.13 1149.4a1.75 1.75 0 1 0 3.5 0a1.75 1.75 0 1 0 -3.5 0zM3648.25 1149.4a1.75 1.75 0 1 0 3.5 0a1.75 1.75 0 1 0 -3.5 0zM3653.45 1149.4a1.75 1.75 0 1 0 3.5 0a1.75 1.75 0 1 0 -3.5 0zM3660.58 1149.4a1.75 1.75 0 1 0 3.5 0a1.75 1.75 0 1 0 -3.5 0zM3665.78 1149.4a1.75 1.75 0 1 0 3.5 0a1.75 1.75 0 1 0 -3.5 0zM3672.9 1149.4a1.75 1.75 0 1 0 3.5 0a1.75 1.75 0 1 0 -3.5 0zM3678.1 1149.4a1.75 1.75 0 1 0 3.5 0a1.75 1.75 0 1 0 -3.5 0zM3623.6 1177.4a1.75 1.75 0 1 0 3.5 0a1.75 1.75 0 1 0 -3.5 0zM3628.8 1177.4a1.75 1.75 0 1 0 3.5 0a1.75 1.75 0 1 0 -3.5 0zM3635.93 1177.4a1.75 1.75 0 1 0 3.5 0a1.75 1.75 0 1 0 -3.5 0zM3641.13 1177.4a1.75 1.75 0 1 0 3.5 0a1.75 1.75 0 1 0 -3.5 0zM3648.25 1177.4a1.75 1.75 0 1 0 3.5 0a1.75 1.75 0 1 0 -3.5 0zM3653.45 1177.4a1.75 1.75 0 1 0 3.5 0a1.75 1.75 0 1 0 -3.5 0zM3660.58 1177.4a1.75 1.75 0 1 0 3.5 0a1.75 1.75 0 1 0 -3.5 0zM3665.78 1177.4a1.75 1.75 0 1 0 3.5 0a1.75 1.75 0 1 0 -3.5 0zM3672.9 1177.4a1.75 1.75 0 1 0 3.5 0a1.75 1.75 0 1 0 -3.5 0zM3678.1 1177.4a1.75 1.75 0 1 0 3.5 0a1.75 1.75 0 1 0 -3.5 0zM3623.6 1205.4a1.75 1.75 0 1 0 3.5 0a1.75 1.75 0 1 0 -3.5 0zM3628.8 1205.4a1.75 1.75 0 1 0 3.5 0a1.75 1.75 0 1 0 -3.5 0zM3635.93 1205.4a1.75 1.75 0 1 0 3.5 0a1.75 1.75 0 1 0 -3.5 0zM3641.13 1205.4a1.75 1.75 0 1 0 3.5 0a1.75 1.75 0 1 0 -3.5 0zM3648.25 1205.4a1.75 1.75 0 1 0 3.5 0a1.75 1.75 0 1 0 -3.5 0zM3653.45 1205.4a1.75 1.75 0 1 0 3.5 0a1.75 1.75 0 1 0 -3.5 0zM3623.6 1233.4a1.75 1.75 0 1 0 3.5 0a1.75 1.75 0 1 0 -3.5 0zM3628.8 1233.4a1.75 1.75 0 1 0 3.5 0a1.75 1.75 0 1 0 -3.5 0zM3635.93 1233.4a1.75 1.75 0 1 0 3.5 0a1.75 1.75 0 1 0 -3.5 0zM3641.13 1233.4a1.75 1.75 0 1 0 3.5 0a1.75 1.75 0 1 0 -3.5 0zM3648.25 1233.4a1.75 1.75 0 1 0 3.5 0a1.75 1.75 0 1 0 -3.5 0zM3653.45 1233.4a1.75 1.75 0 1 0 3.5 0a1.75 1.75 0 1 0 -3.5 0zM3660.58 1233.4a1.75 1.75 0 1 0 3.5 0a1.75 1.75 0 1 0 -3.5 0zM3665.78 1233.4a1.75 1.75 0 1 0 3.5 0a1.75 1.75 0 1 0 -3.5 0zM3672.9 1233.4a1.75 1.75 0 1 0 3.5 0a1.75 1.75 0 1 0 -3.5 0zM3678.1 1233.4a1.75 1.75 0 1 0 3.5 0a1.75 1.75 0 1 0 -3.5 0zM3623.6 1261.4a1.75 1.75 0 1 0 3.5 0a1.75 1.75 0 1 0 -3.5 0zM3628.8 1261.4a1.75 1.75 0 1 0 3.5 0a1.75 1.75 0 1 0 -3.5 0zM3635.93 1261.4a1.75 1.75 0 1 0 3.5 0a1.75 1.75 0 1 0 -3.5 0zM3641.13 1261.4a1.75 1.75 0 1 0 3.5 0a1.75 1.75 0 1 0 -3.5 0zM3648.25 1261.4a1.75 1.75 0 1 0 3.5 0a1.75 1.75 0 1 0 -3.5 0zM3653.45 1261.4a1.75 1.75 0 1 0 3.5 0a1.75 1.75 0 1 0 -3.5 0zM3660.58 1261.4a1.75 1.75 0 1 0 3.5 0a1.75 1.75 0 1 0 -3.5 0zM3665.78 1261.4a1.75 1.75 0 1 0 3.5 0a1.75 1.75 0 1 0 -3.5 0zM3672.9 1261.4a1.75 1.75 0 1 0 3.5 0a1.75 1.75 0 1 0 -3.5 0zM3678.1 1261.4a1.75 1.75 0 1 0 3.5 0a1.75 1.75 0 1 0 -3.5 0zM3623.6 1289.4a1.75 1.75 0 1 0 3.5 0a1.75 1.75 0 1 0 -3.5 0zM3628.8 1289.4a1.75 1.75 0 1 0 3.5 0a1.75 1.75 0 1 0 -3.5 0zM3635.93 1289.4a1.75 1.75 0 1 0 3.5 0a1.75 1.75 0 1 0 -3.5 0zM3641.13 1289.4a1.75 1.75 0 1 0 3.5 0a1.75 1.75 0 1 0 -3.5 0zM3648.25 1289.4a1.75 1.75 0 1 0 3.5 0a1.75 1.75 0 1 0 -3.5 0zM3653.45 1289.4a1.75 1.75 0 1 0 3.5 0a1.75 1.75 0 1 0 -3.5 0zM3660.58 1289.4a1.75 1.75 0 1 0 3.5 0a1.75 1.75 0 1 0 -3.5 0zM3665.78 1289.4a1.75 1.75 0 1 0 3.5 0a1.75 1.75 0 1 0 -3.5 0zM3672.9 1289.4a1.75 1.75 0 1 0 3.5 0a1.75 1.75 0 1 0 -3.5 0zM3678.1 1289.4a1.75 1.75 0 1 0 3.5 0a1.75 1.75 0 1 0 -3.5 0zM3623.6 1317.4a1.75 1.75 0 1 0 3.5 0a1.75 1.75 0 1 0 -3.5 0zM3628.8 1317.4a1.75 1.75 0 1 0 3.5 0a1.75 1.75 0 1 0 -3.5 0zM3635.93 1317.4a1.75 1.75 0 1 0 3.5 0a1.75 1.75 0 1 0 -3.5 0zM3641.13 1317.4a1.75 1.75 0 1 0 3.5 0a1.75 1.75 0 1 0 -3.5 0zM3648.25 1317.4a1.75 1.75 0 1 0 3.5 0a1.75 1.75 0 1 0 -3.5 0zM3653.45 1317.4a1.75 1.75 0 1 0 3.5 0a1.75 1.75 0 1 0 -3.5 0zM3660.58 1317.4a1.75 1.75 0 1 0 3.5 0a1.75 1.75 0 1 0 -3.5 0zM3665.78 1317.4a1.75 1.75 0 1 0 3.5 0a1.75 1.75 0 1 0 -3.5 0zM3672.9 1317.4a1.75 1.75 0 1 0 3.5 0a1.75 1.75 0 1 0 -3.5 0zM3678.1 1317.4a1.75 1.75 0 1 0 3.5 0a1.75 1.75 0 1 0 -3.5 0zM3623.6 1345.4a1.75 1.75 0 1 0 3.5 0a1.75 1.75 0 1 0 -3.5 0zM3628.8 1345.4a1.75 1.75 0 1 0 3.5 0a1.75 1.75 0 1 0 -3.5 0zM3635.93 1345.4a1.75 1.75 0 1 0 3.5 0a1.75 1.75 0 1 0 -3.5 0zM3641.13 1345.4a1.75 1.75 0 1 0 3.5 0a1.75 1.75 0 1 0 -3.5 0zM3648.25 1345.4a1.75 1.75 0 1 0 3.5 0a1.75 1.75 0 1 0 -3.5 0zM3653.45 1345.4a1.75 1.75 0 1 0 3.5 0a1.75 1.75 0 1 0 -3.5 0zM3660.58 1345.4a1.75 1.75 0 1 0 3.5 0a1.75 1.75 0 1 0 -3.5 0zM3665.78 1345.4a1.75 1.75 0 1 0 3.5 0a1.75 1.75 0 1 0 -3.5 0zM3623.6 1373.4a1.75 1.75 0 1 0 3.5 0a1.75 1.75 0 1 0 -3.5 0zM3628.8 1373.4a1.75 1.75 0 1 0 3.5 0a1.75 1.75 0 1 0 -3.5 0zM3635.93 1373.4a1.75 1.75 0 1 0 3.5 0a1.75 1.75 0 1 0 -3.5 0zM3641.13 1373.4a1.75 1.75 0 1 0 3.5 0a1.75 1.75 0 1 0 -3.5 0zM3648.25 1373.4a1.75 1.75 0 1 0 3.5 0a1.75 1.75 0 1 0 -3.5 0zM3653.45 1373.4a1.75 1.75 0 1 0 3.5 0a1.75 1.75 0 1 0 -3.5 0zM3660.58 1373.4a1.75 1.75 0 1 0 3.5 0a1.75 1.75 0 1 0 -3.5 0zM3665.78 1373.4a1.75 1.75 0 1 0 3.5 0a1.75 1.75 0 1 0 -3.5 0zM3672.9 1373.4a1.75 1.75 0 1 0 3.5 0a1.75 1.75 0 1 0 -3.5 0zM3678.1 1373.4a1.75 1.75 0 1 0 3.5 0a1.75 1.75 0 1 0 -3.5 0zM3623.6 1401.4a1.75 1.75 0 1 0 3.5 0a1.75 1.75 0 1 0 -3.5 0zM3628.8 1401.4a1.75 1.75 0 1 0 3.5 0a1.75 1.75 0 1 0 -3.5 0zM3635.93 1401.4a1.75 1.75 0 1 0 3.5 0a1.75 1.75 0 1 0 -3.5 0zM3641.13 1401.4a1.75 1.75 0 1 0 3.5 0a1.75 1.75 0 1 0 -3.5 0zM3648.25 1401.4a1.75 1.75 0 1 0 3.5 0a1.75 1.75 0 1 0 -3.5 0zM3653.45 1401.4a1.75 1.75 0 1 0 3.5 0a1.75 1.75 0 1 0 -3.5 0zM3660.58 1401.4a1.75 1.75 0 1 0 3.5 0a1.75 1.75 0 1 0 -3.5 0zM3665.78 1401.4a1.75 1.75 0 1 0 3.5 0a1.75 1.75 0 1 0 -3.5 0zM3672.9 1401.4a1.75 1.75 0 1 0 3.5 0a1.75 1.75 0 1 0 -3.5 0zM3678.1 1401.4a1.75 1.75 0 1 0 3.5 0a1.75 1.75 0 1 0 -3.5 0zM3623.6 1429.4a1.75 1.75 0 1 0 3.5 0a1.75 1.75 0 1 0 -3.5 0zM3628.8 1429.4a1.75 1.75 0 1 0 3.5 0a1.75 1.75 0 1 0 -3.5 0zM3635.93 1429.4a1.75 1.75 0 1 0 3.5 0a1.75 1.75 0 1 0 -3.5 0zM3641.13 1429.4a1.75 1.75 0 1 0 3.5 0a1.75 1.75 0 1 0 -3.5 0zM3648.25 1429.4a1.75 1.75 0 1 0 3.5 0a1.75 1.75 0 1 0 -3.5 0zM3653.45 1429.4a1.75 1.75 0 1 0 3.5 0a1.75 1.75 0 1 0 -3.5 0zM3660.58 1429.4a1.75 1.75 0 1 0 3.5 0a1.75 1.75 0 1 0 -3.5 0zM3665.78 1429.4a1.75 1.75 0 1 0 3.5 0a1.75 1.75 0 1 0 -3.5 0zM3672.9 1429.4a1.75 1.75 0 1 0 3.5 0a1.75 1.75 0 1 0 -3.5 0zM3678.1 1429.4a1.75 1.75 0 1 0 3.5 0a1.75 1.75 0 1 0 -3.5 0zM3623.6 1457.4a1.75 1.75 0 1 0 3.5 0a1.75 1.75 0 1 0 -3.5 0zM3628.8 1457.4a1.75 1.75 0 1 0 3.5 0a1.75 1.75 0 1 0 -3.5 0zM3635.93 1457.4a1.75 1.75 0 1 0 3.5 0a1.75 1.75 0 1 0 -3.5 0zM3641.13 1457.4a1.75 1.75 0 1 0 3.5 0a1.75 1.75 0 1 0 -3.5 0zM3648.25 1457.4a1.75 1.75 0 1 0 3.5 0a1.75 1.75 0 1 0 -3.5 0zM3653.45 1457.4a1.75 1.75 0 1 0 3.5 0a1.75 1.75 0 1 0 -3.5 0zM3660.58 1457.4a1.75 1.75 0 1 0 3.5 0a1.75 1.75 0 1 0 -3.5 0zM3665.78 1457.4a1.75 1.75 0 1 0 3.5 0a1.75 1.75 0 1 0 -3.5 0zM3672.9 1457.4a1.75 1.75 0 1 0 3.5 0a1.75 1.75 0 1 0 -3.5 0zM3678.1 1457.4a1.75 1.75 0 1 0 3.5 0a1.75 1.75 0 1 0 -3.5 0zM3623.6 1485.4a1.75 1.75 0 1 0 3.5 0a1.75 1.75 0 1 0 -3.5 0zM3628.8 1485.4a1.75 1.75 0 1 0 3.5 0a1.75 1.75 0 1 0 -3.5 0zM3635.93 1485.4a1.75 1.75 0 1 0 3.5 0a1.75 1.75 0 1 0 -3.5 0zM3641.13 1485.4a1.75 1.75 0 1 0 3.5 0a1.75 1.75 0 1 0 -3.5 0zM3648.25 1485.4a1.75 1.75 0 1 0 3.5 0a1.75 1.75 0 1 0 -3.5 0zM3653.45 1485.4a1.75 1.75 0 1 0 3.5 0a1.75 1.75 0 1 0 -3.5 0zM3660.58 1485.4a1.75 1.75 0 1 0 3.5 0a1.75 1.75 0 1 0 -3.5 0zM3665.78 1485.4a1.75 1.75 0 1 0 3.5 0a1.75 1.75 0 1 0 -3.5 0zM3672.9 1485.4a1.75 1.75 0 1 0 3.5 0a1.75 1.75 0 1 0 -3.5 0zM3678.1 1485.4a1.75 1.75 0 1 0 3.5 0a1.75 1.75 0 1 0 -3.5 0zM3623.6 1513.4a1.75 1.75 0 1 0 3.5 0a1.75 1.75 0 1 0 -3.5 0zM3628.8 1513.4a1.75 1.75 0 1 0 3.5 0a1.75 1.75 0 1 0 -3.5 0zM3635.93 1513.4a1.75 1.75 0 1 0 3.5 0a1.75 1.75 0 1 0 -3.5 0zM3641.13 1513.4a1.75 1.75 0 1 0 3.5 0a1.75 1.75 0 1 0 -3.5 0zM3648.25 1513.4a1.75 1.75 0 1 0 3.5 0a1.75 1.75 0 1 0 -3.5 0zM3653.45 1513.4a1.75 1.75 0 1 0 3.5 0a1.75 1.75 0 1 0 -3.5 0zM3660.58 1513.4a1.75 1.75 0 1 0 3.5 0a1.75 1.75 0 1 0 -3.5 0zM3665.78 1513.4a1.75 1.75 0 1 0 3.5 0a1.75 1.75 0 1 0 -3.5 0zM3672.9 1513.4a1.75 1.75 0 1 0 3.5 0a1.75 1.75 0 1 0 -3.5 0zM3678.1 1513.4a1.75 1.75 0 1 0 3.5 0a1.75 1.75 0 1 0 -3.5 0zM3623.6 1541.4a1.75 1.75 0 1 0 3.5 0a1.75 1.75 0 1 0 -3.5 0zM3628.8 1541.4a1.75 1.75 0 1 0 3.5 0a1.75 1.75 0 1 0 -3.5 0zM3635.93 1541.4a1.75 1.75 0 1 0 3.5 0a1.75 1.75 0 1 0 -3.5 0zM3641.13 1541.4a1.75 1.75 0 1 0 3.5 0a1.75 1.75 0 1 0 -3.5 0zM3648.25 1541.4a1.75 1.75 0 1 0 3.5 0a1.75 1.75 0 1 0 -3.5 0zM3653.45 1541.4a1.75 1.75 0 1 0 3.5 0a1.75 1.75 0 1 0 -3.5 0zM3660.58 1541.4a1.75 1.75 0 1 0 3.5 0a1.75 1.75 0 1 0 -3.5 0zM3665.78 1541.4a1.75 1.75 0 1 0 3.5 0a1.75 1.75 0 1 0 -3.5 0zM3623.6 1569.4a1.75 1.75 0 1 0 3.5 0a1.75 1.75 0 1 0 -3.5 0zM3628.8 1569.4a1.75 1.75 0 1 0 3.5 0a1.75 1.75 0 1 0 -3.5 0zM3635.93 1569.4a1.75 1.75 0 1 0 3.5 0a1.75 1.75 0 1 0 -3.5 0zM3641.13 1569.4a1.75 1.75 0 1 0 3.5 0a1.75 1.75 0 1 0 -3.5 0zM3648.25 1569.4a1.75 1.75 0 1 0 3.5 0a1.75 1.75 0 1 0 -3.5 0zM3653.45 1569.4a1.75 1.75 0 1 0 3.5 0a1.75 1.75 0 1 0 -3.5 0zM3660.58 1569.4a1.75 1.75 0 1 0 3.5 0a1.75 1.75 0 1 0 -3.5 0zM3665.78 1569.4a1.75 1.75 0 1 0 3.5 0a1.75 1.75 0 1 0 -3.5 0zM3672.9 1569.4a1.75 1.75 0 1 0 3.5 0a1.75 1.75 0 1 0 -3.5 0zM3678.1 1569.4a1.75 1.75 0 1 0 3.5 0a1.75 1.75 0 1 0 -3.5 0zM3623.6 1597.4a1.75 1.75 0 1 0 3.5 0a1.75 1.75 0 1 0 -3.5 0zM3628.8 1597.4a1.75 1.75 0 1 0 3.5 0a1.75 1.75 0 1 0 -3.5 0zM3635.93 1597.4a1.75 1.75 0 1 0 3.5 0a1.75 1.75 0 1 0 -3.5 0zM3641.13 1597.4a1.75 1.75 0 1 0 3.5 0a1.75 1.75 0 1 0 -3.5 0zM3648.25 1597.4a1.75 1.75 0 1 0 3.5 0a1.75 1.75 0 1 0 -3.5 0zM3653.45 1597.4a1.75 1.75 0 1 0 3.5 0a1.75 1.75 0 1 0 -3.5 0zM3660.58 1597.4a1.75 1.75 0 1 0 3.5 0a1.75 1.75 0 1 0 -3.5 0zM3665.78 1597.4a1.75 1.75 0 1 0 3.5 0a1.75 1.75 0 1 0 -3.5 0zM3623.6 1625.4a1.75 1.75 0 1 0 3.5 0a1.75 1.75 0 1 0 -3.5 0zM3628.8 1625.4a1.75 1.75 0 1 0 3.5 0a1.75 1.75 0 1 0 -3.5 0zM3635.93 1625.4a1.75 1.75 0 1 0 3.5 0a1.75 1.75 0 1 0 -3.5 0zM3641.13 1625.4a1.75 1.75 0 1 0 3.5 0a1.75 1.75 0 1 0 -3.5 0zM3648.25 1625.4a1.75 1.75 0 1 0 3.5 0a1.75 1.75 0 1 0 -3.5 0zM3653.45 1625.4a1.75 1.75 0 1 0 3.5 0a1.75 1.75 0 1 0 -3.5 0zM3660.58 1625.4a1.75 1.75 0 1 0 3.5 0a1.75 1.75 0 1 0 -3.5 0zM3665.78 1625.4a1.75 1.75 0 1 0 3.5 0a1.75 1.75 0 1 0 -3.5 0zM3672.9 1625.4a1.75 1.75 0 1 0 3.5 0a1.75 1.75 0 1 0 -3.5 0zM3678.1 1625.4a1.75 1.75 0 1 0 3.5 0a1.75 1.75 0 1 0 -3.5 0zM3623.6 1653.4a1.75 1.75 0 1 0 3.5 0a1.75 1.75 0 1 0 -3.5 0zM3628.8 1653.4a1.75 1.75 0 1 0 3.5 0a1.75 1.75 0 1 0 -3.5 0zM3635.93 1653.4a1.75 1.75 0 1 0 3.5 0a1.75 1.75 0 1 0 -3.5 0zM3641.13 1653.4a1.75 1.75 0 1 0 3.5 0a1.75 1.75 0 1 0 -3.5 0zM3648.25 1653.4a1.75 1.75 0 1 0 3.5 0a1.75 1.75 0 1 0 -3.5 0zM3653.45 1653.4a1.75 1.75 0 1 0 3.5 0a1.75 1.75 0 1 0 -3.5 0zM3660.58 1653.4a1.75 1.75 0 1 0 3.5 0a1.75 1.75 0 1 0 -3.5 0zM3665.78 1653.4a1.75 1.75 0 1 0 3.5 0a1.75 1.75 0 1 0 -3.5 0zM3672.9 1653.4a1.75 1.75 0 1 0 3.5 0a1.75 1.75 0 1 0 -3.5 0zM3678.1 1653.4a1.75 1.75 0 1 0 3.5 0a1.75 1.75 0 1 0 -3.5 0zM3623.6 1681.4a1.75 1.75 0 1 0 3.5 0a1.75 1.75 0 1 0 -3.5 0zM3628.8 1681.4a1.75 1.75 0 1 0 3.5 0a1.75 1.75 0 1 0 -3.5 0zM3635.93 1681.4a1.75 1.75 0 1 0 3.5 0a1.75 1.75 0 1 0 -3.5 0zM3641.13 1681.4a1.75 1.75 0 1 0 3.5 0a1.75 1.75 0 1 0 -3.5 0zM3648.25 1681.4a1.75 1.75 0 1 0 3.5 0a1.75 1.75 0 1 0 -3.5 0zM3653.45 1681.4a1.75 1.75 0 1 0 3.5 0a1.75 1.75 0 1 0 -3.5 0zM3660.58 1681.4a1.75 1.75 0 1 0 3.5 0a1.75 1.75 0 1 0 -3.5 0zM3665.78 1681.4a1.75 1.75 0 1 0 3.5 0a1.75 1.75 0 1 0 -3.5 0zM3672.9 1681.4a1.75 1.75 0 1 0 3.5 0a1.75 1.75 0 1 0 -3.5 0zM3678.1 1681.4a1.75 1.75 0 1 0 3.5 0a1.75 1.75 0 1 0 -3.5 0zM3623.6 1709.4a1.75 1.75 0 1 0 3.5 0a1.75 1.75 0 1 0 -3.5 0zM3628.8 1709.4a1.75 1.75 0 1 0 3.5 0a1.75 1.75 0 1 0 -3.5 0zM3635.93 1709.4a1.75 1.75 0 1 0 3.5 0a1.75 1.75 0 1 0 -3.5 0zM3641.13 1709.4a1.75 1.75 0 1 0 3.5 0a1.75 1.75 0 1 0 -3.5 0zM3648.25 1709.4a1.75 1.75 0 1 0 3.5 0a1.75 1.75 0 1 0 -3.5 0zM3653.45 1709.4a1.75 1.75 0 1 0 3.5 0a1.75 1.75 0 1 0 -3.5 0zM3660.58 1709.4a1.75 1.75 0 1 0 3.5 0a1.75 1.75 0 1 0 -3.5 0zM3665.78 1709.4a1.75 1.75 0 1 0 3.5 0a1.75 1.75 0 1 0 -3.5 0zM3672.9 1709.4a1.75 1.75 0 1 0 3.5 0a1.75 1.75 0 1 0 -3.5 0zM3678.1 1709.4a1.75 1.75 0 1 0 3.5 0a1.75 1.75 0 1 0 -3.5 0zM3623.6 1737.4a1.75 1.75 0 1 0 3.5 0a1.75 1.75 0 1 0 -3.5 0zM3628.8 1737.4a1.75 1.75 0 1 0 3.5 0a1.75 1.75 0 1 0 -3.5 0zM3635.93 1737.4a1.75 1.75 0 1 0 3.5 0a1.75 1.75 0 1 0 -3.5 0zM3641.13 1737.4a1.75 1.75 0 1 0 3.5 0a1.75 1.75 0 1 0 -3.5 0zM3648.25 1737.4a1.75 1.75 0 1 0 3.5 0a1.75 1.75 0 1 0 -3.5 0zM3653.45 1737.4a1.75 1.75 0 1 0 3.5 0a1.75 1.75 0 1 0 -3.5 0zM3660.58 1737.4a1.75 1.75 0 1 0 3.5 0a1.75 1.75 0 1 0 -3.5 0zM3665.78 1737.4a1.75 1.75 0 1 0 3.5 0a1.75 1.75 0 1 0 -3.5 0zM3672.9 1737.4a1.75 1.75 0 1 0 3.5 0a1.75 1.75 0 1 0 -3.5 0zM3678.1 1737.4a1.75 1.75 0 1 0 3.5 0a1.75 1.75 0 1 0 -3.5 0zM3623.6 1765.4a1.75 1.75 0 1 0 3.5 0a1.75 1.75 0 1 0 -3.5 0zM3628.8 1765.4a1.75 1.75 0 1 0 3.5 0a1.75 1.75 0 1 0 -3.5 0zM3635.93 1765.4a1.75 1.75 0 1 0 3.5 0a1.75 1.75 0 1 0 -3.5 0zM3641.13 1765.4a1.75 1.75 0 1 0 3.5 0a1.75 1.75 0 1 0 -3.5 0zM3648.25 1765.4a1.75 1.75 0 1 0 3.5 0a1.75 1.75 0 1 0 -3.5 0zM3653.45 1765.4a1.75 1.75 0 1 0 3.5 0a1.75 1.75 0 1 0 -3.5 0zM3660.58 1765.4a1.75 1.75 0 1 0 3.5 0a1.75 1.75 0 1 0 -3.5 0zM3665.78 1765.4a1.75 1.75 0 1 0 3.5 0a1.75 1.75 0 1 0 -3.5 0zM3672.9 1765.4a1.75 1.75 0 1 0 3.5 0a1.75 1.75 0 1 0 -3.5 0zM3678.1 1765.4a1.75 1.75 0 1 0 3.5 0a1.75 1.75 0 1 0 -3.5 0zM3623.6 1793.4a1.75 1.75 0 1 0 3.5 0a1.75 1.75 0 1 0 -3.5 0zM3628.8 1793.4a1.75 1.75 0 1 0 3.5 0a1.75 1.75 0 1 0 -3.5 0zM3635.93 1793.4a1.75 1.75 0 1 0 3.5 0a1.75 1.75 0 1 0 -3.5 0zM3641.13 1793.4a1.75 1.75 0 1 0 3.5 0a1.75 1.75 0 1 0 -3.5 0zM3648.25 1793.4a1.75 1.75 0 1 0 3.5 0a1.75 1.75 0 1 0 -3.5 0zM3653.45 1793.4a1.75 1.75 0 1 0 3.5 0a1.75 1.75 0 1 0 -3.5 0zM3660.58 1793.4a1.75 1.75 0 1 0 3.5 0a1.75 1.75 0 1 0 -3.5 0zM3665.78 1793.4a1.75 1.75 0 1 0 3.5 0a1.75 1.75 0 1 0 -3.5 0zM3672.9 1793.4a1.75 1.75 0 1 0 3.5 0a1.75 1.75 0 1 0 -3.5 0zM3678.1 1793.4a1.75 1.75 0 1 0 3.5 0a1.75 1.75 0 1 0 -3.5 0zM3623.6 1821.4a1.75 1.75 0 1 0 3.5 0a1.75 1.75 0 1 0 -3.5 0zM3628.8 1821.4a1.75 1.75 0 1 0 3.5 0a1.75 1.75 0 1 0 -3.5 0zM3635.93 1821.4a1.75 1.75 0 1 0 3.5 0a1.75 1.75 0 1 0 -3.5 0zM3641.13 1821.4a1.75 1.75 0 1 0 3.5 0a1.75 1.75 0 1 0 -3.5 0zM3648.25 1821.4a1.75 1.75 0 1 0 3.5 0a1.75 1.75 0 1 0 -3.5 0zM3653.45 1821.4a1.75 1.75 0 1 0 3.5 0a1.75 1.75 0 1 0 -3.5 0zM3660.58 1821.4a1.75 1.75 0 1 0 3.5 0a1.75 1.75 0 1 0 -3.5 0zM3665.78 1821.4a1.75 1.75 0 1 0 3.5 0a1.75 1.75 0 1 0 -3.5 0zM3672.9 1821.4a1.75 1.75 0 1 0 3.5 0a1.75 1.75 0 1 0 -3.5 0zM3678.1 1821.4a1.75 1.75 0 1 0 3.5 0a1.75 1.75 0 1 0 -3.5 0zM3623.6 1849.4a1.75 1.75 0 1 0 3.5 0a1.75 1.75 0 1 0 -3.5 0zM3628.8 1849.4a1.75 1.75 0 1 0 3.5 0a1.75 1.75 0 1 0 -3.5 0zM3635.93 1849.4a1.75 1.75 0 1 0 3.5 0a1.75 1.75 0 1 0 -3.5 0zM3641.13 1849.4a1.75 1.75 0 1 0 3.5 0a1.75 1.75 0 1 0 -3.5 0zM3648.25 1849.4a1.75 1.75 0 1 0 3.5 0a1.75 1.75 0 1 0 -3.5 0zM3653.45 1849.4a1.75 1.75 0 1 0 3.5 0a1.75 1.75 0 1 0 -3.5 0zM3660.58 1849.4a1.75 1.75 0 1 0 3.5 0a1.75 1.75 0 1 0 -3.5 0zM3665.78 1849.4a1.75 1.75 0 1 0 3.5 0a1.75 1.75 0 1 0 -3.5 0zM3672.9 1849.4a1.75 1.75 0 1 0 3.5 0a1.75 1.75 0 1 0 -3.5 0zM3678.1 1849.4a1.75 1.75 0 1 0 3.5 0a1.75 1.75 0 1 0 -3.5 0zM3623.6 1877.4a1.75 1.75 0 1 0 3.5 0a1.75 1.75 0 1 0 -3.5 0zM3628.8 1877.4a1.75 1.75 0 1 0 3.5 0a1.75 1.75 0 1 0 -3.5 0zM3635.93 1877.4a1.75 1.75 0 1 0 3.5 0a1.75 1.75 0 1 0 -3.5 0zM3641.13 1877.4a1.75 1.75 0 1 0 3.5 0a1.75 1.75 0 1 0 -3.5 0zM3648.25 1877.4a1.75 1.75 0 1 0 3.5 0a1.75 1.75 0 1 0 -3.5 0zM3653.45 1877.4a1.75 1.75 0 1 0 3.5 0a1.75 1.75 0 1 0 -3.5 0zM3660.58 1877.4a1.75 1.75 0 1 0 3.5 0a1.75 1.75 0 1 0 -3.5 0zM3665.78 1877.4a1.75 1.75 0 1 0 3.5 0a1.75 1.75 0 1 0 -3.5 0zM3672.9 1877.4a1.75 1.75 0 1 0 3.5 0a1.75 1.75 0 1 0 -3.5 0zM3678.1 1877.4a1.75 1.75 0 1 0 3.5 0a1.75 1.75 0 1 0 -3.5 0zM3623.6 1905.4a1.75 1.75 0 1 0 3.5 0a1.75 1.75 0 1 0 -3.5 0zM3628.8 1905.4a1.75 1.75 0 1 0 3.5 0a1.75 1.75 0 1 0 -3.5 0zM3635.93 1905.4a1.75 1.75 0 1 0 3.5 0a1.75 1.75 0 1 0 -3.5 0zM3641.13 1905.4a1.75 1.75 0 1 0 3.5 0a1.75 1.75 0 1 0 -3.5 0zM3648.25 1905.4a1.75 1.75 0 1 0 3.5 0a1.75 1.75 0 1 0 -3.5 0zM3653.45 1905.4a1.75 1.75 0 1 0 3.5 0a1.75 1.75 0 1 0 -3.5 0zM3660.58 1905.4a1.75 1.75 0 1 0 3.5 0a1.75 1.75 0 1 0 -3.5 0zM3665.78 1905.4a1.75 1.75 0 1 0 3.5 0a1.75 1.75 0 1 0 -3.5 0zM3672.9 1905.4a1.75 1.75 0 1 0 3.5 0a1.75 1.75 0 1 0 -3.5 0zM3678.1 1905.4a1.75 1.75 0 1 0 3.5 0a1.75 1.75 0 1 0 -3.5 0zM3623.6 1933.4a1.75 1.75 0 1 0 3.5 0a1.75 1.75 0 1 0 -3.5 0zM3628.8 1933.4a1.75 1.75 0 1 0 3.5 0a1.75 1.75 0 1 0 -3.5 0zM3635.93 1933.4a1.75 1.75 0 1 0 3.5 0a1.75 1.75 0 1 0 -3.5 0zM3641.13 1933.4a1.75 1.75 0 1 0 3.5 0a1.75 1.75 0 1 0 -3.5 0zM3648.25 1933.4a1.75 1.75 0 1 0 3.5 0a1.75 1.75 0 1 0 -3.5 0zM3653.45 1933.4a1.75 1.75 0 1 0 3.5 0a1.75 1.75 0 1 0 -3.5 0zM3660.58 1933.4a1.75 1.75 0 1 0 3.5 0a1.75 1.75 0 1 0 -3.5 0zM3665.78 1933.4a1.75 1.75 0 1 0 3.5 0a1.75 1.75 0 1 0 -3.5 0zM3672.9 1933.4a1.75 1.75 0 1 0 3.5 0a1.75 1.75 0 1 0 -3.5 0zM3678.1 1933.4a1.75 1.75 0 1 0 3.5 0a1.75 1.75 0 1 0 -3.5 0zM3623.6 1961.4a1.75 1.75 0 1 0 3.5 0a1.75 1.75 0 1 0 -3.5 0zM3628.8 1961.4a1.75 1.75 0 1 0 3.5 0a1.75 1.75 0 1 0 -3.5 0zM3635.93 1961.4a1.75 1.75 0 1 0 3.5 0a1.75 1.75 0 1 0 -3.5 0zM3641.13 1961.4a1.75 1.75 0 1 0 3.5 0a1.75 1.75 0 1 0 -3.5 0zM3648.25 1961.4a1.75 1.75 0 1 0 3.5 0a1.75 1.75 0 1 0 -3.5 0zM3653.45 1961.4a1.75 1.75 0 1 0 3.5 0a1.75 1.75 0 1 0 -3.5 0zM3660.58 1961.4a1.75 1.75 0 1 0 3.5 0a1.75 1.75 0 1 0 -3.5 0zM3665.78 1961.4a1.75 1.75 0 1 0 3.5 0a1.75 1.75 0 1 0 -3.5 0zM3672.9 1961.4a1.75 1.75 0 1 0 3.5 0a1.75 1.75 0 1 0 -3.5 0zM3678.1 1961.4a1.75 1.75 0 1 0 3.5 0a1.75 1.75 0 1 0 -3.5 0zM3623.6 1989.4a1.75 1.75 0 1 0 3.5 0a1.75 1.75 0 1 0 -3.5 0zM3628.8 1989.4a1.75 1.75 0 1 0 3.5 0a1.75 1.75 0 1 0 -3.5 0zM3635.93 1989.4a1.75 1.75 0 1 0 3.5 0a1.75 1.75 0 1 0 -3.5 0zM3641.13 1989.4a1.75 1.75 0 1 0 3.5 0a1.75 1.75 0 1 0 -3.5 0zM3648.25 1989.4a1.75 1.75 0 1 0 3.5 0a1.75 1.75 0 1 0 -3.5 0zM3653.45 1989.4a1.75 1.75 0 1 0 3.5 0a1.75 1.75 0 1 0 -3.5 0zM3660.58 1989.4a1.75 1.75 0 1 0 3.5 0a1.75 1.75 0 1 0 -3.5 0zM3665.78 1989.4a1.75 1.75 0 1 0 3.5 0a1.75 1.75 0 1 0 -3.5 0zM3672.9 1989.4a1.75 1.75 0 1 0 3.5 0a1.75 1.75 0 1 0 -3.5 0zM3678.1 1989.4a1.75 1.75 0 1 0 3.5 0a1.75 1.75 0 1 0 -3.5 0zM3623.6 2017.4a1.75 1.75 0 1 0 3.5 0a1.75 1.75 0 1 0 -3.5 0zM3628.8 2017.4a1.75 1.75 0 1 0 3.5 0a1.75 1.75 0 1 0 -3.5 0zM3635.93 2017.4a1.75 1.75 0 1 0 3.5 0a1.75 1.75 0 1 0 -3.5 0zM3641.13 2017.4a1.75 1.75 0 1 0 3.5 0a1.75 1.75 0 1 0 -3.5 0zM3648.25 2017.4a1.75 1.75 0 1 0 3.5 0a1.75 1.75 0 1 0 -3.5 0zM3653.45 2017.4a1.75 1.75 0 1 0 3.5 0a1.75 1.75 0 1 0 -3.5 0zM3660.58 2017.4a1.75 1.75 0 1 0 3.5 0a1.75 1.75 0 1 0 -3.5 0zM3665.78 2017.4a1.75 1.75 0 1 0 3.5 0a1.75 1.75 0 1 0 -3.5 0zM3672.9 2017.4a1.75 1.75 0 1 0 3.5 0a1.75 1.75 0 1 0 -3.5 0zM3678.1 2017.4a1.75 1.75 0 1 0 3.5 0a1.75 1.75 0 1 0 -3.5 0zM3623.6 2045.4a1.75 1.75 0 1 0 3.5 0a1.75 1.75 0 1 0 -3.5 0zM3628.8 2045.4a1.75 1.75 0 1 0 3.5 0a1.75 1.75 0 1 0 -3.5 0zM3635.93 2045.4a1.75 1.75 0 1 0 3.5 0a1.75 1.75 0 1 0 -3.5 0zM3641.13 2045.4a1.75 1.75 0 1 0 3.5 0a1.75 1.75 0 1 0 -3.5 0zM3648.25 2045.4a1.75 1.75 0 1 0 3.5 0a1.75 1.75 0 1 0 -3.5 0zM3653.45 2045.4a1.75 1.75 0 1 0 3.5 0a1.75 1.75 0 1 0 -3.5 0zM3660.58 2045.4a1.75 1.75 0 1 0 3.5 0a1.75 1.75 0 1 0 -3.5 0zM3665.78 2045.4a1.75 1.75 0 1 0 3.5 0a1.75 1.75 0 1 0 -3.5 0zM3672.9 2045.4a1.75 1.75 0 1 0 3.5 0a1.75 1.75 0 1 0 -3.5 0zM3678.1 2045.4a1.75 1.75 0 1 0 3.5 0a1.75 1.75 0 1 0 -3.5 0zM3623.6 2073.4a1.75 1.75 0 1 0 3.5 0a1.75 1.75 0 1 0 -3.5 0zM3628.8 2073.4a1.75 1.75 0 1 0 3.5 0a1.75 1.75 0 1 0 -3.5 0zM3635.93 2073.4a1.75 1.75 0 1 0 3.5 0a1.75 1.75 0 1 0 -3.5 0zM3641.13 2073.4a1.75 1.75 0 1 0 3.5 0a1.75 1.75 0 1 0 -3.5 0zM3648.25 2073.4a1.75 1.75 0 1 0 3.5 0a1.75 1.75 0 1 0 -3.5 0zM3653.45 2073.4a1.75 1.75 0 1 0 3.5 0a1.75 1.75 0 1 0 -3.5 0zM3660.58 2073.4a1.75 1.75 0 1 0 3.5 0a1.75 1.75 0 1 0 -3.5 0zM3665.78 2073.4a1.75 1.75 0 1 0 3.5 0a1.75 1.75 0 1 0 -3.5 0zM3672.9 2073.4a1.75 1.75 0 1 0 3.5 0a1.75 1.75 0 1 0 -3.5 0zM3678.1 2073.4a1.75 1.75 0 1 0 3.5 0a1.75 1.75 0 1 0 -3.5 0zM3623.6 2101.4a1.75 1.75 0 1 0 3.5 0a1.75 1.75 0 1 0 -3.5 0zM3628.8 2101.4a1.75 1.75 0 1 0 3.5 0a1.75 1.75 0 1 0 -3.5 0zM3635.93 2101.4a1.75 1.75 0 1 0 3.5 0a1.75 1.75 0 1 0 -3.5 0zM3641.13 2101.4a1.75 1.75 0 1 0 3.5 0a1.75 1.75 0 1 0 -3.5 0zM3648.25 2101.4a1.75 1.75 0 1 0 3.5 0a1.75 1.75 0 1 0 -3.5 0zM3653.45 2101.4a1.75 1.75 0 1 0 3.5 0a1.75 1.75 0 1 0 -3.5 0zM3660.58 2101.4a1.75 1.75 0 1 0 3.5 0a1.75 1.75 0 1 0 -3.5 0zM3665.78 2101.4a1.75 1.75 0 1 0 3.5 0a1.75 1.75 0 1 0 -3.5 0zM3672.9 2101.4a1.75 1.75 0 1 0 3.5 0a1.75 1.75 0 1 0 -3.5 0zM3678.1 2101.4a1.75 1.75 0 1 0 3.5 0a1.75 1.75 0 1 0 -3.5 0z"/>
<path fill="#a8ca7e" d="M3660.58 449.4a1.75 1.75 0 1 0 3.5 0a1.75 1.75 0 1 0 -3.5 0zM3665.78 444.7a1.75 1.75 0 1 0 3.5 0a1.75 1.75 0 1 0 -3.5 0zM3665.78 449.4a1.75 1.75 0 1 0 3.5 0a1.75 1.75 0 1 0 -3.5 0zM3672.9 449.4a1.75 1.75 0 1 0 3.5 0a1.75 1.75 0 1 0 -3.5 0zM3678.1 449.4a1.75 1.75 0 1 0 3.5 0a1.75 1.75 0 1 0 -3.5 0zM3672.9 477.4a1.75 1.75 0 1 0 3.5 0a1.75 1.75 0 1 0 -3.5 0zM3678.1 477.4a1.75 1.75 0 1 0 3.5 0a1.75 1.75 0 1 0 -3.5 0z"/>
<path fill="#de8a55" d="M3685.22 444.7a1.75 1.75 0 1 0 3.5 0a1.75 1.75 0 1 0 -3.5 0zM3685.22 449.4a1.75 1.75 0 1 0 3.5 0a1.75 1.75 0 1 0 -3.5 0zM3690.42 439.9a1.75 1.75 0 1 0 3.5 0a1.75 1.75 0 1 0 -3.5 0zM3690.42 444.7a1.75 1.75 0 1 0 3.5 0a1.75 1.75 0 1 0 -3.5 0zM3690.42 449.4a1.75 1.75 0 1 0 3.5 0a1.75 1.75 0 1 0 -3.5 0zM3685.22 472.7a1.75 1.75 0 1 0 3.5 0a1.75 1.75 0 1 0 -3.5 0zM3685.22 477.4a1.75 1.75 0 1 0 3.5 0a1.75 1.75 0 1 0 -3.5 0zM3690.42 467.9a1.75 1.75 0 1 0 3.5 0a1.75 1.75 0 1 0 -3.5 0zM3690.42 472.7a1.75 1.75 0 1 0 3.5 0a1.75 1.75 0 1 0 -3.5 0zM3690.42 477.4a1.75 1.75 0 1 0 3.5 0a1.75 1.75 0 1 0 -3.5 0z"/>
<path fill="#de4e4e" d="M3660.58 477.4a1.75 1.75 0 1 0 3.5 0a1.75 1.75 0 1 0 -3.5 0zM3665.78 463.2a1.75 1.75 0 1 0 3.5 0a1.75 1.75 0 1 0 -3.5 0zM3665.78 467.9a1.75 1.75 0 1 0 3.5 0a1.75 1.75 0 1 0 -3.5 0zM3665.78 472.7a1.75 1.75 0 1 0 3.5 0a1.75 1.75 0 1 0 -3.5 0zM3665.78 477.4a1.75 1.75 0 1 0 3.5 0a1.75 1.75 0 1 0 -3.5 0z"/>
<path fill="#8c4142" d="M1109.51 995.2a1.75 1.75 0 1 0 3.5 0a1.75 1.75 0 1 0 -3.5 0zM1109.51 999.9a1.75 1.75 0 1 0 3.5 0a1.75 1.75 0 1 0 -3.5 0zM1109.51 1004.7a1.75 1.75 0 1 0 3.5 0a1.75 1.75 0 1 0 -3.5 0zM1109.51 1009.4a1.75 1.75 0 1 0 3.5 0a1.75 1.75 0 1 0 -3.5 0zM1114.71 995.2a1.75 1.75 0 1 0 3.5 0a1.75 1.75 0 1 0 -3.5 0zM1114.71 999.9a1.75 1.75 0 1 0 3.5 0a1.75 1.75 0 1 0 -3.5 0zM1114.71 1004.7a1.75 1.75 0 1 0 3.5 0a1.75 1.75 0 1 0 -3.5 0zM1114.71 1009.4a1.75 1.75 0 1 0 3.5 0a1.75 1.75 0 1 0 -3.5 0zM1121.83 995.2a1.75 1.75 0 1 0 3.5 0a1.75 1.75 0 1 0 -3.5 0zM1121.83 999.9a1.75 1.75 0 1 0 3.5 0a1.75 1.75 0 1 0 -3.5 0zM1121.83 1004.7a1.75 1.75 0 1 0 3.5 0a1.75 1.75 0 1 0 -3.5 0zM1121.83 1009.4a1.75 1.75 0 1 0 3.5 0a1.75 1.75 0 1 0 -3.5 0zM1127.03 995.2a1.75 1.75 0 1 0 3.5 0a1.75 1.75 0 1 0 -3.5 0zM1127.03 999.9a1.75 1.75 0 1 0 3.5 0a1.75 1.75 0 1 0 -3.5 0zM1127.03 1004.7a1.75 1.75 0 1 0 3.5 0a1.75 1.75 0 1 0 -3.5 0zM1127.03 1009.4a1.75 1.75 0 1 0 3.5 0a1.75 1.75 0 1 0 -3.5 0zM1134.16 995.2a1.75 1.75 0 1 0 3.5 0a1.75 1.75 0 1 0 -3.5 0zM1134.16 999.9a1.75 1.75 0 1 0 3.5 0a1.75 1.75 0 1 0 -3.5 0zM1134.16 1004.7a1.75 1.75 0 1 0 3.5 0a1.75 1.75 0 1 0 -3.5 0zM1134.16 1009.4a1.75 1.75 0 1 0 3.5 0a1.75 1.75 0 1 0 -3.5 0zM1139.36 995.2a1.75 1.75 0 1 0 3.5 0a1.75 1.75 0 1 0 -3.5 0zM1139.36 999.9a1.75 1.75 0 1 0 3.5 0a1.75 1.75 0 1 0 -3.5 0zM1139.36 1004.7a1.75 1.75 0 1 0 3.5 0a1.75 1.75 0 1 0 -3.5 0zM1139.36 1009.4a1.75 1.75 0 1 0 3.5 0a1.75 1.75 0 1 0 -3.5 0z"/>
<path fill="#bf575f" d="M1109.51 967.2a1.75 1.75 0 1 0 3.5 0a1.75 1.75 0 1 0 -3.5 0zM1109.51 971.9a1.75 1.75 0 1 0 3.5 0a1.75 1.75 0 1 0 -3.5 0zM1109.51 976.7a1.75 1.75 0 1 0 3.5 0a1.75 1.75 0 1 0 -3.5 0zM1109.51 981.4a1.75 1.75 0 1 0 3.5 0a1.75 1.75 0 1 0 -3.5 0zM1114.71 967.2a1.75 1.75 0 1 0 3.5 0a1.75 1.75 0 1 0 -3.5 0zM1114.71 971.9a1.75 1.75 0 1 0 3.5 0a1.75 1.75 0 1 0 -3.5 0zM1114.71 976.7a1.75 1.75 0 1 0 3.5 0a1.75 1.75 0 1 0 -3.5 0zM1114.71 981.4a1.75 1.75 0 1 0 3.5 0a1.75 1.75 0 1 0 -3.5 0zM1121.83 967.2a1.75 1.75 0 1 0 3.5 0a1.75 1.75 0 1 0 -3.5 0zM1121.83 971.9a1.75 1.75 0 1 0 3.5 0a1.75 1.75 0 1 0 -3.5 0zM1121.83 976.7a1.75 1.75 0 1 0 3.5 0a1.75 1.75 0 1 0 -3.5 0zM1121.83 981.4a1.75 1.75 0 1 0 3.5 0a1.75 1.75 0 1 0 -3.5 0zM1127.03 967.2a1.75 1.75 0 1 0 3.5 0a1.75 1.75 0 1 0 -3.5 0zM1127.03 971.9a1.75 1.75 0 1 0 3.5 0a1.75 1.75 0 1 0 -3.5 0zM1127.03 976.7a1.75 1.75 0 1 0 3.5 0a1.75 1.75 0 1 0 -3.5 0zM1127.03 981.4a1.75 1.75 0 1 0 3.5 0a1.75 1.75 0 1 0 -3.5 0zM1134.16 967.2a1.75 1.75 0 1 0 3.5 0a1.75 1.75 0 1 0 -3.5 0zM1134.16 971.9a1.75 1.75 0 1 0 3.5 0a1.75 1.75 0 1 0 -3.5 0zM1134.16 976.7a1.75 1.75 0 1 0 3.5 0a1.75 1.75 0 1 0 -3.5 0zM1134.16 981.4a1.75 1.75 0 1 0 3.5 0a1.75 1.75 0 1 0 -3.5 0zM1139.36 967.2a1.75 1.75 0 1 0 3.5 0a1.75 1.75 0 1 0 -3.5 0zM1139.36 971.9a1.75 1.75 0 1 0 3.5 0a1.75 1.75 0 1 0 -3.5 0zM1139.36 976.7a1.75 1.75 0 1 0 3.5 0a1.75 1.75 0 1 0 -3.5 0zM1139.36 981.4a1.75 1.75 0 1 0 3.5 0a1.75 1.75 0 1 0 -3.5 0z"/>
<path fill="#e15d6c" d="M1109.51 939.2a1.75 1.75 0 1 0 3.5 0a1.75 1.75 0 1 0 -3.5 0zM1109.51 943.9a1.75 1.75 0 1 0 3.5 0a1.75 1.75 0 1 0 -3.5 0zM1109.51 948.7a1.75 1.75 0 1 0 3.5 0a1.75 1.75 0 1 0 -3.5 0zM1109.51 953.4a1.75 1.75 0 1 0 3.5 0a1.75 1.75 0 1 0 -3.5 0zM1114.71 939.2a1.75 1.75 0 1 0 3.5 0a1.75 1.75 0 1 0 -3.5 0zM1114.71 943.9a1.75 1.75 0 1 0 3.5 0a1.75 1.75 0 1 0 -3.5 0zM1114.71 948.7a1.75 1.75 0 1 0 3.5 0a1.75 1.75 0 1 0 -3.5 0zM1114.71 953.4a1.75 1.75 0 1 0 3.5 0a1.75 1.75 0 1 0 -3.5 0zM1121.83 939.2a1.75 1.75 0 1 0 3.5 0a1.75 1.75 0 1 0 -3.5 0zM1121.83 943.9a1.75 1.75 0 1 0 3.5 0a1.75 1.75 0 1 0 -3.5 0zM1121.83 948.7a1.75 1.75 0 1 0 3.5 0a1.75 1.75 0 1 0 -3.5 0zM1121.83 953.4a1.75 1.75 0 1 0 3.5 0a1.75 1.75 0 1 0 -3.5 0zM1127.03 939.2a1.75 1.75 0 1 0 3.5 0a1.75 1.75 0 1 0 -3.5 0zM1127.03 943.9a1.75 1.75 0 1 0 3.5 0a1.75 1.75 0 1 0 -3.5 0zM1127.03 948.7a1.75 1.75 0 1 0 3.5 0a1.75 1.75 0 1 0 -3.5 0zM1127.03 953.4a1.75 1.75 0 1 0 3.5 0a1.75 1.75 0 1 0 -3.5 0zM1134.16 939.2a1.75 1.75 0 1 0 3.5 0a1.75 1.75 0 1 0 -3.5 0zM1134.16 943.9a1.75 1.75 0 1 0 3.5 0a1.75 1.75 0 1 0 -3.5 0zM1134.16 948.7a1.75 1.75 0 1 0 3.5 0a1.75 1.75 0 1 0 -3.5 0zM1134.16 953.4a1.75 1.75 0 1 0 3.5 0a1.75 1.75 0 1 0 -3.5 0zM1139.36 939.2a1.75 1.75 0 1 0 3.5 0a1.75 1.75 0 1 0 -3.5 0zM1139.36 943.9a1.75 1.75 0 1 0 3.5 0a1.75 1.75 0 1 0 -3.5 0zM1139.36 948.7a1.75 1.75 0 1 0 3.5 0a1.75 1.75 0 1 0 -3.5 0zM1139.36 953.4a1.75 1.75 0 1 0 3.5 0a1.75 1.75 0 1 0 -3.5 0z"/>
<path fill="#f0526b" d="M1109.51 920.7a1.75 1.75 0 1 0 3.5 0a1.75 1.75 0 1 0 -3.5 0zM1109.51 925.4a1.75 1.75 0 1 0 3.5 0a1.75 1.75 0 1 0 -3.5 0zM1114.71 920.7a1.75 1.75 0 1 0 3.5 0a1.75 1.75 0 1 0 -3.5 0zM1114.71 925.4a1.75 1.75 0 1 0 3.5 0a1.75 1.75 0 1 0 -3.5 0zM1121.83 920.7a1.75 1.75 0 1 0 3.5 0a1.75 1.75 0 1 0 -3.5 0zM1121.83 925.4a1.75 1.75 0 1 0 3.5 0a1.75 1.75 0 1 0 -3.5 0zM1127.03 920.7a1.75 1.75 0 1 0 3.5 0a1.75 1.75 0 1 0 -3.5 0zM1127.03 925.4a1.75 1.75 0 1 0 3.5 0a1.75 1.75 0 1 0 -3.5 0zM1134.16 920.7a1.75 1.75 0 1 0 3.5 0a1.75 1.75 0 1 0 -3.5 0zM1134.16 925.4a1.75 1.75 0 1 0 3.5 0a1.75 1.75 0 1 0 -3.5 0zM1139.36 915.9a1.75 1.75 0 1 0 3.5 0a1.75 1.75 0 1 0 -3.5 0zM1139.36 920.7a1.75 1.75 0 1 0 3.5 0a1.75 1.75 0 1 0 -3.5 0zM1139.36 925.4a1.75 1.75 0 1 0 3.5 0a1.75 1.75 0 1 0 -3.5 0z"/>
<path fill="#957c39" d="M1109.51 1163.2a1.75 1.75 0 1 0 3.5 0a1.75 1.75 0 1 0 -3.5 0zM1109.51 1167.9a1.75 1.75 0 1 0 3.5 0a1.75 1.75 0 1 0 -3.5 0zM1109.51 1172.7a1.75 1.75 0 1 0 3.5 0a1.75 1.75 0 1 0 -3.5 0zM1109.51 1177.4a1.75 1.75 0 1 0 3.5 0a1.75 1.75 0 1 0 -3.5 0zM1114.71 1163.2a1.75 1.75 0 1 0 3.5 0a1.75 1.75 0 1 0 -3.5 0zM1114.71 1167.9a1.75 1.75 0 1 0 3.5 0a1.75 1.75 0 1 0 -3.5 0zM1114.71 1172.7a1.75 1.75 0 1 0 3.5 0a1.75 1.75 0 1 0 -3.5 0zM1114.71 1177.4a1.75 1.75 0 1 0 3.5 0a1.75 1.75 0 1 0 -3.5 0zM1121.83 1163.2a1.75 1.75 0 1 0 3.5 0a1.75 1.75 0 1 0 -3.5 0zM1121.83 1167.9a1.75 1.75 0 1 0 3.5 0a1.75 1.75 0 1 0 -3.5 0zM1121.83 1172.7a1.75 1.75 0 1 0 3.5 0a1.75 1.75 0 1 0 -3.5 0zM1121.83 1177.4a1.75 1.75 0 1 0 3.5 0a1.75 1.75 0 1 0 -3.5 0zM1127.03 1163.2a1.75 1.75 0 1 0 3.5 0a1.75 1.75 0 1 0 -3.5 0zM1127.03 1167.9a1.75 1.75 0 1 0 3.5 0a1.75 1.75 0 1 0 -3.5 0zM1127.03 1172.7a1.75 1.75 0 1 0 3.5 0a1.75 1.75 0 1 0 -3.5 0zM1127.03 1177.4a1.75 1.75 0 1 0 3.5 0a1.75 1.75 0 1 0 -3.5 0zM1134.16 1163.2a1.75 1.75 0 1 0 3.5 0a1.75 1.75 0 1 0 -3.5 0zM1134.16 1167.9a1.75 1.75 0 1 0 3.5 0a1.75 1.75 0 1 0 -3.5 0zM1134.16 1172.7a1.75 1.75 0 1 0 3.5 0a1.75 1.75 0 1 0 -3.5 0zM1134.16 1177.4a1.75 1.75 0 1 0 3.5 0a1.75 1.75 0 1 0 -3.5 0zM1139.36 1163.2a1.75 1.75 0 1 0 3.5 0a1.75 1.75 0 1 0 -3.5 0zM1139.36 1167.9a1.75 1.75 0 1 0 3.5 0a1.75 1.75 0 1 0 -3.5 0zM1139.36 1172.7a1.75 1.75 0 1 0 3.5 0a1.75 1.75 0 1 0 -3.5 0zM1139.36 1177.4a1.75 1.75 0 1 0 3.5 0a1.75 1.75 0 1 0 -3.5 0z"/>
<path fill="#dcb964" d="M1109.51 1144.7a1.75 1.75 0 1 0 3.5 0a1.75 1.75 0 1 0 -3.5 0zM1109.51 1149.4a1.75 1.75 0 1 0 3.5 0a1.75 1.75 0 1 0 -3.5 0zM1114.71 1144.7a1.75 1.75 0 1 0 3.5 0a1.75 1.75 0 1 0 -3.5 0zM1114.71 1149.4a1.75 1.75 0 1 0 3.5 0a1.75 1.75 0 1 0 -3.5 0zM1121.83 1144.7a1.75 1.75 0 1 0 3.5 0a1.75 1.75 0 1 0 -3.5 0zM1121.83 1149.4a1.75 1.75 0 1 0 3.5 0a1.75 1.75 0 1 0 -3.5 0zM1127.03 1144.7a1.75 1.75 0 1 0 3.5 0a1.75 1.75 0 1 0 -3.5 0zM1127.03 1149.4a1.75 1.75 0 1 0 3.5 0a1.75 1.75 0 1 0 -3.5 0zM1134.16 1144.7a1.75 1.75 0 1 0 3.5 0a1.75 1.75 0 1 0 -3.5 0zM1134.16 1149.4a1.75 1.75 0 1 0 3.5 0a1.75 1.75 0 1 0 -3.5 0zM1139.36 1144.7a1.75 1.75 0 1 0 3.5 0a1.75 1.75 0 1 0 -3.5 0zM1139.36 1149.4a1.75 1.75 0 1 0 3.5 0a1.75 1.75 0 1 0 -3.5 0z"/>
<path fill="#3c7b95" d="M1109.51 1331.2a1.75 1.75 0 1 0 3.5 0a1.75 1.75 0 1 0 -3.5 0zM1109.51 1335.9a1.75 1.75 0 1 0 3.5 0a1.75 1.75 0 1 0 -3.5 0zM1109.51 1340.7a1.75 1.75 0 1 0 3.5 0a1.75 1.75 0 1 0 -3.5 0zM1109.51 1345.4a1.75 1.75 0 1 0 3.5 0a1.75 1.75 0 1 0 -3.5 0zM1114.71 1331.2a1.75 1.75 0 1 0 3.5 0a1.75 1.75 0 1 0 -3.5 0zM1114.71 1335.9a1.75 1.75 0 1 0 3.5 0a1.75 1.75 0 1 0 -3.5 0zM1114.71 1340.7a1.75 1.75 0 1 0 3.5 0a1.75 1.75 0 1 0 -3.5 0zM1114.71 1345.4a1.75 1.75 0 1 0 3.5 0a1.75 1.75 0 1 0 -3.5 0zM1121.83 1331.2a1.75 1.75 0 1 0 3.5 0a1.75 1.75 0 1 0 -3.5 0zM1121.83 1335.9a1.75 1.75 0 1 0 3.5 0a1.75 1.75 0 1 0 -3.5 0zM1121.83 1340.7a1.75 1.75 0 1 0 3.5 0a1.75 1.75 0 1 0 -3.5 0zM1121.83 1345.4a1.75 1.75 0 1 0 3.5 0a1.75 1.75 0 1 0 -3.5 0zM1127.03 1331.2a1.75 1.75 0 1 0 3.5 0a1.75 1.75 0 1 0 -3.5 0zM1127.03 1335.9a1.75 1.75 0 1 0 3.5 0a1.75 1.75 0 1 0 -3.5 0zM1127.03 1340.7a1.75 1.75 0 1 0 3.5 0a1.75 1.75 0 1 0 -3.5 0zM1127.03 1345.4a1.75 1.75 0 1 0 3.5 0a1.75 1.75 0 1 0 -3.5 0zM1134.16 1331.2a1.75 1.75 0 1 0 3.5 0a1.75 1.75 0 1 0 -3.5 0zM1134.16 1335.9a1.75 1.75 0 1 0 3.5 0a1.75 1.75 0 1 0 -3.5 0zM1134.16 1340.7a1.75 1.75 0 1 0 3.5 0a1.75 1.75 0 1 0 -3.5 0zM1134.16 1345.4a1.75 1.75 0 1 0 3.5 0a1.75 1.75 0 1 0 -3.5 0zM1139.36 1331.2a1.75 1.75 0 1 0 3.5 0a1.75 1.75 0 1 0 -3.5 0zM1139.36 1335.9a1.75 1.75 0 1 0 3.5 0a1.75 1.75 0 1 0 -3.5 0zM1139.36 1340.7a1.75 1.75 0 1 0 3.5 0a1.75 1.75 0 1 0 -3.5 0zM1139.36 1345.4a1.75 1.75 0 1 0 3.5 0a1.75 1.75 0 1 0 -3.5 0z"/>
<path fill="#6a8b49" d="M1109.51 1503.9a1.75 1.75 0 1 0 3.5 0a1.75 1.75 0 1 0 -3.5 0zM1109.51 1508.7a1.75 1.75 0 1 0 3.5 0a1.75 1.75 0 1 0 -3.5 0zM1109.51 1513.4a1.75 1.75 0 1 0 3.5 0a1.75 1.75 0 1 0 -3.5 0zM1114.71 1503.9a1.75 1.75 0 1 0 3.5 0a1.75 1.75 0 1 0 -3.5 0zM1114.71 1508.7a1.75 1.75 0 1 0 3.5 0a1.75 1.75 0 1 0 -3.5 0zM1114.71 1513.4a1.75 1.75 0 1 0 3.5 0a1.75 1.75 0 1 0 -3.5 0zM1121.83 1503.9a1.75 1.75 0 1 0 3.5 0a1.75 1.75 0 1 0 -3.5 0zM1121.83 1508.7a1.75 1.75 0 1 0 3.5 0a1.75 1.75 0 1 0 -3.5 0zM1121.83 1513.4a1.75 1.75 0 1 0 3.5 0a1.75 1.75 0 1 0 -3.5 0zM1127.03 1503.9a1.75 1.75 0 1 0 3.5 0a1.75 1.75 0 1 0 -3.5 0zM1127.03 1508.7a1.75 1.75 0 1 0 3.5 0a1.75 1.75 0 1 0 -3.5 0zM1127.03 1513.4a1.75 1.75 0 1 0 3.5 0a1.75 1.75 0 1 0 -3.5 0zM1134.16 1503.9a1.75 1.75 0 1 0 3.5 0a1.75 1.75 0 1 0 -3.5 0zM1134.16 1508.7a1.75 1.75 0 1 0 3.5 0a1.75 1.75 0 1 0 -3.5 0zM1134.16 1513.4a1.75 1.75 0 1 0 3.5 0a1.75 1.75 0 1 0 -3.5 0zM1139.36 1508.7a1.75 1.75 0 1 0 3.5 0a1.75 1.75 0 1 0 -3.5 0zM1139.36 1513.4a1.75 1.75 0 1 0 3.5 0a1.75 1.75 0 1 0 -3.5 0z"/>
<path fill="#deaa46" d="M1866.47 869.4a1.75 1.75 0 1 0 3.5 0a1.75 1.75 0 1 0 -3.5 0zM1903.44 869.4a1.75 1.75 0 1 0 3.5 0a1.75 1.75 0 1 0 -3.5 0z"/>
<path fill="#31277f" d="M1540.85 1821.4a1.75 1.75 0 1 0 3.5 0a1.75 1.75 0 1 0 -3.5 0zM1546.05 1821.4a1.75 1.75 0 1 0 3.5 0a1.75 1.75 0 1 0 -3.5 0zM1553.17 1807.2a1.75 1.75 0 1 0 3.5 0a1.75 1.75 0 1 0 -3.5 0zM1553.17 1811.9a1.75 1.75 0 1 0 3.5 0a1.75 1.75 0 1 0 -3.5 0zM1553.17 1816.7a1.75 1.75 0 1 0 3.5 0a1.75 1.75 0 1 0 -3.5 0zM1553.17 1821.4a1.75 1.75 0 1 0 3.5 0a1.75 1.75 0 1 0 -3.5 0zM1558.37 1807.2a1.75 1.75 0 1 0 3.5 0a1.75 1.75 0 1 0 -3.5 0zM1558.37 1811.9a1.75 1.75 0 1 0 3.5 0a1.75 1.75 0 1 0 -3.5 0zM1558.37 1816.7a1.75 1.75 0 1 0 3.5 0a1.75 1.75 0 1 0 -3.5 0zM1558.37 1821.4a1.75 1.75 0 1 0 3.5 0a1.75 1.75 0 1 0 -3.5 0zM1565.5 1807.2a1.75 1.75 0 1 0 3.5 0a1.75 1.75 0 1 0 -3.5 0zM1565.5 1811.9a1.75 1.75 0 1 0 3.5 0a1.75 1.75 0 1 0 -3.5 0zM1565.5 1816.7a1.75 1.75 0 1 0 3.5 0a1.75 1.75 0 1 0 -3.5 0zM1565.5 1821.4a1.75 1.75 0 1 0 3.5 0a1.75 1.75 0 1 0 -3.5 0zM1570.7 1807.2a1.75 1.75 0 1 0 3.5 0a1.75 1.75 0 1 0 -3.5 0zM1570.7 1811.9a1.75 1.75 0 1 0 3.5 0a1.75 1.75 0 1 0 -3.5 0zM1570.7 1816.7a1.75 1.75 0 1 0 3.5 0a1.75 1.75 0 1 0 -3.5 0zM1570.7 1821.4a1.75 1.75 0 1 0 3.5 0a1.75 1.75 0 1 0 -3.5 0z"/>
<path fill="#3a2f89" d="M1553.17 1779.2a1.75 1.75 0 1 0 3.5 0a1.75 1.75 0 1 0 -3.5 0zM1553.17 1783.9a1.75 1.75 0 1 0 3.5 0a1.75 1.75 0 1 0 -3.5 0zM1553.17 1788.7a1.75 1.75 0 1 0 3.5 0a1.75 1.75 0 1 0 -3.5 0zM1553.17 1793.4a1.75 1.75 0 1 0 3.5 0a1.75 1.75 0 1 0 -3.5 0zM1558.37 1779.2a1.75 1.75 0 1 0 3.5 0a1.75 1.75 0 1 0 -3.5 0zM1558.37 1783.9a1.75 1.75 0 1 0 3.5 0a1.75 1.75 0 1 0 -3.5 0zM1558.37 1788.7a1.75 1.75 0 1 0 3.5 0a1.75 1.75 0 1 0 -3.5 0zM1558.37 1793.4a1.75 1.75 0 1 0 3.5 0a1.75 1.75 0 1 0 -3.5 0zM1565.5 1779.2a1.75 1.75 0 1 0 3.5 0a1.75 1.75 0 1 0 -3.5 0zM1565.5 1783.9a1.75 1.75 0 1 0 3.5 0a1.75 1.75 0 1 0 -3.5 0zM1565.5 1788.7a1.75 1.75 0 1 0 3.5 0a1.75 1.75 0 1 0 -3.5 0zM1565.5 1793.4a1.75 1.75 0 1 0 3.5 0a1.75 1.75 0 1 0 -3.5 0zM1570.7 1779.2a1.75 1.75 0 1 0 3.5 0a1.75 1.75 0 1 0 -3.5 0zM1570.7 1783.9a1.75 1.75 0 1 0 3.5 0a1.75 1.75 0 1 0 -3.5 0zM1570.7 1788.7a1.75 1.75 0 1 0 3.5 0a1.75 1.75 0 1 0 -3.5 0zM1570.7 1793.4a1.75 1.75 0 1 0 3.5 0a1.75 1.75 0 1 0 -3.5 0z"/>
<path fill="#423794" d="M1553.17 1751.2a1.75 1.75 0 1 0 3.5 0a1.75 1.75 0 1 0 -3.5 0zM1553.17 1755.9a1.75 1.75 0 1 0 3.5 0a1.75 1.75 0 1 0 -3.5 0zM1553.17 1760.7a1.75 1.75 0 1 0 3.5 0a1.75 1.75 0 1 0 -3.5 0zM1553.17 1765.4a1.75 1.75 0 1 0 3.5 0a1.75 1.75 0 1 0 -3.5 0zM1558.37 1751.2a1.75 1.75 0 1 0 3.5 0a1.75 1.75 0 1 0 -3.5 0zM1558.37 1755.9a1.75 1.75 0 1 0 3.5 0a1.75 1.75 0 1 0 -3.5 0zM1558.37 1760.7a1.75 1.75 0 1 0 3.5 0a1.75 1.75 0 1 0 -3.5 0zM1558.37 1765.4a1.75 1.75 0 1 0 3.5 0a1.75 1.75 0 1 0 -3.5 0zM1565.5 1751.2a1.75 1.75 0 1 0 3.5 0a1.75 1.75 0 1 0 -3.5 0zM1565.5 1755.9a1.75 1.75 0 1 0 3.5 0a1.75 1.75 0 1 0 -3.5 0zM1565.5 1760.7a1.75 1.75 0 1 0 3.5 0a1.75 1.75 0 1 0 -3.5 0zM1565.5 1765.4a1.75 1.75 0 1 0 3.5 0a1.75 1.75 0 1 0 -3.5 0zM1570.7 1751.2a1.75 1.75 0 1 0 3.5 0a1.75 1.75 0 1 0 -3.5 0zM1570.7 1755.9a1.75 1.75 0 1 0 3.5 0a1.75 1.75 0 1 0 -3.5 0zM1570.7 1760.7a1.75 1.75 0 1 0 3.5 0a1.75 1.75 0 1 0 -3.5 0zM1570.7 1765.4a1.75 1.75 0 1 0 3.5 0a1.75 1.75 0 1 0 -3.5 0z"/>
<path fill="#4b3f9e" d="M1553.17 1723.2a1.75 1.75 0 1 0 3.5 0a1.75 1.75 0 1 0 -3.5 0zM1553.17 1727.9a1.75 1.75 0 1 0 3.5 0a1.75 1.75 0 1 0 -3.5 0zM1553.17 1732.7a1.75 1.75 0 1 0 3.5 0a1.75 1.75 0 1 0 -3.5 0zM1553.17 1737.4a1.75 1.75 0 1 0 3.5 0a1.75 1.75 0 1 0 -3.5 0zM1558.37 1723.2a1.75 1.75 0 1 0 3.5 0a1.75 1.75 0 1 0 -3.5 0zM1558.37 1727.9a1.75 1.75 0 1 0 3.5 0a1.75 1.75 0 1 0 -3.5 0zM1558.37 1732.7a1.75 1.75 0 1 0 3.5 0a1.75 1.75 0 1 0 -3.5 0zM1558.37 1737.4a1.75 1.75 0 1 0 3.5 0a1.75 1.75 0 1 0 -3.5 0zM1565.5 1727.9a1.75 1.75 0 1 0 3.5 0a1.75 1.75 0 1 0 -3.5 0zM1565.5 1732.7a1.75 1.75 0 1 0 3.5 0a1.75 1.75 0 1 0 -3.5 0zM1565.5 1737.4a1.75 1.75 0 1 0 3.5 0a1.75 1.75 0 1 0 -3.5 0zM1570.7 1723.2a1.75 1.75 0 1 0 3.5 0a1.75 1.75 0 1 0 -3.5 0zM1570.7 1727.9a1.75 1.75 0 1 0 3.5 0a1.75 1.75 0 1 0 -3.5 0zM1570.7 1732.7a1.75 1.75 0 1 0 3.5 0a1.75 1.75 0 1 0 -3.5 0zM1570.7 1737.4a1.75 1.75 0 1 0 3.5 0a1.75 1.75 0 1 0 -3.5 0z"/>
<path fill="#5a4eaa" d="M1553.17 1695.2a1.75 1.75 0 1 0 3.5 0a1.75 1.75 0 1 0 -3.5 0zM1553.17 1699.9a1.75 1.75 0 1 0 3.5 0a1.75 1.75 0 1 0 -3.5 0zM1553.17 1704.7a1.75 1.75 0 1 0 3.5 0a1.75 1.75 0 1 0 -3.5 0zM1553.17 1709.4a1.75 1.75 0 1 0 3.5 0a1.75 1.75 0 1 0 -3.5 0zM1558.37 1695.2a1.75 1.75 0 1 0 3.5 0a1.75 1.75 0 1 0 -3.5 0zM1558.37 1699.9a1.75 1.75 0 1 0 3.5 0a1.75 1.75 0 1 0 -3.5 0zM1558.37 1704.7a1.75 1.75 0 1 0 3.5 0a1.75 1.75 0 1 0 -3.5 0zM1558.37 1709.4a1.75 1.75 0 1 0 3.5 0a1.75 1.75 0 1 0 -3.5 0z"/>
<path fill="#6f65b7" d="M1558.37 1667.2a1.75 1.75 0 1 0 3.5 0a1.75 1.75 0 1 0 -3.5 0zM1558.37 1671.9a1.75 1.75 0 1 0 3.5 0a1.75 1.75 0 1 0 -3.5 0zM1558.37 1676.7a1.75 1.75 0 1 0 3.5 0a1.75 1.75 0 1 0 -3.5 0zM1558.37 1681.4a1.75 1.75 0 1 0 3.5 0a1.75 1.75 0 1 0 -3.5 0z"/>
<path fill="#857cc4" d="M1558.37 1639.2a1.75 1.75 0 1 0 3.5 0a1.75 1.75 0 1 0 -3.5 0zM1558.37 1643.9a1.75 1.75 0 1 0 3.5 0a1.75 1.75 0 1 0 -3.5 0zM1558.37 1648.7a1.75 1.75 0 1 0 3.5 0a1.75 1.75 0 1 0 -3.5 0zM1558.37 1653.4a1.75 1.75 0 1 0 3.5 0a1.75 1.75 0 1 0 -3.5 0z"/>
<path fill="#9a92d1" d="M1558.37 1615.9a1.75 1.75 0 1 0 3.5 0a1.75 1.75 0 1 0 -3.5 0zM1558.37 1620.7a1.75 1.75 0 1 0 3.5 0a1.75 1.75 0 1 0 -3.5 0zM1558.37 1625.4a1.75 1.75 0 1 0 3.5 0a1.75 1.75 0 1 0 -3.5 0z"/>
<path fill="#67126a" d="M1540.85 1835.2a1.75 1.75 0 1 0 3.5 0a1.75 1.75 0 1 0 -3.5 0zM1546.05 1835.2a1.75 1.75 0 1 0 3.5 0a1.75 1.75 0 1 0 -3.5 0zM1553.17 1835.2a1.75 1.75 0 1 0 3.5 0a1.75 1.75 0 1 0 -3.5 0zM1553.17 1839.9a1.75 1.75 0 1 0 3.5 0a1.75 1.75 0 1 0 -3.5 0zM1553.17 1844.7a1.75 1.75 0 1 0 3.5 0a1.75 1.75 0 1 0 -3.5 0zM1553.17 1849.4a1.75 1.75 0 1 0 3.5 0a1.75 1.75 0 1 0 -3.5 0zM1558.37 1835.2a1.75 1.75 0 1 0 3.5 0a1.75 1.75 0 1 0 -3.5 0zM1558.37 1839.9a1.75 1.75 0 1 0 3.5 0a1.75 1.75 0 1 0 -3.5 0zM1558.37 1844.7a1.75 1.75 0 1 0 3.5 0a1.75 1.75 0 1 0 -3.5 0zM1558.37 1849.4a1.75 1.75 0 1 0 3.5 0a1.75 1.75 0 1 0 -3.5 0zM1565.5 1835.2a1.75 1.75 0 1 0 3.5 0a1.75 1.75 0 1 0 -3.5 0zM1565.5 1839.9a1.75 1.75 0 1 0 3.5 0a1.75 1.75 0 1 0 -3.5 0zM1565.5 1844.7a1.75 1.75 0 1 0 3.5 0a1.75 1.75 0 1 0 -3.5 0zM1565.5 1849.4a1.75 1.75 0 1 0 3.5 0a1.75 1.75 0 1 0 -3.5 0zM1570.7 1835.2a1.75 1.75 0 1 0 3.5 0a1.75 1.75 0 1 0 -3.5 0zM1570.7 1839.9a1.75 1.75 0 1 0 3.5 0a1.75 1.75 0 1 0 -3.5 0zM1570.7 1844.7a1.75 1.75 0 1 0 3.5 0a1.75 1.75 0 1 0 -3.5 0zM1570.7 1849.4a1.75 1.75 0 1 0 3.5 0a1.75 1.75 0 1 0 -3.5 0z"/>
<path fill="#6d1e70" d="M1553.17 1863.2a1.75 1.75 0 1 0 3.5 0a1.75 1.75 0 1 0 -3.5 0zM1553.17 1867.9a1.75 1.75 0 1 0 3.5 0a1.75 1.75 0 1 0 -3.5 0zM1553.17 1872.7a1.75 1.75 0 1 0 3.5 0a1.75 1.75 0 1 0 -3.5 0zM1553.17 1877.4a1.75 1.75 0 1 0 3.5 0a1.75 1.75 0 1 0 -3.5 0zM1558.37 1863.2a1.75 1.75 0 1 0 3.5 0a1.75 1.75 0 1 0 -3.5 0zM1558.37 1867.9a1.75 1.75 0 1 0 3.5 0a1.75 1.75 0 1 0 -3.5 0zM1558.37 1872.7a1.75 1.75 0 1 0 3.5 0a1.75 1.75 0 1 0 -3.5 0zM1558.37 1877.4a1.75 1.75 0 1 0 3.5 0a1.75 1.75 0 1 0 -3.5 0zM1565.5 1863.2a1.75 1.75 0 1 0 3.5 0a1.75 1.75 0 1 0 -3.5 0zM1565.5 1867.9a1.75 1.75 0 1 0 3.5 0a1.75 1.75 0 1 0 -3.5 0zM1565.5 1872.7a1.75 1.75 0 1 0 3.5 0a1.75 1.75 0 1 0 -3.5 0zM1565.5 1877.4a1.75 1.75 0 1 0 3.5 0a1.75 1.75 0 1 0 -3.5 0zM1570.7 1863.2a1.75 1.75 0 1 0 3.5 0a1.75 1.75 0 1 0 -3.5 0zM1570.7 1867.9a1.75 1.75 0 1 0 3.5 0a1.75 1.75 0 1 0 -3.5 0zM1570.7 1872.7a1.75 1.75 0 1 0 3.5 0a1.75 1.75 0 1 0 -3.5 0zM1570.7 1877.4a1.75 1.75 0 1 0 3.5 0a1.75 1.75 0 1 0 -3.5 0z"/>
<path fill="#722975" d="M1553.17 1891.2a1.75 1.75 0 1 0 3.5 0a1.75 1.75 0 1 0 -3.5 0zM1553.17 1895.9a1.75 1.75 0 1 0 3.5 0a1.75 1.75 0 1 0 -3.5 0zM1553.17 1900.7a1.75 1.75 0 1 0 3.5 0a1.75 1.75 0 1 0 -3.5 0zM1553.17 1905.4a1.75 1.75 0 1 0 3.5 0a1.75 1.75 0 1 0 -3.5 0zM1558.37 1891.2a1.75 1.75 0 1 0 3.5 0a1.75 1.75 0 1 0 -3.5 0zM1558.37 1895.9a1.75 1.75 0 1 0 3.5 0a1.75 1.75 0 1 0 -3.5 0zM1558.37 1900.7a1.75 1.75 0 1 0 3.5 0a1.75 1.75 0 1 0 -3.5 0zM1558.37 1905.4a1.75 1.75 0 1 0 3.5 0a1.75 1.75 0 1 0 -3.5 0zM1565.5 1891.2a1.75 1.75 0 1 0 3.5 0a1.75 1.75 0 1 0 -3.5 0zM1565.5 1895.9a1.75 1.75 0 1 0 3.5 0a1.75 1.75 0 1 0 -3.5 0zM1565.5 1900.7a1.75 1.75 0 1 0 3.5 0a1.75 1.75 0 1 0 -3.5 0zM1565.5 1905.4a1.75 1.75 0 1 0 3.5 0a1.75 1.75 0 1 0 -3.5 0zM1570.7 1891.2a1.75 1.75 0 1 0 3.5 0a1.75 1.75 0 1 0 -3.5 0zM1570.7 1895.9a1.75 1.75 0 1 0 3.5 0a1.75 1.75 0 1 0 -3.5 0zM1570.7 1900.7a1.75 1.75 0 1 0 3.5 0a1.75 1.75 0 1 0 -3.5 0zM1570.7 1905.4a1.75 1.75 0 1 0 3.5 0a1.75 1.75 0 1 0 -3.5 0z"/>
<path fill="#78357b" d="M1553.17 1919.2a1.75 1.75 0 1 0 3.5 0a1.75 1.75 0 1 0 -3.5 0zM1553.17 1923.9a1.75 1.75 0 1 0 3.5 0a1.75 1.75 0 1 0 -3.5 0zM1553.17 1928.7a1.75 1.75 0 1 0 3.5 0a1.75 1.75 0 1 0 -3.5 0zM1553.17 1933.4a1.75 1.75 0 1 0 3.5 0a1.75 1.75 0 1 0 -3.5 0zM1558.37 1919.2a1.75 1.75 0 1 0 3.5 0a1.75 1.75 0 1 0 -3.5 0zM1558.37 1923.9a1.75 1.75 0 1 0 3.5 0a1.75 1.75 0 1 0 -3.5 0zM1558.37 1928.7a1.75 1.75 0 1 0 3.5 0a1.75 1.75 0 1 0 -3.5 0zM1558.37 1933.4a1.75 1.75 0 1 0 3.5 0a1.75 1.75 0 1 0 -3.5 0zM1565.5 1919.2a1.75 1.75 0 1 0 3.5 0a1.75 1.75 0 1 0 -3.5 0zM1565.5 1923.9a1.75 1.75 0 1 0 3.5 0a1.75 1.75 0 1 0 -3.5 0zM1565.5 1928.7a1.75 1.75 0 1 0 3.5 0a1.75 1.75 0 1 0 -3.5 0zM1565.5 1933.4a1.75 1.75 0 1 0 3.5 0a1.75 1.75 0 1 0 -3.5 0zM1570.7 1919.2a1.75 1.75 0 1 0 3.5 0a1.75 1.75 0 1 0 -3.5 0zM1570.7 1923.9a1.75 1.75 0 1 0 3.5 0a1.75 1.75 0 1 0 -3.5 0zM1570.7 1928.7a1.75 1.75 0 1 0 3.5 0a1.75 1.75 0 1 0 -3.5 0zM1570.7 1933.4a1.75 1.75 0 1 0 3.5 0a1.75 1.75 0 1 0 -3.5 0z"/>
<path fill="#7d4180" d="M1553.17 1947.2a1.75 1.75 0 1 0 3.5 0a1.75 1.75 0 1 0 -3.5 0zM1553.17 1951.9a1.75 1.75 0 1 0 3.5 0a1.75 1.75 0 1 0 -3.5 0zM1553.17 1956.7a1.75 1.75 0 1 0 3.5 0a1.75 1.75 0 1 0 -3.5 0zM1553.17 1961.4a1.75 1.75 0 1 0 3.5 0a1.75 1.75 0 1 0 -3.5 0zM1558.37 1947.2a1.75 1.75 0 1 0 3.5 0a1.75 1.75 0 1 0 -3.5 0zM1558.37 1951.9a1.75 1.75 0 1 0 3.5 0a1.75 1.75 0 1 0 -3.5 0zM1558.37 1956.7a1.75 1.75 0 1 0 3.5 0a1.75 1.75 0 1 0 -3.5 0zM1558.37 1961.4a1.75 1.75 0 1 0 3.5 0a1.75 1.75 0 1 0 -3.5 0zM1565.5 1947.2a1.75 1.75 0 1 0 3.5 0a1.75 1.75 0 1 0 -3.5 0zM1565.5 1951.9a1.75 1.75 0 1 0 3.5 0a1.75 1.75 0 1 0 -3.5 0zM1565.5 1956.7a1.75 1.75 0 1 0 3.5 0a1.75 1.75 0 1 0 -3.5 0zM1565.5 1961.4a1.75 1.75 0 1 0 3.5 0a1.75 1.75 0 1 0 -3.5 0zM1570.7 1947.2a1.75 1.75 0 1 0 3.5 0a1.75 1.75 0 1 0 -3.5 0zM1570.7 1951.9a1.75 1.75 0 1 0 3.5 0a1.75 1.75 0 1 0 -3.5 0zM1570.7 1956.7a1.75 1.75 0 1 0 3.5 0a1.75 1.75 0 1 0 -3.5 0zM1570.7 1961.4a1.75 1.75 0 1 0 3.5 0a1.75 1.75 0 1 0 -3.5 0z"/>
<path fill="#905793" d="M1553.17 1975.2a1.75 1.75 0 1 0 3.5 0a1.75 1.75 0 1 0 -3.5 0zM1553.17 1979.9a1.75 1.75 0 1 0 3.5 0a1.75 1.75 0 1 0 -3.5 0zM1553.17 1984.7a1.75 1.75 0 1 0 3.5 0a1.75 1.75 0 1 0 -3.5 0zM1553.17 1989.4a1.75 1.75 0 1 0 3.5 0a1.75 1.75 0 1 0 -3.5 0zM1558.37 1975.2a1.75 1.75 0 1 0 3.5 0a1.75 1.75 0 1 0 -3.5 0zM1558.37 1979.9a1.75 1.75 0 1 0 3.5 0a1.75 1.75 0 1 0 -3.5 0zM1558.37 1984.7a1.75 1.75 0 1 0 3.5 0a1.75 1.75 0 1 0 -3.5 0zM1558.37 1989.4a1.75 1.75 0 1 0 3.5 0a1.75 1.75 0 1 0 -3.5 0zM1565.5 1975.2a1.75 1.75 0 1 0 3.5 0a1.75 1.75 0 1 0 -3.5 0zM1565.5 1979.9a1.75 1.75 0 1 0 3.5 0a1.75 1.75 0 1 0 -3.5 0zM1565.5 1984.7a1.75 1.75 0 1 0 3.5 0a1.75 1.75 0 1 0 -3.5 0zM1565.5 1989.4a1.75 1.75 0 1 0 3.5 0a1.75 1.75 0 1 0 -3.5 0zM1570.7 1975.2a1.75 1.75 0 1 0 3.5 0a1.75 1.75 0 1 0 -3.5 0zM1570.7 1979.9a1.75 1.75 0 1 0 3.5 0a1.75 1.75 0 1 0 -3.5 0zM1570.7 1984.7a1.75 1.75 0 1 0 3.5 0a1.75 1.75 0 1 0 -3.5 0zM1570.7 1989.4a1.75 1.75 0 1 0 3.5 0a1.75 1.75 0 1 0 -3.5 0z"/>
<path fill="#a36da6" d="M1553.17 2003.2a1.75 1.75 0 1 0 3.5 0a1.75 1.75 0 1 0 -3.5 0zM1553.17 2007.9a1.75 1.75 0 1 0 3.5 0a1.75 1.75 0 1 0 -3.5 0zM1553.17 2012.7a1.75 1.75 0 1 0 3.5 0a1.75 1.75 0 1 0 -3.5 0zM1553.17 2017.4a1.75 1.75 0 1 0 3.5 0a1.75 1.75 0 1 0 -3.5 0zM1558.37 2003.2a1.75 1.75 0 1 0 3.5 0a1.75 1.75 0 1 0 -3.5 0zM1558.37 2007.9a1.75 1.75 0 1 0 3.5 0a1.75 1.75 0 1 0 -3.5 0zM1558.37 2012.7a1.75 1.75 0 1 0 3.5 0a1.75 1.75 0 1 0 -3.5 0zM1558.37 2017.4a1.75 1.75 0 1 0 3.5 0a1.75 1.75 0 1 0 -3.5 0zM1565.5 2003.2a1.75 1.75 0 1 0 3.5 0a1.75 1.75 0 1 0 -3.5 0zM1565.5 2007.9a1.75 1.75 0 1 0 3.5 0a1.75 1.75 0 1 0 -3.5 0zM1565.5 2012.7a1.75 1.75 0 1 0 3.5 0a1.75 1.75 0 1 0 -3.5 0zM1565.5 2017.4a1.75 1.75 0 1 0 3.5 0a1.75 1.75 0 1 0 -3.5 0zM1570.7 2003.2a1.75 1.75 0 1 0 3.5 0a1.75 1.75 0 1 0 -3.5 0zM1570.7 2007.9a1.75 1.75 0 1 0 3.5 0a1.75 1.75 0 1 0 -3.5 0zM1570.7 2012.7a1.75 1.75 0 1 0 3.5 0a1.75 1.75 0 1 0 -3.5 0zM1570.7 2017.4a1.75 1.75 0 1 0 3.5 0a1.75 1.75 0 1 0 -3.5 0z"/>
<path fill="#b683b8" d="M1553.17 2031.2a1.75 1.75 0 1 0 3.5 0a1.75 1.75 0 1 0 -3.5 0zM1553.17 2035.9a1.75 1.75 0 1 0 3.5 0a1.75 1.75 0 1 0 -3.5 0zM1553.17 2040.7a1.75 1.75 0 1 0 3.5 0a1.75 1.75 0 1 0 -3.5 0zM1553.17 2045.4a1.75 1.75 0 1 0 3.5 0a1.75 1.75 0 1 0 -3.5 0zM1558.37 2031.2a1.75 1.75 0 1 0 3.5 0a1.75 1.75 0 1 0 -3.5 0zM1558.37 2035.9a1.75 1.75 0 1 0 3.5 0a1.75 1.75 0 1 0 -3.5 0zM1558.37 2040.7a1.75 1.75 0 1 0 3.5 0a1.75 1.75 0 1 0 -3.5 0zM1558.37 2045.4a1.75 1.75 0 1 0 3.5 0a1.75 1.75 0 1 0 -3.5 0zM1565.5 2031.2a1.75 1.75 0 1 0 3.5 0a1.75 1.75 0 1 0 -3.5 0zM1565.5 2035.9a1.75 1.75 0 1 0 3.5 0a1.75 1.75 0 1 0 -3.5 0zM1565.5 2040.7a1.75 1.75 0 1 0 3.5 0a1.75 1.75 0 1 0 -3.5 0zM1565.5 2045.4a1.75 1.75 0 1 0 3.5 0a1.75 1.75 0 1 0 -3.5 0zM1570.7 2031.2a1.75 1.75 0 1 0 3.5 0a1.75 1.75 0 1 0 -3.5 0zM1570.7 2035.9a1.75 1.75 0 1 0 3.5 0a1.75 1.75 0 1 0 -3.5 0zM1570.7 2040.7a1.75 1.75 0 1 0 3.5 0a1.75 1.75 0 1 0 -3.5 0zM1570.7 2045.4a1.75 1.75 0 1 0 3.5 0a1.75 1.75 0 1 0 -3.5 0z"/>
<path fill="#c999cb" d="M1553.17 2059.2a1.75 1.75 0 1 0 3.5 0a1.75 1.75 0 1 0 -3.5 0zM1553.17 2063.9a1.75 1.75 0 1 0 3.5 0a1.75 1.75 0 1 0 -3.5 0zM1553.17 2068.7a1.75 1.75 0 1 0 3.5 0a1.75 1.75 0 1 0 -3.5 0zM1553.17 2073.4a1.75 1.75 0 1 0 3.5 0a1.75 1.75 0 1 0 -3.5 0zM1558.37 2059.2a1.75 1.75 0 1 0 3.5 0a1.75 1.75 0 1 0 -3.5 0zM1558.37 2063.9a1.75 1.75 0 1 0 3.5 0a1.75 1.75 0 1 0 -3.5 0zM1558.37 2068.7a1.75 1.75 0 1 0 3.5 0a1.75 1.75 0 1 0 -3.5 0zM1558.37 2073.4a1.75 1.75 0 1 0 3.5 0a1.75 1.75 0 1 0 -3.5 0zM1565.5 2059.2a1.75 1.75 0 1 0 3.5 0a1.75 1.75 0 1 0 -3.5 0zM1565.5 2063.9a1.75 1.75 0 1 0 3.5 0a1.75 1.75 0 1 0 -3.5 0zM1565.5 2068.7a1.75 1.75 0 1 0 3.5 0a1.75 1.75 0 1 0 -3.5 0zM1565.5 2073.4a1.75 1.75 0 1 0 3.5 0a1.75 1.75 0 1 0 -3.5 0zM1570.7 2059.2a1.75 1.75 0 1 0 3.5 0a1.75 1.75 0 1 0 -3.5 0zM1570.7 2063.9a1.75 1.75 0 1 0 3.5 0a1.75 1.75 0 1 0 -3.5 0zM1570.7 2068.7a1.75 1.75 0 1 0 3.5 0a1.75 1.75 0 1 0 -3.5 0zM1570.7 2073.4a1.75 1.75 0 1 0 3.5 0a1.75 1.75 0 1 0 -3.5 0z"/>
<path fill="#dcafde" d="M1553.17 2087.2a1.75 1.75 0 1 0 3.5 0a1.75 1.75 0 1 0 -3.5 0zM1553.17 2091.9a1.75 1.75 0 1 0 3.5 0a1.75 1.75 0 1 0 -3.5 0zM1553.17 2096.7a1.75 1.75 0 1 0 3.5 0a1.75 1.75 0 1 0 -3.5 0zM1553.17 2101.4a1.75 1.75 0 1 0 3.5 0a1.75 1.75 0 1 0 -3.5 0zM1558.37 2087.2a1.75 1.75 0 1 0 3.5 0a1.75 1.75 0 1 0 -3.5 0zM1558.37 2091.9a1.75 1.75 0 1 0 3.5 0a1.75 1.75 0 1 0 -3.5 0zM1558.37 2096.7a1.75 1.75 0 1 0 3.5 0a1.75 1.75 0 1 0 -3.5 0zM1558.37 2101.4a1.75 1.75 0 1 0 3.5 0a1.75 1.75 0 1 0 -3.5 0zM1565.5 2087.2a1.75 1.75 0 1 0 3.5 0a1.75 1.75 0 1 0 -3.5 0zM1565.5 2091.9a1.75 1.75 0 1 0 3.5 0a1.75 1.75 0 1 0 -3.5 0zM1565.5 2096.7a1.75 1.75 0 1 0 3.5 0a1.75 1.75 0 1 0 -3.5 0zM1565.5 2101.4a1.75 1.75 0 1 0 3.5 0a1.75 1.75 0 1 0 -3.5 0zM1570.7 2087.2a1.75 1.75 0 1 0 3.5 0a1.75 1.75 0 1 0 -3.5 0zM1570.7 2091.9a1.75 1.75 0 1 0 3.5 0a1.75 1.75 0 1 0 -3.5 0zM1570.7 2096.7a1.75 1.75 0 1 0 3.5 0a1.75 1.75 0 1 0 -3.5 0zM1570.7 2101.4a1.75 1.75 0 1 0 3.5 0a1.75 1.75 0 1 0 -3.5 0z"/>
<path fill="#80d0a3" d="M3660.58 869.4a1.75 1.75 0 1 0 3.5 0a1.75 1.75 0 1 0 -3.5 0zM3678.1 869.4a1.75 1.75 0 1 0 3.5 0a1.75 1.75 0 1 0 -3.5 0z"/>
<path fill="#72b08d" d="M3660.58 1205.4a1.75 1.75 0 1 0 3.5 0a1.75 1.75 0 1 0 -3.5 0zM3672.9 1205.4a1.75 1.75 0 1 0 3.5 0a1.75 1.75 0 1 0 -3.5 0z"/>
<path fill="#6da284" d="M3672.9 1345.4a1.75 1.75 0 1 0 3.5 0a1.75 1.75 0 1 0 -3.5 0z"/>
<path fill="#658f78" d="M3672.9 1541.4a1.75 1.75 0 1 0 3.5 0a1.75 1.75 0 1 0 -3.5 0z"/>
<path fill="#638a74" d="M3672.9 1597.4a1.75 1.75 0 1 0 3.5 0a1.75 1.75 0 1 0 -3.5 0z"/>
</svg>
<i class="sup" style="left:441.86px;top:120.3px;color:#cb4848">¹</i>
<i class="b" style="left:454.19px;top:120.3px;color:#f0f0f0">cpu</i>
<i class="b" style="left:540.45px;top:120.3px;color:#cb4848">m</i>
<i class="b" style="left:552.78px;top:120.3px;color:#f0f0f0">enu</i>
<i class="b" style="left:614.4px;top:120.3px;color:#cb4848">p</i>
<i class="b" style="left:626.72px;top:120.3px;color:#f0f0f0">reset *</i>
<i class="b" style="left:2056.31px;top:120.3px;color:#f0f0f0">03:30:05</i>
<i class="b" style="left:3621.45px;top:120.3px;color:#cb4848"> </i>
<i class="b" style="left:3633.78px;top:120.3px;color:#f0f0f0"> 2000ms </i>
<i class="b" style="left:3732.37px;top:120.3px;color:#cb4848">+</i>
<i class="b" style="left:3547.51px;top:372.3px;color:#f0f0f0">E5-2680</i>
<i class="b" style="left:3658.43px;top:372.3px;color:#f0f0f0">2.8 GHz</i>
<i class="n" style="left:3522.86px;top:400.3px;color:#d6d6d6">CPU</i>
<i class="n" style="left:3720.05px;top:400.3px;color:#d4845b">76</i>
<i class="n" style="left:3744.69px;top:400.3px;color:#d6d6d6">%</i>
<i class="n" style="left:3522.86px;top:428.3px;color:#d6d6d6">C0</i>
<i class="n" style="left:3720.05px;top:428.3px;color:#d4845b">76</i>
<i class="n" style="left:3744.69px;top:428.3px;color:#d6d6d6">%</i>
<i class="n" style="left:3522.86px;top:456.3px;color:#d6d6d6">C1</i>
<i class="n" style="left:3720.05px;top:456.3px;color:#d4845b">76</i>
<i class="n" style="left:3744.69px;top:456.3px;color:#d6d6d6">%</i>
<i class="n" style="left:3522.86px;top:484.3px;color:#d6d6d6">LAV: 0.12 0.36 0.53</i>
<i class="n" style="left:429.54px;top:736.3px;color:#6a6a6a">up 20d 05:06</i>
<i class="sup" style="left:441.86px;top:792.3px;color:#cb4848">²</i>
<i class="b" style="left:454.19px;top:792.3px;color:#f0f0f0">mem</i>
<i class="b" style="left:1181.3px;top:792.3px;color:#cb4848">d</i>
<i class="b" style="left:1193.63px;top:792.3px;color:#f0f0f0">isks</i>
<i class="b" style="left:1859.12px;top:792.3px;color:#cb4848">i</i>
<i class="b" style="left:1871.45px;top:792.3px;color:#f0f0f0">o</i>
<i class="sup" style="left:1957.71px;top:792.3px;color:#cb4848">⁴</i>
<i class="b" style="left:1970.04px;top:792.3px;color:#f0f0f0">proc</i>
<i class="b" style="left:2043.98px;top:792.3px;color:#cb4848">f</i>
<i class="b" style="left:2056.31px;top:792.3px;color:#f0f0f0">ilter</i>
<i class="b" style="left:3350.33px;top:792.3px;color:#f0f0f0">per-</i>
<i class="b" style="left:3399.62px;top:792.3px;color:#cb4848">c</i>
<i class="b" style="left:3411.95px;top:792.3px;color:#f0f0f0">ore</i>
<i class="b" style="left:3473.57px;top:792.3px;color:#cb4848">r</i>
<i class="b" style="left:3485.89px;top:792.3px;color:#f0f0f0">everse</i>
<i class="b" style="left:3584.48px;top:792.3px;color:#f0f0f0">tre</i>
<i class="b" style="left:3621.45px;top:792.3px;color:#cb4848">e</i>
<i class="b" style="left:3658.43px;top:792.3px;color:#cb4848">&lt;</i>
<i class="b" style="left:3670.75px;top:792.3px;color:#f0f0f0"> pid </i>
<i class="b" style="left:3732.37px;top:792.3px;color:#cb4848">&gt;</i>
<i class="b" style="left:429.54px;top:820.3px;color:#f0f0f0">Total:</i>
<i class="b" style="left:1033.41px;top:820.3px;color:#f0f0f0">3.82 GiB</i>
<i class="b" style="left:1168.98px;top:820.3px;color:#f0f0f0">root</i>
<i class="n" style="left:1489.4px;top:820.3px;color:#d6d6d6">▼152K</i>
<i class="b" style="left:1797.5px;top:820.3px;color:#f0f0f0">57.0 GiB</i>
<i class="b" style="left:1982.36px;top:820.3px;color:#f0f0f0">Pid: Program:</i>
<i class="b" style="left:2253.49px;top:820.3px;color:#f0f0f0">Command:</i>
<i class="b" style="left:3301.03px;top:820.3px;color:#f0f0f0">Threads: User:</i>
<i class="b" style="left:3559.83px;top:820.3px;color:#f0f0f0">MemB</i>
<i class="b" style="left:3695.4px;top:820.3px;color:#f0f0f0">Cpu%  </i>
<i class="n" style="left:429.54px;top:848.3px;color:#d6d6d6">Used:</i>
<i class="n" style="left:1033.41px;top:848.3px;color:#d6d6d6">2.76 GiB</i>
<i class="n" style="left:1168.98px;top:848.3px;color:#d6d6d6">IO%</i>
<i class="n" style="left:2019.33px;top:848.3px;color:#d6d6d6">1</i>
<i class="n" style="left:2043.98px;top:848.3px;color:#80d0a3">systemd</i>
<i class="n" style="left:2253.49px;top:848.3px;color:#d6d6d6">/sbin/init</i>
<i class="n" style="left:3387.3px;top:848.3px;color:#80d0a3">1</i>
<i class="n" style="left:3411.95px;top:848.3px;color:#d6d6d6">root</i>
<i class="n" style="left:3559.83px;top:848.3px;color:#80d0a3">9.2M</i>
<i class="n" style="left:3707.72px;top:848.3px;color:#80d0a3">0.4</i>
<i class="n" style="left:441.86px;top:876.3px;color:#d6d6d6">72%</i>
<i class="n" style="left:1168.98px;top:876.3px;color:#d6d6d6">Used: 37%</i>
<i class="n" style="left:1797.5px;top:876.3px;color:#d6d6d6">21.0 GiB</i>
<i class="n" style="left:2019.33px;top:876.3px;color:#d3d3d3">2</i>
<i class="n" style="left:2043.98px;top:876.3px;color:#7fcda1">kthreadd</i>
<i class="n" style="left:3387.3px;top:876.3px;color:#7fcda1">1</i>
<i class="n" style="left:3411.95px;top:876.3px;color:#d3d3d3">root</i>
<i class="n" style="left:3584.48px;top:876.3px;color:#7fcda1">0B</i>
<i class="n" style="left:3707.72px;top:876.3px;color:#7fcda1">0.0</i>
<i class="n" style="left:1168.98px;top:904.3px;color:#d6d6d6">Free: 63%</i>
<i class="n" style="left:1797.5px;top:904.3px;color:#d6d6d6">35.9 GiB</i>
<i class="n" style="left:2019.33px;top:904.3px;color:#d0d0d0">3</i>
<i class="n" style="left:2043.98px;top:904.3px;color:#7eca9f">rcu_gp</i>
<i class="n" style="left:3387.3px;top:904.3px;color:#7eca9f">1</i>
<i class="n" style="left:3411.95px;top:904.3px;color:#d0d0d0">root</i>
<i class="n" style="left:3584.48px;top:904.3px;color:#7eca9f">0B</i>
<i class="n" style="left:3707.72px;top:904.3px;color:#7eca9f">0.0</i>
<i class="n" style="left:2019.33px;top:932.3px;color:#cdcdcd">4</i>
<i class="n" style="left:2043.98px;top:932.3px;color:#7cc89d">rcu_par_gp</i>
<i class="n" style="left:3387.3px;top:932.3px;color:#7cc89d">1</i>
<i class="n" style="left:3411.95px;top:932.3px;color:#cdcdcd">root</i>
<i class="n" style="left:3584.48px;top:932.3px;color:#7cc89d">0B</i>
<i class="n" style="left:3707.72px;top:932.3px;color:#7cc89d">0.0</i>
<i class="b" style="left:1168.98px;top:960.3px;color:#f0f0f0">swap</i>
<i class="b" style="left:1797.5px;top:960.3px;color:#f0f0f0">1.99 GiB</i>
<i class="n" style="left:2019.33px;top:960.3px;color:#cacaca">5</i>
<i class="n" style="left:2043.98px;top:960.3px;color:#7bc59b">slub_flushwq</i>
<i class="n" style="left:3387.3px;top:960.3px;color:#7bc59b">1</i>
<i class="n" style="left:3411.95px;top:960.3px;color:#cacaca">root</i>
<i class="n" style="left:3584.48px;top:960.3px;color:#7bc59b">0B</i>
<i class="n" style="left:3707.72px;top:960.3px;color:#7bc59b">0.0</i>
<i class="n" style="left:1168.98px;top:988.3px;color:#d6d6d6">Used: 67%</i>
<i class="n" style="left:1797.5px;top:988.3px;color:#d6d6d6">1.34 GiB</i>
<i class="n" style="left:2019.33px;top:988.3px;color:#c7c7c7">6</i>
<i class="n" style="left:2043.98px;top:988.3px;color:#7ac29a">netns</i>
<i class="n" style="left:3387.3px;top:988.3px;color:#7ac29a">1</i>
<i class="n" style="left:3411.95px;top:988.3px;color:#c7c7c7">root</i>
<i class="n" style="left:3584.48px;top:988.3px;color:#7ac29a">0B</i>
<i class="n" style="left:3707.72px;top:988.3px;color:#7ac29a">0.0</i>
<i class="n" style="left:429.54px;top:1016.3px;color:#d6d6d6">Available:</i>
<i class="n" style="left:1033.41px;top:1016.3px;color:#d6d6d6">1.05 GiB</i>
<i class="n" style="left:1168.98px;top:1016.3px;color:#d6d6d6">Free: 33%</i>
<i class="n" style="left:1809.83px;top:1016.3px;color:#d6d6d6">671 MiB</i>
<i class="n" style="left:2019.33px;top:1016.3px;color:#c4c4c4">8</i>
<i class="n" style="left:2043.98px;top:1016.3px;color:#79bf98">kworker/0:0H-eve</i>
<i class="n" style="left:3387.3px;top:1016.3px;color:#79bf98">1</i>
<i class="n" style="left:3411.95px;top:1016.3px;color:#c4c4c4">root</i>
<i class="n" style="left:3584.48px;top:1016.3px;color:#79bf98">0B</i>
<i class="n" style="left:3707.72px;top:1016.3px;color:#79bf98">0.0</i>
<i class="n" style="left:441.86px;top:1044.3px;color:#d6d6d6">28%</i>
<i class="n" style="left:2007.01px;top:1044.3px;color:#c1c1c1">10</i>
<i class="n" style="left:2043.98px;top:1044.3px;color:#78bc96">mm_percpu_wq</i>
<i class="n" style="left:3387.3px;top:1044.3px;color:#78bc96">1</i>
<i class="n" style="left:3411.95px;top:1044.3px;color:#c1c1c1">root</i>
<i class="n" style="left:3584.48px;top:1044.3px;color:#78bc96">0B</i>
<i class="n" style="left:3707.72px;top:1044.3px;color:#78bc96">0.0</i>
<i class="n" style="left:2007.01px;top:1072.3px;color:#bfbfbf">11</i>
<i class="n" style="left:2043.98px;top:1072.3px;color:#77b994">rcu_tasks_kthrea</i>
<i class="n" style="left:3387.3px;top:1072.3px;color:#77b994">1</i>
<i class="n" style="left:3411.95px;top:1072.3px;color:#bfbfbf">root</i>
<i class="n" style="left:3584.48px;top:1072.3px;color:#77b994">0B</i>
<i class="n" style="left:3707.72px;top:1072.3px;color:#77b994">0.0</i>
<i class="n" style="left:2007.01px;top:1100.3px;color:#bcbcbc">12</i>
<i class="n" style="left:2043.98px;top:1100.3px;color:#75b792">rcu_tasks_rude_k</i>
<i class="n" style="left:3387.3px;top:1100.3px;color:#75b792">1</i>
<i class="n" style="left:3411.95px;top:1100.3px;color:#bcbcbc">root</i>
<i class="n" style="left:3584.48px;top:1100.3px;color:#75b792">0B</i>
<i class="n" style="left:3707.72px;top:1100.3px;color:#75b792">0.0</i>
<i class="n" style="left:2007.01px;top:1128.3px;color:#b9b9b9">13</i>
<i class="n" style="left:2043.98px;top:1128.3px;color:#74b490">rcu_tasks_trace_</i>
<i class="n" style="left:3387.3px;top:1128.3px;color:#74b490">1</i>
<i class="n" style="left:3411.95px;top:1128.3px;color:#b9b9b9">root</i>
<i class="n" style="left:3584.48px;top:1128.3px;color:#74b490">0B</i>
<i class="n" style="left:3707.72px;top:1128.3px;color:#74b490">0.0</i>
<i class="n" style="left:2007.01px;top:1156.3px;color:#b6b6b6">14</i>
<i class="n" style="left:2043.98px;top:1156.3px;color:#73b18e">ksoftirqd/0</i>
<i class="n" style="left:3387.3px;top:1156.3px;color:#73b18e">1</i>
<i class="n" style="left:3411.95px;top:1156.3px;color:#b6b6b6">root</i>
<i class="n" style="left:3584.48px;top:1156.3px;color:#73b18e">0B</i>
<i class="n" style="left:3707.72px;top:1156.3px;color:#73b18e">0.0</i>
<i class="n" style="left:429.54px;top:1184.3px;color:#d6d6d6">Cached:</i>
<i class="n" style="left:1045.74px;top:1184.3px;color:#d6d6d6">839 MiB</i>
<i class="n" style="left:2007.01px;top:1184.3px;color:#b3b3b3">15</i>
<i class="n" style="left:2043.98px;top:1184.3px;color:#72ae8c">rcu_preempt</i>
<i class="n" style="left:3387.3px;top:1184.3px;color:#72ae8c">1</i>
<i class="n" style="left:3411.95px;top:1184.3px;color:#b3b3b3">root</i>
<i class="n" style="left:3584.48px;top:1184.3px;color:#72ae8c">0B</i>
<i class="n" style="left:3707.72px;top:1184.3px;color:#72ae8c">0.0</i>
<i class="n" style="left:441.86px;top:1212.3px;color:#d6d6d6">21%</i>
<i class="n" style="left:2007.01px;top:1212.3px;color:#b0b0b0">16</i>
<i class="n" style="left:2043.98px;top:1212.3px;color:#71ab8a">migration/0</i>
<i class="n" style="left:3387.3px;top:1212.3px;color:#71ab8a">1</i>
<i class="n" style="left:3411.95px;top:1212.3px;color:#b0b0b0">root</i>
<i class="n" style="left:3584.48px;top:1212.3px;color:#71ab8a">0B</i>
<i class="n" style="left:3707.72px;top:1212.3px;color:#71ab8a">0.0</i>
<i class="n" style="left:2007.01px;top:1240.3px;color:#adadad">18</i>
<i class="n" style="left:2043.98px;top:1240.3px;color:#70a988">cpuhp/0</i>
<i class="n" style="left:3387.3px;top:1240.3px;color:#70a988">1</i>
<i class="n" style="left:3411.95px;top:1240.3px;color:#adadad">root</i>
<i class="n" style="left:3584.48px;top:1240.3px;color:#70a988">0B</i>
<i class="n" style="left:3707.72px;top:1240.3px;color:#70a988">0.0</i>
<i class="n" style="left:2007.01px;top:1268.3px;color:#aaaaaa">19</i>
<i class="n" style="left:2043.98px;top:1268.3px;color:#6ea687">cpuhp/1</i>
<i class="n" style="left:3387.3px;top:1268.3px;color:#6ea687">1</i>
<i class="n" style="left:3411.95px;top:1268.3px;color:#aaaaaa">root</i>
<i class="n" style="left:3584.48px;top:1268.3px;color:#6ea687">0B</i>
<i class="n" style="left:3707.72px;top:1268.3px;color:#6ea687">0.0</i>
<i class="n" style="left:2007.01px;top:1296.3px;color:#a7a7a7">20</i>
<i class="n" style="left:2043.98px;top:1296.3px;color:#6da385">migration/1</i>
<i class="n" style="left:3387.3px;top:1296.3px;color:#6da385">1</i>
<i class="n" style="left:3411.95px;top:1296.3px;color:#a7a7a7">root</i>
<i class="n" style="left:3584.48px;top:1296.3px;color:#6da385">0B</i>
<i class="n" style="left:3707.72px;top:1296.3px;color:#6da385">0.0</i>
<i class="n" style="left:2007.01px;top:1324.3px;color:#a4a4a4">21</i>
<i class="n" style="left:2043.98px;top:1324.3px;color:#6ca083">ksoftirqd/1</i>
<i class="n" style="left:3387.3px;top:1324.3px;color:#6ca083">1</i>
<i class="n" style="left:3411.95px;top:1324.3px;color:#a4a4a4">root</i>
<i class="n" style="left:3584.48px;top:1324.3px;color:#6ca083">0B</i>
<i class="n" style="left:3707.72px;top:1324.3px;color:#6ca083">0.0</i>
<i class="n" style="left:429.54px;top:1352.3px;color:#d6d6d6">Free:</i>
<i class="n" style="left:1045.74px;top:1352.3px;color:#d6d6d6">383 MiB</i>
<i class="n" style="left:2007.01px;top:1352.3px;color:#a1a1a1">26</i>
<i class="n" style="left:2043.98px;top:1352.3px;color:#6b9d81">kdevtmpfs</i>
<i class="n" style="left:3387.3px;top:1352.3px;color:#6b9d81">1</i>
<i class="n" style="left:3411.95px;top:1352.3px;color:#a1a1a1">root</i>
<i class="n" style="left:3584.48px;top:1352.3px;color:#6b9d81">0B</i>
<i class="n" style="left:3707.72px;top:1352.3px;color:#6b9d81">0.0</i>
<i class="n" style="left:441.86px;top:1380.3px;color:#d6d6d6">10%</i>
<i class="n" style="left:2007.01px;top:1380.3px;color:#9e9e9e">27</i>
<i class="n" style="left:2043.98px;top:1380.3px;color:#6a9b7f">inet_frag_wq</i>
<i class="n" style="left:3387.3px;top:1380.3px;color:#6a9b7f">1</i>
<i class="n" style="left:3411.95px;top:1380.3px;color:#9e9e9e">root</i>
<i class="n" style="left:3584.48px;top:1380.3px;color:#6a9b7f">0B</i>
<i class="n" style="left:3707.72px;top:1380.3px;color:#6a9b7f">0.0</i>
<i class="n" style="left:2007.01px;top:1408.3px;color:#9b9b9b">28</i>
<i class="n" style="left:2043.98px;top:1408.3px;color:#68987d">kauditd</i>
<i class="n" style="left:3387.3px;top:1408.3px;color:#68987d">1</i>
<i class="n" style="left:3411.95px;top:1408.3px;color:#9b9b9b">root</i>
<i class="n" style="left:3584.48px;top:1408.3px;color:#68987d">0B</i>
<i class="n" style="left:3707.72px;top:1408.3px;color:#68987d">0.0</i>
<i class="n" style="left:2007.01px;top:1436.3px;color:#989898">29</i>
<i class="n" style="left:2043.98px;top:1436.3px;color:#67957b">khungtaskd</i>
<i class="n" style="left:3387.3px;top:1436.3px;color:#67957b">1</i>
<i class="n" style="left:3411.95px;top:1436.3px;color:#989898">root</i>
<i class="n" style="left:3584.48px;top:1436.3px;color:#67957b">0B</i>
<i class="n" style="left:3707.72px;top:1436.3px;color:#67957b">0.0</i>
<i class="n" style="left:2007.01px;top:1464.3px;color:#959595">30</i>
<i class="n" style="left:2043.98px;top:1464.3px;color:#669279">oom_reaper</i>
<i class="n" style="left:3387.3px;top:1464.3px;color:#669279">1</i>
<i class="n" style="left:3411.95px;top:1464.3px;color:#959595">root</i>
<i class="n" style="left:3584.48px;top:1464.3px;color:#669279">0B</i>
<i class="n" style="left:3707.72px;top:1464.3px;color:#669279">0.0</i>
<i class="n" style="left:2007.01px;top:1492.3px;color:#929292">32</i>
<i class="n" style="left:2043.98px;top:1492.3px;color:#658f77">writeback</i>
<i class="n" style="left:3387.3px;top:1492.3px;color:#658f77">1</i>
<i class="n" style="left:3411.95px;top:1492.3px;color:#929292">root</i>
<i class="n" style="left:3584.48px;top:1492.3px;color:#658f77">0B</i>
<i class="n" style="left:3707.72px;top:1492.3px;color:#658f77">0.0</i>
<i class="n" style="left:2007.01px;top:1520.3px;color:#909090">33</i>
<i class="n" style="left:2043.98px;top:1520.3px;color:#648c76">kcompactd0</i>
<i class="n" style="left:3387.3px;top:1520.3px;color:#648c76">1</i>
<i class="n" style="left:3411.95px;top:1520.3px;color:#909090">root</i>
<i class="n" style="left:3584.48px;top:1520.3px;color:#648c76">0B</i>
<i class="n" style="left:3707.72px;top:1520.3px;color:#648c76">0.0</i>
<i class="sup" style="left:441.86px;top:1548.3px;color:#cb4848">³</i>
<i class="b" style="left:454.19px;top:1548.3px;color:#f0f0f0">net</i>
<i class="b" style="left:515.81px;top:1548.3px;color:#f0f0f0">192.210.197.55</i>
<i class="b" style="left:1551.02px;top:1548.3px;color:#f0f0f0">s</i>
<i class="b" style="left:1563.35px;top:1548.3px;color:#cb4848">y</i>
<i class="b" style="left:1575.67px;top:1548.3px;color:#f0f0f0">nc</i>
<i class="b" style="left:1624.97px;top:1548.3px;color:#cb4848">a</i>
<i class="b" style="left:1637.29px;top:1548.3px;color:#f0f0f0">uto</i>
<i class="b" style="left:1698.91px;top:1548.3px;color:#cb4848">z</i>
<i class="b" style="left:1711.23px;top:1548.3px;color:#f0f0f0">ero</i>
<i class="b" style="left:1772.85px;top:1548.3px;color:#cb4848">&lt;b</i>
<i class="b" style="left:1797.5px;top:1548.3px;color:#f0f0f0"> eth0 </i>
<i class="b" style="left:1871.45px;top:1548.3px;color:#cb4848">n&gt;</i>
<i class="n" style="left:2007.01px;top:1548.3px;color:#8d8d8d">34</i>
<i class="n" style="left:2043.98px;top:1548.3px;color:#638a74">ksmd</i>
<i class="n" style="left:3387.3px;top:1548.3px;color:#638a74">1</i>
<i class="n" style="left:3411.95px;top:1548.3px;color:#8d8d8d">root</i>
<i class="n" style="left:3584.48px;top:1548.3px;color:#638a74">0B</i>
<i class="n" style="left:3707.72px;top:1548.3px;color:#638a74">0.0</i>
<i class="n" style="left:417.21px;top:1576.3px;color:#6a6a6a">10K</i>
<i class="n" style="left:2007.01px;top:1576.3px;color:#8a8a8a">36</i>
<i class="n" style="left:2043.98px;top:1576.3px;color:#618772">khugepaged</i>
<i class="n" style="left:3387.3px;top:1576.3px;color:#618772">1</i>
<i class="n" style="left:3411.95px;top:1576.3px;color:#8a8a8a">root</i>
<i class="n" style="left:3584.48px;top:1576.3px;color:#618772">0B</i>
<i class="n" style="left:3707.72px;top:1576.3px;color:#618772">0.0</i>
<i class="n" style="left:2007.01px;top:1604.3px;color:#878787">37</i>
<i class="n" style="left:2043.98px;top:1604.3px;color:#608470">kintegrityd</i>
<i class="n" style="left:3387.3px;top:1604.3px;color:#608470">1</i>
<i class="n" style="left:3411.95px;top:1604.3px;color:#878787">root</i>
<i class="n" style="left:3584.48px;top:1604.3px;color:#608470">0B</i>
<i class="n" style="left:3707.72px;top:1604.3px;color:#608470">0.0</i>
<i class="n" style="left:2007.01px;top:1632.3px;color:#848484">38</i>
<i class="n" style="left:2043.98px;top:1632.3px;color:#5f816e">kblockd</i>
<i class="n" style="left:3387.3px;top:1632.3px;color:#5f816e">1</i>
<i class="n" style="left:3411.95px;top:1632.3px;color:#848484">root</i>
<i class="n" style="left:3584.48px;top:1632.3px;color:#5f816e">0B</i>
<i class="n" style="left:3707.72px;top:1632.3px;color:#5f816e">0.0</i>
<i class="n" style="left:2007.01px;top:1660.3px;color:#818181">39</i>
<i class="n" style="left:2043.98px;top:1660.3px;color:#5e7e6c">blkcg_punt_bio</i>
<i class="n" style="left:3387.3px;top:1660.3px;color:#5e7e6c">1</i>
<i class="n" style="left:3411.95px;top:1660.3px;color:#818181">root</i>
<i class="n" style="left:3584.48px;top:1660.3px;color:#5e7e6c">0B</i>
<i class="n" style="left:3707.72px;top:1660.3px;color:#5e7e6c">0.0</i>
<i class="n" style="left:2007.01px;top:1688.3px;color:#7e7e7e">40</i>
<i class="n" style="left:2043.98px;top:1688.3px;color:#5d7c6a">tpm_dev_wq</i>
<i class="n" style="left:3387.3px;top:1688.3px;color:#5d7c6a">1</i>
<i class="n" style="left:3411.95px;top:1688.3px;color:#7e7e7e">root</i>
<i class="n" style="left:3584.48px;top:1688.3px;color:#5d7c6a">0B</i>
<i class="n" style="left:3707.72px;top:1688.3px;color:#5d7c6a">0.0</i>
<i class="b" style="left:1612.64px;top:1716.3px;color:#f0f0f0">download</i>
<i class="n" style="left:2007.01px;top:1716.3px;color:#7b7b7b">41</i>
<i class="n" style="left:2043.98px;top:1716.3px;color:#5b7968">edac-poller</i>
<i class="n" style="left:3387.3px;top:1716.3px;color:#5b7968">1</i>
<i class="n" style="left:3411.95px;top:1716.3px;color:#7b7b7b">root</i>
<i class="n" style="left:3584.48px;top:1716.3px;color:#5b7968">0B</i>
<i class="n" style="left:3707.72px;top:1716.3px;color:#5b7968">0.0</i>
<i class="n" style="left:1587.99px;top:1744.3px;color:#d6d6d6">▼ 4.38 KiB/s (35.0 Kibps)</i>
<i class="n" style="left:2007.01px;top:1744.3px;color:#787878">42</i>
<i class="n" style="left:2043.98px;top:1744.3px;color:#5a7666">devfreq_wq</i>
<i class="n" style="left:3387.3px;top:1744.3px;color:#5a7666">1</i>
<i class="n" style="left:3411.95px;top:1744.3px;color:#787878">root</i>
<i class="n" style="left:3584.48px;top:1744.3px;color:#5a7666">0B</i>
<i class="n" style="left:3707.72px;top:1744.3px;color:#5a7666">0.0</i>
<i class="n" style="left:1587.99px;top:1772.3px;color:#d6d6d6">▼ Top:       (69.9 Kibps)</i>
<i class="n" style="left:2007.01px;top:1772.3px;color:#757575">43</i>
<i class="n" style="left:2043.98px;top:1772.3px;color:#597364">kworker/1:1H-kbl</i>
<i class="n" style="left:3387.3px;top:1772.3px;color:#597364">1</i>
<i class="n" style="left:3411.95px;top:1772.3px;color:#757575">root</i>
<i class="n" style="left:3584.48px;top:1772.3px;color:#597364">0B</i>
<i class="n" style="left:3707.72px;top:1772.3px;color:#597364">0.0</i>
<i class="n" style="left:1587.99px;top:1800.3px;color:#d6d6d6">▼ Total:         18.1 GiB</i>
<i class="n" style="left:2007.01px;top:1800.3px;color:#727272">44</i>
<i class="n" style="left:2043.98px;top:1800.3px;color:#587063">kswapd0</i>
<i class="n" style="left:3387.3px;top:1800.3px;color:#587063">1</i>
<i class="n" style="left:3411.95px;top:1800.3px;color:#727272">root</i>
<i class="n" style="left:3584.48px;top:1800.3px;color:#587063">0B</i>
<i class="n" style="left:3707.72px;top:1800.3px;color:#587063">0.0</i>
<i class="n" style="left:2007.01px;top:1828.3px;color:#6f6f6f">50</i>
<i class="n" style="left:2043.98px;top:1828.3px;color:#576d61">kthrotld</i>
<i class="n" style="left:3387.3px;top:1828.3px;color:#576d61">1</i>
<i class="n" style="left:3411.95px;top:1828.3px;color:#6f6f6f">root</i>
<i class="n" style="left:3584.48px;top:1828.3px;color:#576d61">0B</i>
<i class="n" style="left:3707.72px;top:1828.3px;color:#576d61">0.0</i>
<i class="n" style="left:1587.99px;top:1856.3px;color:#d6d6d6">▲ 23.1 KiB/s  (185 Kibps)</i>
<i class="n" style="left:2007.01px;top:1856.3px;color:#6c6c6c">52</i>
<i class="n" style="left:2043.98px;top:1856.3px;color:#566b5f">acpi_thermal_pm</i>
<i class="n" style="left:3387.3px;top:1856.3px;color:#566b5f">1</i>
<i class="n" style="left:3411.95px;top:1856.3px;color:#6c6c6c">root</i>
<i class="n" style="left:3584.48px;top:1856.3px;color:#566b5f">0B</i>
<i class="n" style="left:3707.72px;top:1856.3px;color:#566b5f">0.0</i>
<i class="n" style="left:1587.99px;top:1884.3px;color:#d6d6d6">▲ Top:        (387 Kibps)</i>
<i class="n" style="left:2007.01px;top:1884.3px;color:#696969">54</i>
<i class="n" style="left:2043.98px;top:1884.3px;color:#54685d">mld</i>
<i class="n" style="left:3387.3px;top:1884.3px;color:#54685d">1</i>
<i class="n" style="left:3411.95px;top:1884.3px;color:#696969">root</i>
<i class="n" style="left:3584.48px;top:1884.3px;color:#54685d">0B</i>
<i class="n" style="left:3707.72px;top:1884.3px;color:#54685d">0.0</i>
<i class="n" style="left:1587.99px;top:1912.3px;color:#d6d6d6">▲ Total:         10.5 GiB</i>
<i class="n" style="left:2007.01px;top:1912.3px;color:#666666">55</i>
<i class="n" style="left:2043.98px;top:1912.3px;color:#53655b">ipv6_addrconf</i>
<i class="n" style="left:3387.3px;top:1912.3px;color:#53655b">1</i>
<i class="n" style="left:3411.95px;top:1912.3px;color:#666666">root</i>
<i class="n" style="left:3584.48px;top:1912.3px;color:#53655b">0B</i>
<i class="n" style="left:3707.72px;top:1912.3px;color:#53655b">0.0</i>
<i class="b" style="left:1612.64px;top:1940.3px;color:#f0f0f0">upload</i>
<i class="n" style="left:2007.01px;top:1940.3px;color:#636363">60</i>
<i class="n" style="left:2043.98px;top:1940.3px;color:#526259">kstrp</i>
<i class="n" style="left:3387.3px;top:1940.3px;color:#526259">1</i>
<i class="n" style="left:3411.95px;top:1940.3px;color:#636363">root</i>
<i class="n" style="left:3584.48px;top:1940.3px;color:#526259">0B</i>
<i class="n" style="left:3707.72px;top:1940.3px;color:#526259">0.0</i>
<i class="n" style="left:2007.01px;top:1968.3px;color:#616161">63</i>
<i class="n" style="left:2043.98px;top:1968.3px;color:#515f57">zswap-shrink</i>
<i class="n" style="left:3387.3px;top:1968.3px;color:#515f57">1</i>
<i class="n" style="left:3411.95px;top:1968.3px;color:#616161">root</i>
<i class="n" style="left:3584.48px;top:1968.3px;color:#515f57">0B</i>
<i class="n" style="left:3707.72px;top:1968.3px;color:#515f57">0.0</i>
<i class="n" style="left:2007.01px;top:1996.3px;color:#5e5e5e">64</i>
<i class="n" style="left:2043.98px;top:1996.3px;color:#505d55">kworker/u5:0</i>
<i class="n" style="left:3387.3px;top:1996.3px;color:#505d55">1</i>
<i class="n" style="left:3411.95px;top:1996.3px;color:#5e5e5e">root</i>
<i class="n" style="left:3584.48px;top:1996.3px;color:#505d55">0B</i>
<i class="n" style="left:3707.72px;top:1996.3px;color:#505d55">0.0</i>
<i class="n" style="left:1994.69px;top:2024.3px;color:#5b5b5b">162</i>
<i class="n" style="left:2043.98px;top:2024.3px;color:#4f5a53">kworker/0:1H-kbl</i>
<i class="n" style="left:3387.3px;top:2024.3px;color:#4f5a53">1</i>
<i class="n" style="left:3411.95px;top:2024.3px;color:#5b5b5b">root</i>
<i class="n" style="left:3584.48px;top:2024.3px;color:#4f5a53">0B</i>
<i class="n" style="left:3707.72px;top:2024.3px;color:#4f5a53">0.0</i>
<i class="n" style="left:1994.69px;top:2052.3px;color:#585858">167</i>
<i class="n" style="left:2043.98px;top:2052.3px;color:#4d5752">ata_sff</i>
<i class="n" style="left:3387.3px;top:2052.3px;color:#4d5752">1</i>
<i class="n" style="left:3411.95px;top:2052.3px;color:#585858">root</i>
<i class="n" style="left:3584.48px;top:2052.3px;color:#4d5752">0B</i>
<i class="n" style="left:3707.72px;top:2052.3px;color:#4d5752">0.0</i>
<i class="n" style="left:417.21px;top:2080.3px;color:#6a6a6a">10K</i>
<i class="n" style="left:1994.69px;top:2080.3px;color:#555555">168</i>
<i class="n" style="left:2043.98px;top:2080.3px;color:#4c5450">scsi_eh_0</i>
<i class="n" style="left:3387.3px;top:2080.3px;color:#4c5450">1</i>
<i class="n" style="left:3411.95px;top:2080.3px;color:#555555">root</i>
<i class="n" style="left:3584.48px;top:2080.3px;color:#4c5450">0B</i>
<i class="n" style="left:3707.72px;top:2080.3px;color:#4c5450">0.0</i>
<i class="b" style="left:3757.02px;top:2080.3px;color:#f0f0f0"> </i>
<i class="b" style="left:1945.39px;top:2108.3px;color:#464646">  </i>
<i class="b" style="left:1970.04px;top:2108.3px;color:#f0f0f0">select </i>
<i class="b" style="left:2056.31px;top:2108.3px;color:#cb4848"> </i>
<i class="b" style="left:2093.28px;top:2108.3px;color:#464646">info  </i>
<i class="b" style="left:2191.87px;top:2108.3px;color:#464646">terminate</i>
<i class="b" style="left:2327.43px;top:2108.3px;color:#464646">kill</i>
<i class="b" style="left:2401.38px;top:2108.3px;color:#464646">signals</i>
<i class="b" style="left:3695.4px;top:2108.3px;color:#f0f0f0">0/308</i>
</div></body></html>
